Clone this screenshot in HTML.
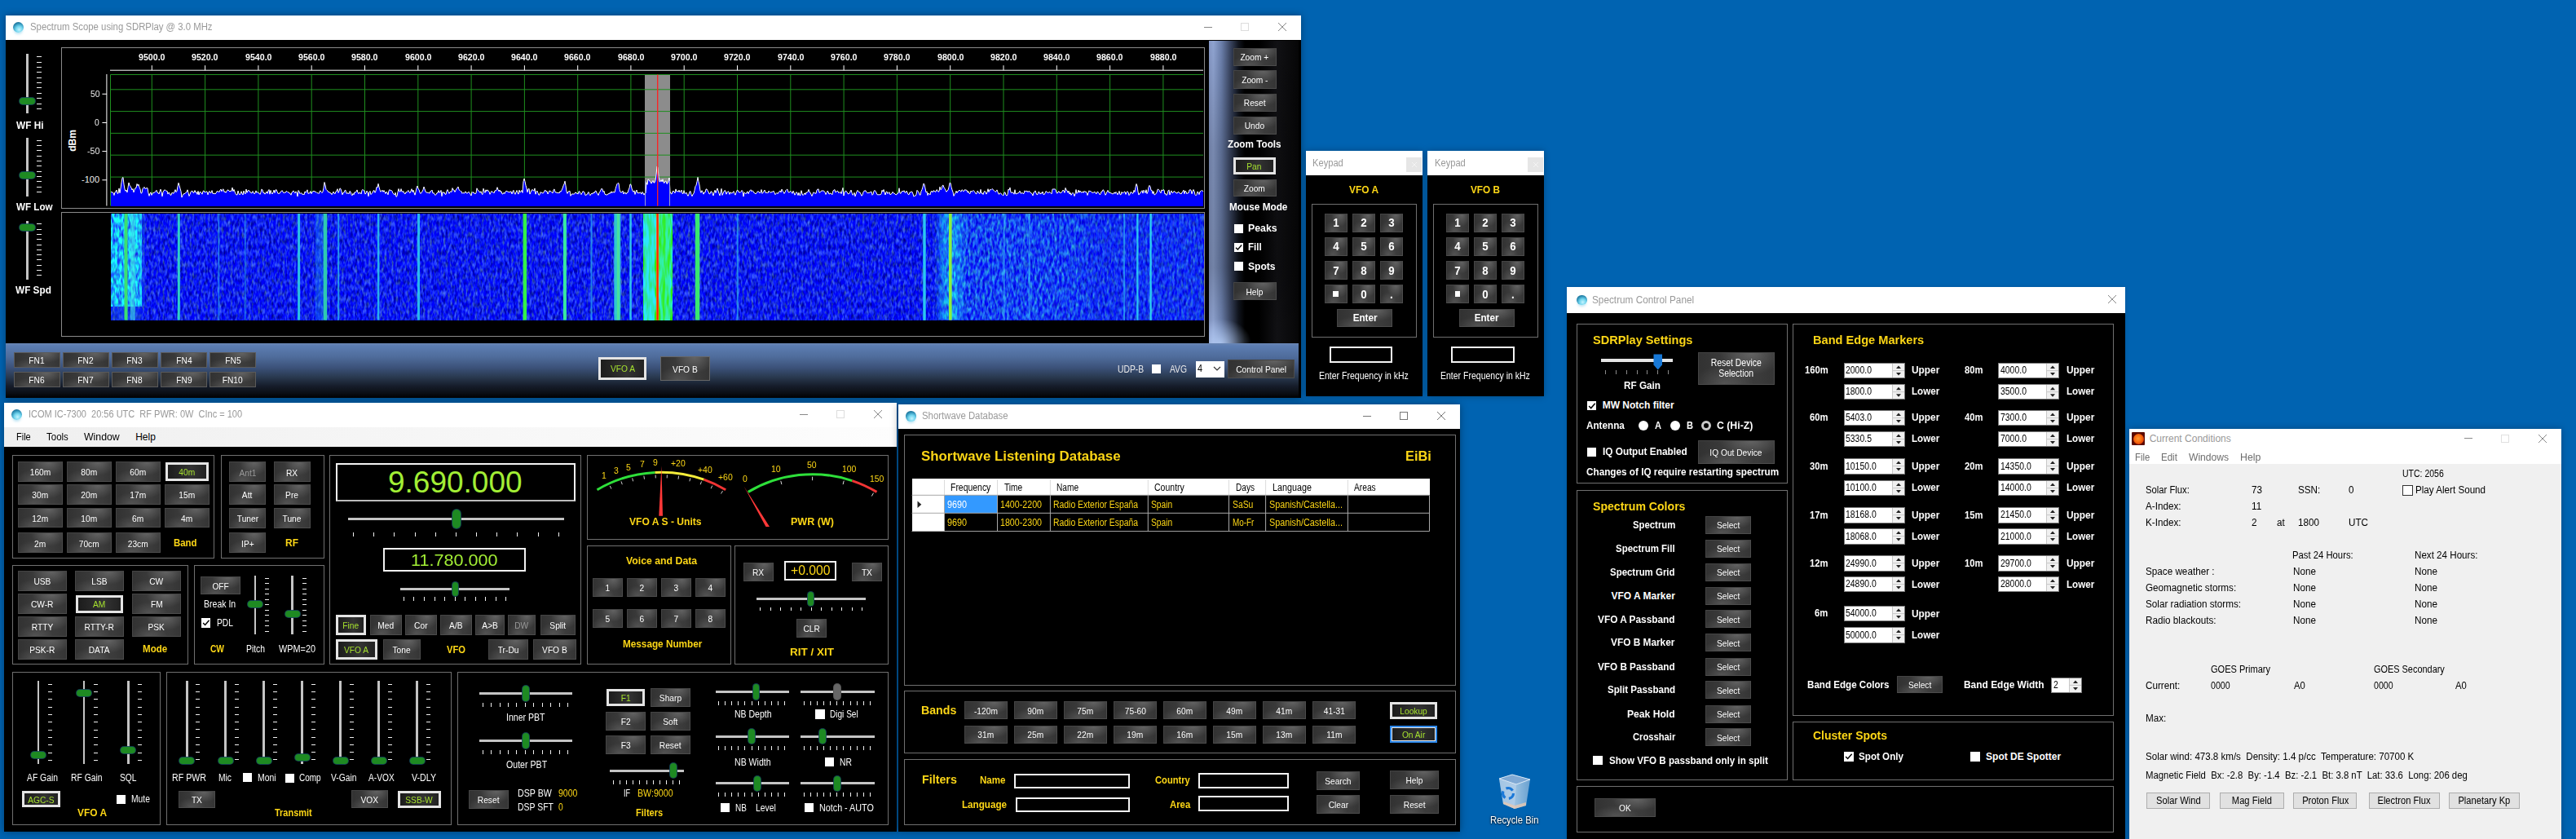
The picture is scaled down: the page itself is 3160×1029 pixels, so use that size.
<!DOCTYPE html><html><head><meta charset="utf-8"><title>desktop</title><style>
html,body{margin:0;padding:0}
body{width:3160px;height:1029px;overflow:hidden;position:relative;background:#0063b1;font-family:"Liberation Sans",sans-serif;font-size:12px}
div,span.t,svg.a{position:absolute;box-sizing:border-box}
.t{white-space:pre;transform-origin:0 50%;display:block}
.win{box-shadow:0 0 9px rgba(0,0,0,.36)}
.win.s2{box-shadow:0 0 8px rgba(0,0,0,.27)}
.win.s3{box-shadow:0 0 5px rgba(0,0,0,.13)}
.tb{background:#fff}
.ico{border-radius:50%;background:radial-gradient(circle at 58% 72%,#c4f4ff 0%,#6fd4ee 35%,#2484ac 68%,#0f4868 100%);box-shadow:0 3px 3px -1px rgba(120,200,230,.45)}
.g{border:1px solid #6f6f6f}
.b{background:radial-gradient(ellipse 42% 70% at 70% 0%,rgba(255,255,255,.2),rgba(255,255,255,0) 100%),radial-gradient(ellipse 40% 60% at 33% 100%,rgba(255,255,255,.13),rgba(255,255,255,0) 100%),linear-gradient(90deg,#323232 0%,#3e3e3e 50%,#3b3b3b 80%,#353535 100%);border:1px solid #4c4c4c;border-top-color:#444;border-left-color:#444;color:#fff;display:flex;align-items:center;justify-content:center;white-space:nowrap;overflow:hidden}
.b.sel{padding-top:0;border:3px solid #e4e4e4;color:#a6e22e;background:linear-gradient(90deg,#1c1c1c,#333 60%,#222)}
.b.dis{color:#999}
.trk{background:#c4c4c4}
.tk{background:#f0f0f0}
.th{background:#1e8a22;border-radius:5px;box-shadow:0 0 0 1px rgba(20,70,90,.9)}
.th.gy{background:#666;box-shadow:0 0 0 1px #555}
.ck{background:#fff}
.inp{border:2px solid #f4f4f4;background:#000}
.wb{background:#e1e1e1;border:1px solid #adadad;color:#000;display:flex;align-items:center;justify-content:center;white-space:nowrap}
</style></head><body><div style="left:0;top:0;width:3160px;height:1029px;overflow:hidden"><div class="win" style="left:7px;top:19px;width:1589px;height:469px;background:#000"></div>
<div class="tb" style="left:7.0px;top:19.0px;width:1589.0px;height:30.0px;"></div>
<div class="ico" style="left:16.0px;top:27.0px;width:13.0px;height:13.0px;"></div>
<span class="t" style="left:36.6px;top:26.3px;font-size:12px;line-height:14.4px;color:#999;transform:scaleX(0.946);">Spectrum Scope using SDRPlay @ 3.0 MHz</span>
<div class="" style="left:1477.0px;top:33.0px;width:10.0px;height:1.0px;position:absolute;background:#888"></div>
<div class="" style="left:1522.0px;top:28.0px;width:10.0px;height:10.0px;position:absolute;box-sizing:border-box;border:1px solid #ddd"></div>
<svg style="position:absolute;left:1567px;top:27px" width="12" height="12"><path d="M1 1L11 11M11 1L1 11" stroke="#888" stroke-width="1" fill="none"/></svg>
<div class="" style="left:1483.0px;top:50.0px;width:110.0px;height:371.0px;background:radial-gradient(ellipse 38px 30px at 14px 100%,rgba(190,215,255,.75),rgba(150,180,235,0) 100%),linear-gradient(180deg,rgba(0,0,0,0) 0%,rgba(0,0,0,.16) 35%,rgba(0,0,0,.2) 75%,rgba(0,0,0,0) 96%),linear-gradient(90deg,#8597c4 0%,#8fa3d0 5%,#6b7fab 14%,#39445f 24%,#10141d 33%,#000 40%,#000 56%,#111114 76%,#060607 100%)"></div>
<div class="" style="left:7.0px;top:421.0px;width:1586.0px;height:66.6px;background:linear-gradient(180deg,#6a86b4 0%,#5c7db2 5%,#4f6c9b 25%,#3b5179 45%,#29394f 62%,#161d2b 78%,#0a0d13 92%,#020203 100%)"></div>
<div class="" style="left:1483.0px;top:405.0px;width:113.0px;height:35.0px;background:linear-gradient(180deg,rgba(91,121,170,0) 0%,rgba(91,121,170,.0) 100%)"></div>
<div class="trk" style="left:32.2px;top:66.0px;width:2.6px;height:72.5px;"></div>
<div class="tk" style="left:45.0px;top:69.2px;width:5.5px;height:1.0px;"></div>
<div class="tk" style="left:45.0px;top:75.6px;width:5.5px;height:1.0px;"></div>
<div class="tk" style="left:45.0px;top:81.9px;width:5.5px;height:1.0px;"></div>
<div class="tk" style="left:45.0px;top:88.3px;width:5.5px;height:1.0px;"></div>
<div class="tk" style="left:45.0px;top:94.7px;width:5.5px;height:1.0px;"></div>
<div class="tk" style="left:45.0px;top:101.1px;width:5.5px;height:1.0px;"></div>
<div class="tk" style="left:45.0px;top:107.4px;width:5.5px;height:1.0px;"></div>
<div class="tk" style="left:45.0px;top:113.8px;width:5.5px;height:1.0px;"></div>
<div class="tk" style="left:45.0px;top:120.2px;width:5.5px;height:1.0px;"></div>
<div class="tk" style="left:45.0px;top:126.5px;width:5.5px;height:1.0px;"></div>
<div class="tk" style="left:45.0px;top:132.9px;width:5.5px;height:1.0px;"></div>
<div class="th" style="left:24.0px;top:120.3px;width:19.0px;height:8.0px;"></div>
<span class="t" style="left:19.7px;top:146.8px;font-size:12px;line-height:14.4px;color:#fff;font-weight:bold;transform:scaleX(0.986);">WF Hi</span>
<div class="trk" style="left:32.2px;top:168.5px;width:2.6px;height:72.0px;"></div>
<div class="tk" style="left:45.0px;top:171.7px;width:5.5px;height:1.0px;"></div>
<div class="tk" style="left:45.0px;top:178.0px;width:5.5px;height:1.0px;"></div>
<div class="tk" style="left:45.0px;top:184.3px;width:5.5px;height:1.0px;"></div>
<div class="tk" style="left:45.0px;top:190.7px;width:5.5px;height:1.0px;"></div>
<div class="tk" style="left:45.0px;top:197.0px;width:5.5px;height:1.0px;"></div>
<div class="tk" style="left:45.0px;top:203.3px;width:5.5px;height:1.0px;"></div>
<div class="tk" style="left:45.0px;top:209.6px;width:5.5px;height:1.0px;"></div>
<div class="tk" style="left:45.0px;top:215.9px;width:5.5px;height:1.0px;"></div>
<div class="tk" style="left:45.0px;top:222.3px;width:5.5px;height:1.0px;"></div>
<div class="tk" style="left:45.0px;top:228.6px;width:5.5px;height:1.0px;"></div>
<div class="tk" style="left:45.0px;top:234.9px;width:5.5px;height:1.0px;"></div>
<div class="th" style="left:24.0px;top:211.2px;width:19.0px;height:8.0px;"></div>
<span class="t" style="left:19.7px;top:246.6px;font-size:12px;line-height:14.4px;color:#fff;font-weight:bold;transform:scaleX(0.970);">WF Low</span>
<div class="trk" style="left:32.2px;top:271.0px;width:2.6px;height:72.0px;"></div>
<div class="tk" style="left:45.0px;top:274.2px;width:5.5px;height:1.0px;"></div>
<div class="tk" style="left:45.0px;top:280.5px;width:5.5px;height:1.0px;"></div>
<div class="tk" style="left:45.0px;top:286.8px;width:5.5px;height:1.0px;"></div>
<div class="tk" style="left:45.0px;top:293.2px;width:5.5px;height:1.0px;"></div>
<div class="tk" style="left:45.0px;top:299.5px;width:5.5px;height:1.0px;"></div>
<div class="tk" style="left:45.0px;top:305.8px;width:5.5px;height:1.0px;"></div>
<div class="tk" style="left:45.0px;top:312.1px;width:5.5px;height:1.0px;"></div>
<div class="tk" style="left:45.0px;top:318.4px;width:5.5px;height:1.0px;"></div>
<div class="tk" style="left:45.0px;top:324.8px;width:5.5px;height:1.0px;"></div>
<div class="tk" style="left:45.0px;top:331.1px;width:5.5px;height:1.0px;"></div>
<div class="tk" style="left:45.0px;top:337.4px;width:5.5px;height:1.0px;"></div>
<div class="th" style="left:24.0px;top:275.0px;width:19.0px;height:8.0px;"></div>
<span class="t" style="left:18.9px;top:349.3px;font-size:12px;line-height:14.4px;color:#fff;font-weight:bold;transform:scaleX(0.983);">WF Spd</span>
<div class="g" style="left:75.0px;top:58.0px;width:1403.0px;height:198.0px;border-color:#8a8a8a"></div>
<div class="g" style="left:75.0px;top:260.0px;width:1403.0px;height:152.5px;border-color:#8a8a8a"></div>
<svg class="a" style="left:75px;top:58px" width="1403" height="198" viewBox="75 58 1403 198"><rect x="791" y="91.4" width="31" height="161" fill="#8c8c8c"/><path d="M135.5 91.5V252.5M186.3 91.5V252.5M251.6 91.5V252.5M316.9 91.5V252.5M382.2 91.5V252.5M447.5 91.5V252.5M512.8 91.5V252.5M578.1 91.5V252.5M643.4 91.5V252.5M708.7 91.5V252.5M773.9 91.5V252.5M839.2 91.5V252.5M904.5 91.5V252.5M969.8 91.5V252.5M1035.1 91.5V252.5M1100.4 91.5V252.5M1165.7 91.5V252.5M1231.0 91.5V252.5M1296.3 91.5V252.5M1361.6 91.5V252.5M1426.9 91.5V252.5M135.5 91.5H1476M135.5 109.8H1476M135.5 136.6H1476M135.5 163.4H1476M135.5 190.2H1476M135.5 217.1H1476M135.5 243.9H1476" stroke="#1f8f1f" stroke-width="1" fill="none"/><polygon points="136,253 136,235.0 137,235.7 138,235.9 139,236.4 140,239.5 141,235.6 142,235.2 143,233.0 144,237.3 145,237.1 146,231.0 147,236.7 148,231.0 149,223.8 150,218.2 151,217.5 152,226.1 153,231.9 154,234.4 155,233.0 156,236.0 157,229.7 158,224.0 159,227.2 160,228.5 161,230.2 162,233.0 163,231.5 164,235.9 165,233.0 166,230.5 167,230.5 168,225.5 169,227.8 170,226.1 171,229.7 172,231.9 173,237.1 174,236.7 175,231.3 176,230.5 177,229.4 178,231.5 179,231.2 180,230.5 181,230.7 182,236.7 183,240.4 184,237.1 185,235.8 186,239.4 187,237.2 188,236.3 189,236.4 190,235.6 191,234.7 192,233.3 193,236.2 194,236.4 195,238.0 196,234.9 197,232.1 198,235.6 199,240.9 200,235.5 201,233.6 202,232.9 203,233.3 204,234.4 205,234.2 206,238.1 207,236.0 208,236.6 209,239.3 210,239.2 211,236.2 212,236.7 213,237.3 214,235.1 215,232.6 216,235.7 217,234.3 218,228.8 219,224.3 220,227.4 221,231.2 222,234.7 223,242.1 224,239.6 225,238.0 226,237.5 227,237.4 228,236.1 229,235.5 230,232.8 231,236.4 232,240.5 233,238.3 234,235.4 235,234.5 236,234.2 237,236.4 238,236.2 239,233.5 240,236.0 241,235.6 242,238.4 243,234.3 244,239.0 245,235.6 246,235.3 247,236.8 248,238.2 249,234.6 250,233.9 251,235.8 252,235.8 253,234.8 254,235.2 255,238.8 256,235.5 257,234.4 258,236.8 259,236.4 260,233.6 261,237.5 262,237.3 263,237.2 264,238.0 265,236.6 266,234.7 267,234.8 268,234.9 269,235.6 270,233.2 271,232.0 272,234.8 273,232.6 274,231.8 275,235.5 276,234.9 277,236.3 278,234.6 279,233.1 280,232.9 281,234.3 282,234.8 283,234.1 284,234.4 285,230.0 286,234.6 287,232.4 288,235.1 289,237.6 290,238.9 291,239.0 292,234.0 293,237.2 294,238.9 295,237.9 296,234.7 297,237.1 298,239.0 299,234.0 300,236.6 301,237.9 302,232.0 303,236.3 304,233.8 305,233.6 306,234.1 307,235.9 308,236.2 309,237.1 310,234.5 311,235.7 312,237.9 313,236.8 314,233.9 315,236.4 316,235.4 317,236.6 318,237.1 319,238.4 320,235.9 321,231.9 322,232.9 323,236.6 324,236.2 325,238.1 326,236.6 327,235.0 328,237.3 329,234.0 330,232.5 331,238.2 332,233.4 333,236.7 334,238.0 335,235.9 336,233.2 337,236.6 338,233.0 339,232.6 340,235.0 341,237.4 342,237.1 343,237.4 344,235.3 345,234.9 346,233.6 347,235.1 348,236.8 349,235.8 350,236.4 351,234.8 352,234.6 353,235.7 354,235.8 355,237.0 356,237.2 357,239.2 358,236.1 359,235.0 360,233.9 361,235.8 362,236.9 363,234.8 364,235.8 365,241.0 366,233.5 367,234.9 368,237.6 369,236.6 370,237.2 371,238.7 372,237.8 373,238.9 374,234.9 375,236.2 376,234.8 377,232.8 378,237.5 379,236.8 380,236.8 381,234.5 382,237.6 383,235.3 384,234.9 385,234.2 386,234.9 387,235.3 388,235.6 389,236.7 390,236.6 391,237.6 392,235.0 393,233.8 394,235.5 395,236.6 396,235.1 397,230.7 398,223.5 399,226.9 400,232.3 401,233.4 402,234.1 403,235.9 404,235.3 405,236.9 406,236.7 407,238.7 408,237.1 409,235.0 410,237.1 411,237.7 412,235.0 413,234.0 414,231.7 415,236.4 416,234.3 417,230.9 418,231.6 419,235.1 420,238.8 421,236.2 422,236.3 423,233.5 424,233.3 425,237.2 426,237.2 427,236.6 428,237.9 429,234.5 430,235.1 431,238.4 432,239.8 433,237.3 434,238.8 435,235.6 436,236.2 437,235.1 438,232.9 439,236.1 440,237.7 441,236.0 442,236.3 443,238.0 444,233.5 445,232.3 446,233.6 447,233.9 448,238.1 449,236.7 450,234.1 451,235.5 452,240.8 453,235.6 454,234.3 455,238.6 456,237.3 457,236.2 458,233.8 459,233.6 460,236.3 461,234.2 462,229.4 463,230.1 464,225.3 465,229.5 466,232.9 467,235.3 468,234.1 469,233.2 470,235.4 471,233.5 472,235.5 473,237.5 474,235.1 475,236.3 476,238.8 477,234.0 478,232.5 479,233.7 480,233.3 481,234.5 482,236.8 483,238.2 484,239.1 485,236.2 486,241.4 487,240.6 488,235.4 489,231.5 490,234.8 491,235.1 492,231.6 493,235.0 494,235.2 495,234.6 496,237.2 497,237.9 498,235.5 499,235.9 500,234.4 501,233.5 502,235.9 503,236.7 504,234.2 505,231.7 506,235.5 507,233.2 508,236.2 509,239.2 510,235.3 511,230.4 512,228.0 513,231.6 514,232.5 515,236.1 516,237.5 517,236.0 518,234.9 519,232.7 520,229.1 521,231.8 522,235.1 523,235.7 524,236.5 525,235.9 526,236.5 527,237.1 528,234.4 529,234.3 530,233.1 531,237.1 532,236.6 533,237.5 534,239.5 535,238.5 536,236.5 537,236.8 538,233.6 539,236.2 540,235.7 541,233.4 542,240.7 543,235.4 544,236.7 545,235.8 546,238.1 547,238.4 548,234.2 549,232.6 550,235.4 551,237.3 552,235.3 553,234.8 554,235.5 555,230.6 556,233.0 557,233.1 558,235.5 559,233.6 560,231.5 561,230.7 562,229.0 563,232.7 564,233.4 565,234.4 566,234.7 567,237.3 568,236.3 569,237.0 570,236.7 571,234.8 572,236.8 573,236.9 574,236.5 575,235.1 576,236.8 577,238.1 578,240.0 579,235.4 580,236.4 581,235.7 582,237.4 583,237.5 584,236.9 585,230.8 586,233.2 587,233.7 588,235.0 589,236.2 590,234.7 591,237.7 592,238.6 593,231.2 594,234.3 595,236.4 596,232.8 597,234.7 598,232.8 599,233.9 600,235.2 601,238.3 602,236.2 603,234.4 604,235.6 605,235.7 606,236.9 607,233.8 608,234.1 609,233.2 610,229.7 611,232.6 612,234.7 613,233.0 614,235.5 615,234.6 616,237.9 617,237.9 618,236.2 619,237.5 620,235.2 621,234.3 622,234.5 623,235.3 624,235.3 625,235.8 626,235.1 627,234.9 628,237.9 629,234.8 630,233.3 631,237.2 632,238.3 633,235.5 634,233.5 635,236.5 636,238.1 637,233.2 638,235.9 639,235.0 640,233.4 641,236.4 642,222.6 643,219.1 644,222.4 645,227.5 646,230.7 647,235.8 648,231.9 649,231.3 650,238.1 651,235.7 652,233.3 653,232.6 654,233.2 655,234.3 656,230.9 657,238.2 658,234.8 659,234.2 660,236.8 661,239.3 662,238.8 663,235.6 664,236.2 665,236.5 666,237.1 667,236.2 668,233.7 669,233.2 670,235.2 671,234.5 672,238.0 673,236.1 674,233.8 675,234.7 676,234.8 677,235.8 678,237.0 679,232.8 680,231.9 681,235.7 682,235.8 683,236.3 684,236.7 685,236.1 686,237.0 687,234.6 688,235.2 689,233.3 690,231.0 691,227.9 692,225.7 693,222.2 694,227.8 695,234.7 696,237.4 697,235.0 698,234.7 699,234.2 700,240.3 701,238.2 702,238.0 703,237.9 704,238.2 705,237.3 706,235.8 707,237.2 708,236.9 709,238.1 710,234.8 711,234.8 712,237.4 713,238.6 714,236.4 715,234.6 716,235.2 717,235.7 718,239.6 719,238.9 720,238.8 721,236.8 722,235.4 723,238.6 724,239.7 725,237.7 726,237.5 727,237.8 728,235.9 729,236.9 730,234.5 731,234.0 732,236.7 733,237.5 734,239.5 735,236.2 736,235.4 737,233.0 738,231.2 739,232.0 740,235.6 741,234.3 742,238.1 743,238.9 744,238.8 745,239.0 746,237.5 747,238.0 748,236.3 749,237.2 750,234.8 751,236.5 752,235.2 753,235.5 754,236.1 755,231.7 756,228.3 757,225.5 758,224.5 759,224.8 760,232.3 761,235.6 762,235.9 763,235.7 764,234.1 765,238.0 766,236.0 767,236.1 768,238.1 769,236.3 770,236.4 771,233.0 772,230.5 773,225.8 774,226.4 775,231.1 776,234.1 777,235.4 778,233.8 779,238.4 780,234.9 781,233.0 782,236.8 783,236.3 784,237.0 785,235.9 786,236.3 787,238.1 788,235.4 789,236.7 790,239.1 791,237.0 792,237.0 793,223.8 794,226.4 795,220.0 796,220.4 797,222.1 798,223.5 799,225.1 800,223.0 801,221.5 802,224.1 803,223.9 804,221.1 805,214.2 806,204.3 807,205.5 808,216.6 809,222.7 810,222.8 811,220.5 812,222.9 813,219.8 814,223.7 815,224.5 816,222.4 817,222.1 818,225.5 819,224.7 820,221.6 821,218.0 822,234.8 823,237.5 824,238.0 825,234.8 826,234.2 827,235.1 828,236.8 829,231.9 830,234.8 831,234.2 832,235.4 833,233.2 834,235.8 835,235.0 836,233.1 837,237.3 838,237.6 839,233.6 840,237.3 841,237.2 842,236.1 843,238.5 844,240.4 845,238.2 846,235.0 847,234.5 848,238.7 849,240.7 850,238.2 851,237.4 852,233.4 853,228.6 854,227.2 855,222.8 856,217.4 857,222.7 858,227.0 859,234.0 860,236.4 861,233.7 862,235.2 863,238.2 864,235.8 865,236.0 866,232.1 867,231.9 868,233.7 869,235.2 870,237.9 871,237.7 872,234.8 873,235.0 874,237.2 875,240.0 876,235.8 877,233.3 878,236.6 879,233.7 880,231.0 881,234.0 882,237.3 883,239.9 884,235.5 885,231.4 886,239.4 887,237.0 888,235.0 889,233.4 890,234.2 891,238.2 892,235.8 893,234.6 894,235.4 895,238.4 896,235.7 897,237.0 898,236.8 899,236.1 900,234.6 901,237.4 902,239.2 903,236.1 904,233.6 905,233.2 906,235.6 907,235.4 908,236.3 909,235.3 910,233.4 911,234.4 912,241.1 913,235.9 914,236.7 915,237.8 916,236.0 917,234.8 918,237.6 919,235.3 920,233.7 921,232.7 922,234.9 923,233.7 924,234.7 925,236.6 926,236.6 927,238.0 928,236.7 929,235.1 930,234.9 931,235.1 932,236.9 933,236.0 934,232.5 935,237.4 936,236.2 937,234.4 938,233.0 939,236.2 940,236.5 941,235.9 942,236.9 943,234.1 944,235.2 945,236.2 946,235.7 947,235.4 948,235.1 949,234.2 950,236.2 951,238.7 952,237.4 953,236.4 954,237.7 955,235.9 956,235.0 957,233.9 958,236.0 959,232.0 960,234.2 961,235.4 962,237.4 963,235.9 964,233.5 965,232.5 966,232.2 967,235.8 968,236.0 969,235.3 970,234.4 971,235.6 972,237.3 973,234.2 974,236.2 975,239.2 976,237.4 977,235.5 978,236.7 979,239.6 980,236.2 981,239.6 982,239.4 983,233.7 984,237.3 985,239.6 986,238.4 987,236.8 988,238.7 989,235.8 990,236.5 991,235.2 992,232.4 993,235.7 994,236.1 995,238.4 996,240.5 997,237.9 998,235.7 999,236.7 1000,236.9 1001,237.3 1002,233.1 1003,232.3 1004,231.8 1005,236.2 1006,235.9 1007,234.4 1008,234.0 1009,234.1 1010,233.8 1011,234.7 1012,235.4 1013,238.5 1014,236.7 1015,234.2 1016,235.0 1017,238.1 1018,237.4 1019,236.9 1020,238.0 1021,238.7 1022,233.9 1023,233.3 1024,232.5 1025,236.0 1026,235.1 1027,234.2 1028,234.5 1029,236.8 1030,235.7 1031,235.3 1032,237.6 1033,233.9 1034,230.3 1035,240.1 1036,236.0 1037,234.4 1038,234.2 1039,235.7 1040,237.6 1041,237.9 1042,237.1 1043,235.0 1044,233.1 1045,236.4 1046,239.3 1047,238.5 1048,236.3 1049,240.9 1050,237.9 1051,235.1 1052,233.4 1053,234.9 1054,236.0 1055,235.9 1056,238.0 1057,240.3 1058,239.0 1059,235.6 1060,234.1 1061,234.0 1062,233.8 1063,235.7 1064,236.8 1065,236.5 1066,236.4 1067,236.2 1068,235.4 1069,235.1 1070,239.3 1071,238.2 1072,234.2 1073,233.6 1074,234.4 1075,236.2 1076,238.7 1077,238.8 1078,238.8 1079,238.8 1080,238.7 1081,237.9 1082,233.3 1083,235.2 1084,232.5 1085,235.7 1086,239.0 1087,235.4 1088,234.9 1089,237.6 1090,236.3 1091,235.7 1092,238.9 1093,238.0 1094,237.4 1095,235.3 1096,236.8 1097,237.1 1098,238.0 1099,238.8 1100,238.6 1101,237.0 1102,236.8 1103,230.7 1104,236.9 1105,237.3 1106,235.1 1107,234.3 1108,235.0 1109,233.7 1110,236.2 1111,236.2 1112,234.2 1113,236.0 1114,238.4 1115,238.8 1116,235.9 1117,235.9 1118,235.0 1119,235.3 1120,237.8 1121,241.2 1122,240.2 1123,240.0 1124,238.4 1125,233.3 1126,234.7 1127,235.5 1128,238.8 1129,239.2 1130,234.5 1131,232.6 1132,229.3 1133,225.0 1134,226.3 1135,231.0 1136,235.9 1137,234.8 1138,239.6 1139,236.8 1140,238.0 1141,238.9 1142,234.9 1143,234.3 1144,235.9 1145,233.8 1146,234.0 1147,235.2 1148,235.2 1149,232.6 1150,233.5 1151,235.2 1152,234.7 1153,229.1 1154,232.8 1155,231.9 1156,227.6 1157,227.1 1158,230.1 1159,231.3 1160,233.3 1161,235.3 1162,233.9 1163,233.1 1164,229.4 1165,224.3 1166,224.5 1167,229.5 1168,232.9 1169,235.6 1170,240.4 1171,238.2 1172,236.5 1173,234.3 1174,236.6 1175,234.6 1176,234.2 1177,233.0 1178,234.4 1179,235.2 1180,232.7 1181,233.6 1182,234.9 1183,233.0 1184,232.7 1185,233.3 1186,233.2 1187,236.1 1188,234.6 1189,237.3 1190,237.5 1191,234.0 1192,235.3 1193,234.6 1194,233.4 1195,234.7 1196,235.6 1197,237.6 1198,237.7 1199,234.1 1200,234.9 1201,237.2 1202,237.3 1203,232.3 1204,237.3 1205,236.7 1206,238.5 1207,235.4 1208,234.2 1209,236.1 1210,238.1 1211,235.5 1212,231.7 1213,235.6 1214,232.7 1215,232.9 1216,232.6 1217,231.5 1218,232.4 1219,233.3 1220,234.3 1221,235.4 1222,234.6 1223,232.9 1224,235.4 1225,238.0 1226,238.1 1227,236.5 1228,237.5 1229,238.4 1230,239.5 1231,239.5 1232,235.9 1233,235.9 1234,239.2 1235,240.1 1236,238.5 1237,232.0 1238,233.2 1239,230.0 1240,236.0 1241,236.3 1242,236.0 1243,236.2 1244,238.2 1245,232.7 1246,238.0 1247,237.5 1248,237.0 1249,237.0 1250,235.9 1251,234.2 1252,237.1 1253,237.1 1254,236.2 1255,237.6 1256,237.4 1257,233.8 1258,234.9 1259,234.6 1260,234.1 1261,235.8 1262,234.3 1263,234.8 1264,236.3 1265,236.8 1266,237.6 1267,240.0 1268,236.0 1269,235.7 1270,233.9 1271,236.8 1272,238.8 1273,238.4 1274,235.1 1275,235.6 1276,238.1 1277,236.6 1278,237.3 1279,235.0 1280,238.5 1281,238.6 1282,236.9 1283,234.5 1284,235.3 1285,236.2 1286,236.4 1287,235.7 1288,235.5 1289,236.7 1290,237.8 1291,232.1 1292,231.9 1293,232.1 1294,231.8 1295,232.6 1296,236.3 1297,237.2 1298,235.2 1299,234.6 1300,236.4 1301,236.4 1302,236.3 1303,234.9 1304,233.0 1305,233.9 1306,236.4 1307,230.4 1308,233.0 1309,233.7 1310,236.3 1311,234.2 1312,238.1 1313,236.2 1314,239.3 1315,237.6 1316,236.3 1317,237.6 1318,240.6 1319,237.6 1320,232.5 1321,237.3 1322,236.2 1323,233.2 1324,236.2 1325,234.0 1326,235.8 1327,236.2 1328,235.0 1329,236.4 1330,234.3 1331,235.6 1332,234.9 1333,236.1 1334,239.5 1335,236.5 1336,233.8 1337,234.9 1338,234.4 1339,235.7 1340,236.3 1341,236.2 1342,235.9 1343,235.1 1344,237.0 1345,237.8 1346,235.1 1347,235.6 1348,236.5 1349,238.7 1350,238.2 1351,235.0 1352,235.1 1353,232.7 1354,233.5 1355,235.8 1356,239.3 1357,237.8 1358,235.2 1359,233.4 1360,236.0 1361,235.9 1362,236.7 1363,236.7 1364,237.6 1365,237.8 1366,237.6 1367,235.8 1368,237.4 1369,235.4 1370,236.6 1371,238.8 1372,236.9 1373,234.4 1374,238.6 1375,238.9 1376,235.4 1377,236.9 1378,236.5 1379,235.3 1380,235.1 1381,238.4 1382,235.6 1383,234.7 1384,235.6 1385,239.6 1386,238.2 1387,235.5 1388,235.9 1389,237.2 1390,237.1 1391,233.4 1392,235.5 1393,229.6 1394,225.5 1395,228.0 1396,235.1 1397,239.1 1398,237.1 1399,236.7 1400,234.8 1401,233.7 1402,237.1 1403,233.2 1404,234.6 1405,236.5 1406,232.7 1407,237.5 1408,235.5 1409,229.6 1410,227.4 1411,228.8 1412,233.4 1413,233.4 1414,237.5 1415,234.6 1416,238.8 1417,238.7 1418,237.2 1419,236.3 1420,232.3 1421,232.2 1422,233.3 1423,235.2 1424,236.8 1425,232.8 1426,234.0 1427,232.6 1428,233.0 1429,238.1 1430,237.3 1431,239.5 1432,238.4 1433,233.9 1434,232.9 1435,238.9 1436,235.5 1437,233.9 1438,236.8 1439,236.2 1440,234.5 1441,235.0 1442,236.1 1443,236.4 1444,237.2 1445,235.4 1446,235.4 1447,237.0 1448,237.2 1449,238.0 1450,235.8 1451,235.1 1452,233.1 1453,237.7 1454,234.0 1455,235.4 1456,237.8 1457,236.5 1458,236.8 1459,233.0 1460,232.8 1461,233.1 1462,237.7 1463,235.0 1464,232.5 1465,234.5 1466,238.7 1467,239.8 1468,238.6 1469,234.9 1470,236.0 1471,238.6 1472,235.0 1473,234.6 1474,233.5 1475,233.8 1476,235.0 1476,253" fill="#0000ff"/><polyline points="136,235.0 137,235.7 138,235.9 139,236.4 140,239.5 141,235.6 142,235.2 143,233.0 144,237.3 145,237.1 146,231.0 147,236.7 148,231.0 149,223.8 150,218.2 151,217.5 152,226.1 153,231.9 154,234.4 155,233.0 156,236.0 157,229.7 158,224.0 159,227.2 160,228.5 161,230.2 162,233.0 163,231.5 164,235.9 165,233.0 166,230.5 167,230.5 168,225.5 169,227.8 170,226.1 171,229.7 172,231.9 173,237.1 174,236.7 175,231.3 176,230.5 177,229.4 178,231.5 179,231.2 180,230.5 181,230.7 182,236.7 183,240.4 184,237.1 185,235.8 186,239.4 187,237.2 188,236.3 189,236.4 190,235.6 191,234.7 192,233.3 193,236.2 194,236.4 195,238.0 196,234.9 197,232.1 198,235.6 199,240.9 200,235.5 201,233.6 202,232.9 203,233.3 204,234.4 205,234.2 206,238.1 207,236.0 208,236.6 209,239.3 210,239.2 211,236.2 212,236.7 213,237.3 214,235.1 215,232.6 216,235.7 217,234.3 218,228.8 219,224.3 220,227.4 221,231.2 222,234.7 223,242.1 224,239.6 225,238.0 226,237.5 227,237.4 228,236.1 229,235.5 230,232.8 231,236.4 232,240.5 233,238.3 234,235.4 235,234.5 236,234.2 237,236.4 238,236.2 239,233.5 240,236.0 241,235.6 242,238.4 243,234.3 244,239.0 245,235.6 246,235.3 247,236.8 248,238.2 249,234.6 250,233.9 251,235.8 252,235.8 253,234.8 254,235.2 255,238.8 256,235.5 257,234.4 258,236.8 259,236.4 260,233.6 261,237.5 262,237.3 263,237.2 264,238.0 265,236.6 266,234.7 267,234.8 268,234.9 269,235.6 270,233.2 271,232.0 272,234.8 273,232.6 274,231.8 275,235.5 276,234.9 277,236.3 278,234.6 279,233.1 280,232.9 281,234.3 282,234.8 283,234.1 284,234.4 285,230.0 286,234.6 287,232.4 288,235.1 289,237.6 290,238.9 291,239.0 292,234.0 293,237.2 294,238.9 295,237.9 296,234.7 297,237.1 298,239.0 299,234.0 300,236.6 301,237.9 302,232.0 303,236.3 304,233.8 305,233.6 306,234.1 307,235.9 308,236.2 309,237.1 310,234.5 311,235.7 312,237.9 313,236.8 314,233.9 315,236.4 316,235.4 317,236.6 318,237.1 319,238.4 320,235.9 321,231.9 322,232.9 323,236.6 324,236.2 325,238.1 326,236.6 327,235.0 328,237.3 329,234.0 330,232.5 331,238.2 332,233.4 333,236.7 334,238.0 335,235.9 336,233.2 337,236.6 338,233.0 339,232.6 340,235.0 341,237.4 342,237.1 343,237.4 344,235.3 345,234.9 346,233.6 347,235.1 348,236.8 349,235.8 350,236.4 351,234.8 352,234.6 353,235.7 354,235.8 355,237.0 356,237.2 357,239.2 358,236.1 359,235.0 360,233.9 361,235.8 362,236.9 363,234.8 364,235.8 365,241.0 366,233.5 367,234.9 368,237.6 369,236.6 370,237.2 371,238.7 372,237.8 373,238.9 374,234.9 375,236.2 376,234.8 377,232.8 378,237.5 379,236.8 380,236.8 381,234.5 382,237.6 383,235.3 384,234.9 385,234.2 386,234.9 387,235.3 388,235.6 389,236.7 390,236.6 391,237.6 392,235.0 393,233.8 394,235.5 395,236.6 396,235.1 397,230.7 398,223.5 399,226.9 400,232.3 401,233.4 402,234.1 403,235.9 404,235.3 405,236.9 406,236.7 407,238.7 408,237.1 409,235.0 410,237.1 411,237.7 412,235.0 413,234.0 414,231.7 415,236.4 416,234.3 417,230.9 418,231.6 419,235.1 420,238.8 421,236.2 422,236.3 423,233.5 424,233.3 425,237.2 426,237.2 427,236.6 428,237.9 429,234.5 430,235.1 431,238.4 432,239.8 433,237.3 434,238.8 435,235.6 436,236.2 437,235.1 438,232.9 439,236.1 440,237.7 441,236.0 442,236.3 443,238.0 444,233.5 445,232.3 446,233.6 447,233.9 448,238.1 449,236.7 450,234.1 451,235.5 452,240.8 453,235.6 454,234.3 455,238.6 456,237.3 457,236.2 458,233.8 459,233.6 460,236.3 461,234.2 462,229.4 463,230.1 464,225.3 465,229.5 466,232.9 467,235.3 468,234.1 469,233.2 470,235.4 471,233.5 472,235.5 473,237.5 474,235.1 475,236.3 476,238.8 477,234.0 478,232.5 479,233.7 480,233.3 481,234.5 482,236.8 483,238.2 484,239.1 485,236.2 486,241.4 487,240.6 488,235.4 489,231.5 490,234.8 491,235.1 492,231.6 493,235.0 494,235.2 495,234.6 496,237.2 497,237.9 498,235.5 499,235.9 500,234.4 501,233.5 502,235.9 503,236.7 504,234.2 505,231.7 506,235.5 507,233.2 508,236.2 509,239.2 510,235.3 511,230.4 512,228.0 513,231.6 514,232.5 515,236.1 516,237.5 517,236.0 518,234.9 519,232.7 520,229.1 521,231.8 522,235.1 523,235.7 524,236.5 525,235.9 526,236.5 527,237.1 528,234.4 529,234.3 530,233.1 531,237.1 532,236.6 533,237.5 534,239.5 535,238.5 536,236.5 537,236.8 538,233.6 539,236.2 540,235.7 541,233.4 542,240.7 543,235.4 544,236.7 545,235.8 546,238.1 547,238.4 548,234.2 549,232.6 550,235.4 551,237.3 552,235.3 553,234.8 554,235.5 555,230.6 556,233.0 557,233.1 558,235.5 559,233.6 560,231.5 561,230.7 562,229.0 563,232.7 564,233.4 565,234.4 566,234.7 567,237.3 568,236.3 569,237.0 570,236.7 571,234.8 572,236.8 573,236.9 574,236.5 575,235.1 576,236.8 577,238.1 578,240.0 579,235.4 580,236.4 581,235.7 582,237.4 583,237.5 584,236.9 585,230.8 586,233.2 587,233.7 588,235.0 589,236.2 590,234.7 591,237.7 592,238.6 593,231.2 594,234.3 595,236.4 596,232.8 597,234.7 598,232.8 599,233.9 600,235.2 601,238.3 602,236.2 603,234.4 604,235.6 605,235.7 606,236.9 607,233.8 608,234.1 609,233.2 610,229.7 611,232.6 612,234.7 613,233.0 614,235.5 615,234.6 616,237.9 617,237.9 618,236.2 619,237.5 620,235.2 621,234.3 622,234.5 623,235.3 624,235.3 625,235.8 626,235.1 627,234.9 628,237.9 629,234.8 630,233.3 631,237.2 632,238.3 633,235.5 634,233.5 635,236.5 636,238.1 637,233.2 638,235.9 639,235.0 640,233.4 641,236.4 642,222.6 643,219.1 644,222.4 645,227.5 646,230.7 647,235.8 648,231.9 649,231.3 650,238.1 651,235.7 652,233.3 653,232.6 654,233.2 655,234.3 656,230.9 657,238.2 658,234.8 659,234.2 660,236.8 661,239.3 662,238.8 663,235.6 664,236.2 665,236.5 666,237.1 667,236.2 668,233.7 669,233.2 670,235.2 671,234.5 672,238.0 673,236.1 674,233.8 675,234.7 676,234.8 677,235.8 678,237.0 679,232.8 680,231.9 681,235.7 682,235.8 683,236.3 684,236.7 685,236.1 686,237.0 687,234.6 688,235.2 689,233.3 690,231.0 691,227.9 692,225.7 693,222.2 694,227.8 695,234.7 696,237.4 697,235.0 698,234.7 699,234.2 700,240.3 701,238.2 702,238.0 703,237.9 704,238.2 705,237.3 706,235.8 707,237.2 708,236.9 709,238.1 710,234.8 711,234.8 712,237.4 713,238.6 714,236.4 715,234.6 716,235.2 717,235.7 718,239.6 719,238.9 720,238.8 721,236.8 722,235.4 723,238.6 724,239.7 725,237.7 726,237.5 727,237.8 728,235.9 729,236.9 730,234.5 731,234.0 732,236.7 733,237.5 734,239.5 735,236.2 736,235.4 737,233.0 738,231.2 739,232.0 740,235.6 741,234.3 742,238.1 743,238.9 744,238.8 745,239.0 746,237.5 747,238.0 748,236.3 749,237.2 750,234.8 751,236.5 752,235.2 753,235.5 754,236.1 755,231.7 756,228.3 757,225.5 758,224.5 759,224.8 760,232.3 761,235.6 762,235.9 763,235.7 764,234.1 765,238.0 766,236.0 767,236.1 768,238.1 769,236.3 770,236.4 771,233.0 772,230.5 773,225.8 774,226.4 775,231.1 776,234.1 777,235.4 778,233.8 779,238.4 780,234.9 781,233.0 782,236.8 783,236.3 784,237.0 785,235.9 786,236.3 787,238.1 788,235.4 789,236.7 790,239.1 791,237.0 792,237.0 793,223.8 794,226.4 795,220.0 796,220.4 797,222.1 798,223.5 799,225.1 800,223.0 801,221.5 802,224.1 803,223.9 804,221.1 805,214.2 806,204.3 807,205.5 808,216.6 809,222.7 810,222.8 811,220.5 812,222.9 813,219.8 814,223.7 815,224.5 816,222.4 817,222.1 818,225.5 819,224.7 820,221.6 821,218.0 822,234.8 823,237.5 824,238.0 825,234.8 826,234.2 827,235.1 828,236.8 829,231.9 830,234.8 831,234.2 832,235.4 833,233.2 834,235.8 835,235.0 836,233.1 837,237.3 838,237.6 839,233.6 840,237.3 841,237.2 842,236.1 843,238.5 844,240.4 845,238.2 846,235.0 847,234.5 848,238.7 849,240.7 850,238.2 851,237.4 852,233.4 853,228.6 854,227.2 855,222.8 856,217.4 857,222.7 858,227.0 859,234.0 860,236.4 861,233.7 862,235.2 863,238.2 864,235.8 865,236.0 866,232.1 867,231.9 868,233.7 869,235.2 870,237.9 871,237.7 872,234.8 873,235.0 874,237.2 875,240.0 876,235.8 877,233.3 878,236.6 879,233.7 880,231.0 881,234.0 882,237.3 883,239.9 884,235.5 885,231.4 886,239.4 887,237.0 888,235.0 889,233.4 890,234.2 891,238.2 892,235.8 893,234.6 894,235.4 895,238.4 896,235.7 897,237.0 898,236.8 899,236.1 900,234.6 901,237.4 902,239.2 903,236.1 904,233.6 905,233.2 906,235.6 907,235.4 908,236.3 909,235.3 910,233.4 911,234.4 912,241.1 913,235.9 914,236.7 915,237.8 916,236.0 917,234.8 918,237.6 919,235.3 920,233.7 921,232.7 922,234.9 923,233.7 924,234.7 925,236.6 926,236.6 927,238.0 928,236.7 929,235.1 930,234.9 931,235.1 932,236.9 933,236.0 934,232.5 935,237.4 936,236.2 937,234.4 938,233.0 939,236.2 940,236.5 941,235.9 942,236.9 943,234.1 944,235.2 945,236.2 946,235.7 947,235.4 948,235.1 949,234.2 950,236.2 951,238.7 952,237.4 953,236.4 954,237.7 955,235.9 956,235.0 957,233.9 958,236.0 959,232.0 960,234.2 961,235.4 962,237.4 963,235.9 964,233.5 965,232.5 966,232.2 967,235.8 968,236.0 969,235.3 970,234.4 971,235.6 972,237.3 973,234.2 974,236.2 975,239.2 976,237.4 977,235.5 978,236.7 979,239.6 980,236.2 981,239.6 982,239.4 983,233.7 984,237.3 985,239.6 986,238.4 987,236.8 988,238.7 989,235.8 990,236.5 991,235.2 992,232.4 993,235.7 994,236.1 995,238.4 996,240.5 997,237.9 998,235.7 999,236.7 1000,236.9 1001,237.3 1002,233.1 1003,232.3 1004,231.8 1005,236.2 1006,235.9 1007,234.4 1008,234.0 1009,234.1 1010,233.8 1011,234.7 1012,235.4 1013,238.5 1014,236.7 1015,234.2 1016,235.0 1017,238.1 1018,237.4 1019,236.9 1020,238.0 1021,238.7 1022,233.9 1023,233.3 1024,232.5 1025,236.0 1026,235.1 1027,234.2 1028,234.5 1029,236.8 1030,235.7 1031,235.3 1032,237.6 1033,233.9 1034,230.3 1035,240.1 1036,236.0 1037,234.4 1038,234.2 1039,235.7 1040,237.6 1041,237.9 1042,237.1 1043,235.0 1044,233.1 1045,236.4 1046,239.3 1047,238.5 1048,236.3 1049,240.9 1050,237.9 1051,235.1 1052,233.4 1053,234.9 1054,236.0 1055,235.9 1056,238.0 1057,240.3 1058,239.0 1059,235.6 1060,234.1 1061,234.0 1062,233.8 1063,235.7 1064,236.8 1065,236.5 1066,236.4 1067,236.2 1068,235.4 1069,235.1 1070,239.3 1071,238.2 1072,234.2 1073,233.6 1074,234.4 1075,236.2 1076,238.7 1077,238.8 1078,238.8 1079,238.8 1080,238.7 1081,237.9 1082,233.3 1083,235.2 1084,232.5 1085,235.7 1086,239.0 1087,235.4 1088,234.9 1089,237.6 1090,236.3 1091,235.7 1092,238.9 1093,238.0 1094,237.4 1095,235.3 1096,236.8 1097,237.1 1098,238.0 1099,238.8 1100,238.6 1101,237.0 1102,236.8 1103,230.7 1104,236.9 1105,237.3 1106,235.1 1107,234.3 1108,235.0 1109,233.7 1110,236.2 1111,236.2 1112,234.2 1113,236.0 1114,238.4 1115,238.8 1116,235.9 1117,235.9 1118,235.0 1119,235.3 1120,237.8 1121,241.2 1122,240.2 1123,240.0 1124,238.4 1125,233.3 1126,234.7 1127,235.5 1128,238.8 1129,239.2 1130,234.5 1131,232.6 1132,229.3 1133,225.0 1134,226.3 1135,231.0 1136,235.9 1137,234.8 1138,239.6 1139,236.8 1140,238.0 1141,238.9 1142,234.9 1143,234.3 1144,235.9 1145,233.8 1146,234.0 1147,235.2 1148,235.2 1149,232.6 1150,233.5 1151,235.2 1152,234.7 1153,229.1 1154,232.8 1155,231.9 1156,227.6 1157,227.1 1158,230.1 1159,231.3 1160,233.3 1161,235.3 1162,233.9 1163,233.1 1164,229.4 1165,224.3 1166,224.5 1167,229.5 1168,232.9 1169,235.6 1170,240.4 1171,238.2 1172,236.5 1173,234.3 1174,236.6 1175,234.6 1176,234.2 1177,233.0 1178,234.4 1179,235.2 1180,232.7 1181,233.6 1182,234.9 1183,233.0 1184,232.7 1185,233.3 1186,233.2 1187,236.1 1188,234.6 1189,237.3 1190,237.5 1191,234.0 1192,235.3 1193,234.6 1194,233.4 1195,234.7 1196,235.6 1197,237.6 1198,237.7 1199,234.1 1200,234.9 1201,237.2 1202,237.3 1203,232.3 1204,237.3 1205,236.7 1206,238.5 1207,235.4 1208,234.2 1209,236.1 1210,238.1 1211,235.5 1212,231.7 1213,235.6 1214,232.7 1215,232.9 1216,232.6 1217,231.5 1218,232.4 1219,233.3 1220,234.3 1221,235.4 1222,234.6 1223,232.9 1224,235.4 1225,238.0 1226,238.1 1227,236.5 1228,237.5 1229,238.4 1230,239.5 1231,239.5 1232,235.9 1233,235.9 1234,239.2 1235,240.1 1236,238.5 1237,232.0 1238,233.2 1239,230.0 1240,236.0 1241,236.3 1242,236.0 1243,236.2 1244,238.2 1245,232.7 1246,238.0 1247,237.5 1248,237.0 1249,237.0 1250,235.9 1251,234.2 1252,237.1 1253,237.1 1254,236.2 1255,237.6 1256,237.4 1257,233.8 1258,234.9 1259,234.6 1260,234.1 1261,235.8 1262,234.3 1263,234.8 1264,236.3 1265,236.8 1266,237.6 1267,240.0 1268,236.0 1269,235.7 1270,233.9 1271,236.8 1272,238.8 1273,238.4 1274,235.1 1275,235.6 1276,238.1 1277,236.6 1278,237.3 1279,235.0 1280,238.5 1281,238.6 1282,236.9 1283,234.5 1284,235.3 1285,236.2 1286,236.4 1287,235.7 1288,235.5 1289,236.7 1290,237.8 1291,232.1 1292,231.9 1293,232.1 1294,231.8 1295,232.6 1296,236.3 1297,237.2 1298,235.2 1299,234.6 1300,236.4 1301,236.4 1302,236.3 1303,234.9 1304,233.0 1305,233.9 1306,236.4 1307,230.4 1308,233.0 1309,233.7 1310,236.3 1311,234.2 1312,238.1 1313,236.2 1314,239.3 1315,237.6 1316,236.3 1317,237.6 1318,240.6 1319,237.6 1320,232.5 1321,237.3 1322,236.2 1323,233.2 1324,236.2 1325,234.0 1326,235.8 1327,236.2 1328,235.0 1329,236.4 1330,234.3 1331,235.6 1332,234.9 1333,236.1 1334,239.5 1335,236.5 1336,233.8 1337,234.9 1338,234.4 1339,235.7 1340,236.3 1341,236.2 1342,235.9 1343,235.1 1344,237.0 1345,237.8 1346,235.1 1347,235.6 1348,236.5 1349,238.7 1350,238.2 1351,235.0 1352,235.1 1353,232.7 1354,233.5 1355,235.8 1356,239.3 1357,237.8 1358,235.2 1359,233.4 1360,236.0 1361,235.9 1362,236.7 1363,236.7 1364,237.6 1365,237.8 1366,237.6 1367,235.8 1368,237.4 1369,235.4 1370,236.6 1371,238.8 1372,236.9 1373,234.4 1374,238.6 1375,238.9 1376,235.4 1377,236.9 1378,236.5 1379,235.3 1380,235.1 1381,238.4 1382,235.6 1383,234.7 1384,235.6 1385,239.6 1386,238.2 1387,235.5 1388,235.9 1389,237.2 1390,237.1 1391,233.4 1392,235.5 1393,229.6 1394,225.5 1395,228.0 1396,235.1 1397,239.1 1398,237.1 1399,236.7 1400,234.8 1401,233.7 1402,237.1 1403,233.2 1404,234.6 1405,236.5 1406,232.7 1407,237.5 1408,235.5 1409,229.6 1410,227.4 1411,228.8 1412,233.4 1413,233.4 1414,237.5 1415,234.6 1416,238.8 1417,238.7 1418,237.2 1419,236.3 1420,232.3 1421,232.2 1422,233.3 1423,235.2 1424,236.8 1425,232.8 1426,234.0 1427,232.6 1428,233.0 1429,238.1 1430,237.3 1431,239.5 1432,238.4 1433,233.9 1434,232.9 1435,238.9 1436,235.5 1437,233.9 1438,236.8 1439,236.2 1440,234.5 1441,235.0 1442,236.1 1443,236.4 1444,237.2 1445,235.4 1446,235.4 1447,237.0 1448,237.2 1449,238.0 1450,235.8 1451,235.1 1452,233.1 1453,237.7 1454,234.0 1455,235.4 1456,237.8 1457,236.5 1458,236.8 1459,233.0 1460,232.8 1461,233.1 1462,237.7 1463,235.0 1464,232.5 1465,234.5 1466,238.7 1467,239.8 1468,238.6 1469,234.9 1470,236.0 1471,238.6 1472,235.0 1473,234.6 1474,233.5 1475,233.8 1476,235.0" fill="none" stroke="#fff" stroke-width="1"/><path d="M791.5 222V252.5M821.5 222V252.5" stroke="#9aa0d0" stroke-width="1"/><path d="M806.7 91.5V252.5" stroke="#ff2020" stroke-width="1.3"/><path d="M135 86.2H1476M186.3 80.2V86.2M251.6 80.2V86.2M316.9 80.2V86.2M382.2 80.2V86.2M447.5 80.2V86.2M512.8 80.2V86.2M578.1 80.2V86.2M643.4 80.2V86.2M708.7 80.2V86.2M773.9 80.2V86.2M839.2 80.2V86.2M904.5 80.2V86.2M969.8 80.2V86.2M1035.1 80.2V86.2M1100.4 80.2V86.2M1165.7 80.2V86.2M1231.0 80.2V86.2M1296.3 80.2V86.2M1361.6 80.2V86.2M1426.9 80.2V86.2M130.9 91V252.5M125.4 115.3H131M125.4 150.5H131M125.4 185.6H131M125.4 220.8H131" stroke="#fff" stroke-width="1" fill="none"/></svg>
<span class="t" style="left:170.1px;top:63.9px;font-size:11px;line-height:13.2px;color:#fff;font-weight:bold;transform:scaleX(0.966);">9500.0</span>
<span class="t" style="left:235.3px;top:63.9px;font-size:11px;line-height:13.2px;color:#fff;font-weight:bold;transform:scaleX(0.966);">9520.0</span>
<span class="t" style="left:300.6px;top:63.9px;font-size:11px;line-height:13.2px;color:#fff;font-weight:bold;transform:scaleX(0.966);">9540.0</span>
<span class="t" style="left:365.9px;top:63.9px;font-size:11px;line-height:13.2px;color:#fff;font-weight:bold;transform:scaleX(0.966);">9560.0</span>
<span class="t" style="left:431.2px;top:63.9px;font-size:11px;line-height:13.2px;color:#fff;font-weight:bold;transform:scaleX(0.966);">9580.0</span>
<span class="t" style="left:496.5px;top:63.9px;font-size:11px;line-height:13.2px;color:#fff;font-weight:bold;transform:scaleX(0.966);">9600.0</span>
<span class="t" style="left:561.8px;top:63.9px;font-size:11px;line-height:13.2px;color:#fff;font-weight:bold;transform:scaleX(0.966);">9620.0</span>
<span class="t" style="left:627.1px;top:63.9px;font-size:11px;line-height:13.2px;color:#fff;font-weight:bold;transform:scaleX(0.966);">9640.0</span>
<span class="t" style="left:692.4px;top:63.9px;font-size:11px;line-height:13.2px;color:#fff;font-weight:bold;transform:scaleX(0.966);">9660.0</span>
<span class="t" style="left:757.7px;top:63.9px;font-size:11px;line-height:13.2px;color:#fff;font-weight:bold;transform:scaleX(0.966);">9680.0</span>
<span class="t" style="left:823.0px;top:63.9px;font-size:11px;line-height:13.2px;color:#fff;font-weight:bold;transform:scaleX(0.966);">9700.0</span>
<span class="t" style="left:888.3px;top:63.9px;font-size:11px;line-height:13.2px;color:#fff;font-weight:bold;transform:scaleX(0.966);">9720.0</span>
<span class="t" style="left:953.6px;top:63.9px;font-size:11px;line-height:13.2px;color:#fff;font-weight:bold;transform:scaleX(0.966);">9740.0</span>
<span class="t" style="left:1018.9px;top:63.9px;font-size:11px;line-height:13.2px;color:#fff;font-weight:bold;transform:scaleX(0.966);">9760.0</span>
<span class="t" style="left:1084.2px;top:63.9px;font-size:11px;line-height:13.2px;color:#fff;font-weight:bold;transform:scaleX(0.966);">9780.0</span>
<span class="t" style="left:1149.5px;top:63.9px;font-size:11px;line-height:13.2px;color:#fff;font-weight:bold;transform:scaleX(0.966);">9800.0</span>
<span class="t" style="left:1214.8px;top:63.9px;font-size:11px;line-height:13.2px;color:#fff;font-weight:bold;transform:scaleX(0.966);">9820.0</span>
<span class="t" style="left:1280.0px;top:63.9px;font-size:11px;line-height:13.2px;color:#fff;font-weight:bold;transform:scaleX(0.966);">9840.0</span>
<span class="t" style="left:1345.3px;top:63.9px;font-size:11px;line-height:13.2px;color:#fff;font-weight:bold;transform:scaleX(0.966);">9860.0</span>
<span class="t" style="left:1410.6px;top:63.9px;font-size:11px;line-height:13.2px;color:#fff;font-weight:bold;transform:scaleX(0.966);">9880.0</span>
<span class="t" style="left:110.5px;top:108.7px;font-size:11px;line-height:13.2px;color:#ececec;transform:scaleX(0.940);">50</span>
<span class="t" style="left:116.3px;top:143.9px;font-size:11px;line-height:13.2px;color:#ececec;transform:scaleX(0.932);">0</span>
<span class="t" style="left:106.5px;top:179.0px;font-size:11px;line-height:13.2px;color:#ececec;transform:scaleX(0.975);">-50</span>
<span class="t" style="left:100.0px;top:214.2px;font-size:11px;line-height:13.2px;color:#ececec;">-100</span>
<span class="t" style="left:69px;top:165px;width:40px;text-align:center;font-size:12px;font-weight:bold;color:#fff;line-height:15px;transform:rotate(-90deg);transform-origin:50% 50%">dBm</span>
<svg class="a" style="left:136.2px;top:262.2px" width="1340.4" height="130.6" viewBox="136.2 262.2 1340.4 130.6"><defs><filter id="wfn" x="0" y="0" width="100%" height="100%" color-interpolation-filters="sRGB"><feTurbulence type="fractalNoise" baseFrequency="0.36 0.14" numOctaves="2" seed="4" result="n"/><feColorMatrix in="n" type="matrix" values="0.7 0 0 0 -0.3  0.95 0 0 0 -0.36  0 0 1.05 0 0.4  0 0 0 0 1"/></filter><filter id="bnd" x="0" y="0" width="100%" height="100%" color-interpolation-filters="sRGB"><feTurbulence type="fractalNoise" baseFrequency="0.3 0.045" numOctaves="2" seed="11"/><feColorMatrix type="matrix" values="0 0 0 0 0.16  0 0 0 0 0.93  3.2 0 0 0 -1.05  0 0 0 0 1"/></filter><filter id="cy" x="0" y="0" width="100%" height="100%" color-interpolation-filters="sRGB"><feTurbulence type="fractalNoise" baseFrequency="0.36 0.12" numOctaves="2" seed="23"/><feColorMatrix type="matrix" values="0 0 0 0 0.1  1.9 0 0 0 -0.25  0 0 0.4 0 0.78  0 0 0 0 1"/></filter><filter id="bl"><feGaussianBlur stdDeviation="0.6 0"/></filter><filter id="bl2"><feGaussianBlur stdDeviation="3 0"/></filter></defs><rect x="136.2" y="262.2" width="1340.4" height="130.6" fill="#0a1ee6"/><rect x="136.2" y="262.2" width="1340.4" height="130.6" filter="url(#wfn)" opacity="0.95"/><rect x="136.2" y="262.2" width="37" height="113.8" filter="url(#cy)"/><rect x="172.5" y="262.2" width="5.0" height="113.8" fill="#2080f0" opacity="0.5" filter="url(#bl2)"/><rect x="136.0" y="376.0" width="37.0" height="16.8" fill="#1a70e8" opacity="0.35" filter="url(#bl2)"/><rect x="152.7" y="262.2" width="4.0" height="130.6" fill="#3be070" opacity="1" filter="url(#bl)"/><rect x="160.0" y="262.2" width="6.0" height="130.6" fill="#40e0e8" opacity="0.6" filter="url(#bl)"/><rect x="218.0" y="262.2" width="3.0" height="130.6" fill="#2fd8c8" opacity="0.95" filter="url(#bl)"/><rect x="267.5" y="262.2" width="2.0" height="130.6" fill="#2aa8f0" opacity="0.6" filter="url(#bl)"/><rect x="300.0" y="262.2" width="2.0" height="130.6" fill="#2aa8f0" opacity="0.5" filter="url(#bl)"/><rect x="365.3" y="262.2" width="3.0" height="130.6" fill="#2cc8e8" opacity="0.95" filter="url(#bl)"/><rect x="396.9" y="262.2" width="4.5" height="130.6" fill="#36e090" opacity="1" filter="url(#bl)"/><rect x="387.0" y="262.2" width="14.0" height="130.6" fill="#20a0f0" opacity="0.35" filter="url(#bl)"/><rect x="414.4" y="262.2" width="2.0" height="130.6" fill="#2cb8f0" opacity="0.8" filter="url(#bl)"/><rect x="463.1" y="262.2" width="2.5" height="130.6" fill="#2cc0f0" opacity="0.9" filter="url(#bl)"/><rect x="512.2" y="262.2" width="3.0" height="130.6" fill="#2cc8f0" opacity="0.9" filter="url(#bl)"/><rect x="641.8" y="262.2" width="4.5" height="130.6" fill="#30f048" opacity="1" filter="url(#bl)"/><rect x="691.1" y="262.2" width="4.0" height="130.6" fill="#38e8a0" opacity="1" filter="url(#bl)"/><rect x="724.7" y="262.2" width="2.0" height="130.6" fill="#2ab0f0" opacity="0.7" filter="url(#bl)"/><rect x="753.5" y="262.2" width="8.0" height="130.6" fill="#30d8d0" opacity="0.9" filter="url(#bl)"/><rect x="757.0" y="262.2" width="3.0" height="130.6" fill="#50e890" opacity="0.8" filter="url(#bl)"/><rect x="772.5" y="262.2" width="2.5" height="130.6" fill="#30d0f0" opacity="0.9" filter="url(#bl)"/><rect x="853.0" y="262.2" width="5.5" height="130.6" fill="#38e870" opacity="1" filter="url(#bl)"/><rect x="904.0" y="262.2" width="2.0" height="130.6" fill="#2ab0f0" opacity="0.7" filter="url(#bl)"/><rect x="1132.7" y="262.2" width="3.0" height="130.6" fill="#2cc8f0" opacity="0.95" filter="url(#bl)"/><rect x="1231.0" y="262.2" width="2.0" height="130.6" fill="#2898f0" opacity="0.5" filter="url(#bl)"/><rect x="1261.9" y="262.2" width="2.0" height="130.6" fill="#2898f0" opacity="0.5" filter="url(#bl)"/><rect x="1378.5" y="262.2" width="1.6" height="130.6" fill="#28a8f0" opacity="0.55" filter="url(#bl)"/><rect x="1394.6" y="262.2" width="2.0" height="130.6" fill="#2cc0f0" opacity="0.85" filter="url(#bl)"/><rect x="1410.8" y="262.2" width="2.0" height="130.6" fill="#2cd0f0" opacity="0.9" filter="url(#bl)"/><rect x="789.5" y="262.2" width="35.5" height="130.6" filter="url(#bnd)"/><rect x="790.5" y="262.2" width="13.0" height="130.6" fill="#30e0f8" opacity="0.55" filter="url(#bl)"/><rect x="810.0" y="262.2" width="12.0" height="130.6" fill="#40f050" opacity="0.45" filter="url(#bl)"/><rect x="805.3" y="262.2" width="3.0" height="130.6" fill="#ff5a10" opacity="1" filter="url(#bl)"/><rect x="806.2" y="262.2" width="1.2" height="130.6" fill="#ff2000" opacity="1" filter="url(#bl)"/><defs><linearGradient id="mg" gradientUnits="userSpaceOnUse" x1="1130" y1="0" x2="1476.6" y2="0"><stop offset="0" stop-color="#000"/><stop offset="0.06" stop-color="#000"/><stop offset="0.11" stop-color="#a8a8a8"/><stop offset="0.55" stop-color="#909090"/><stop offset="0.62" stop-color="#565656"/><stop offset="1" stop-color="#565656"/></linearGradient><mask id="mk" maskUnits="userSpaceOnUse" x="1130" y="262.2" width="346.6" height="130.6"><rect x="1130" y="262.2" width="346.6" height="130.6" fill="url(#mg)"/></mask><filter id="wf2" x="0" y="0" width="100%" height="100%" color-interpolation-filters="sRGB"><feTurbulence type="fractalNoise" baseFrequency="0.34 0.13" numOctaves="2" seed="9"/><feColorMatrix type="matrix" values="0.5 0 0 0 -0.15  2.1 0 0 0 -0.7  0 0 0.5 0 0.72  0 0 0 0 1"/></filter><linearGradient id="mg2" gradientUnits="userSpaceOnUse" x1="1146" y1="0" x2="1186" y2="0"><stop offset="0" stop-color="#000"/><stop offset="0.35" stop-color="#aaa"/><stop offset="0.65" stop-color="#aaa"/><stop offset="1" stop-color="#000"/></linearGradient><mask id="mk2" maskUnits="userSpaceOnUse" x="1146" y="262.2" width="40" height="130.6"><rect x="1146" y="262.2" width="40" height="130.6" fill="url(#mg2)"/></mask></defs><rect x="1130" y="262.2" width="346.6" height="130.6" filter="url(#wf2)" mask="url(#mk)"/><g mask="url(#mk2)"><rect x="1146" y="262.2" width="40" height="130.6" filter="url(#cy)"/></g><rect x="1132.7" y="262.2" width="3.0" height="130.6" fill="#2cc8f0" opacity="0.95" filter="url(#bl)"/><rect x="1231.0" y="262.2" width="2.0" height="130.6" fill="#38a8f8" opacity="0.5" filter="url(#bl)"/><rect x="1261.9" y="262.2" width="2.0" height="130.6" fill="#38a8f8" opacity="0.5" filter="url(#bl)"/><rect x="1378.5" y="262.2" width="1.6" height="130.6" fill="#30b0f4" opacity="0.6" filter="url(#bl)"/><rect x="1394.6" y="262.2" width="2.0" height="130.6" fill="#2cc8f4" opacity="0.9" filter="url(#bl)"/><rect x="1410.8" y="262.2" width="2.0" height="130.6" fill="#2cd4f4" opacity="0.95" filter="url(#bl)"/><rect x="1164.2" y="262.2" width="3.6" height="130.6" fill="#8cf03c" opacity="1" filter="url(#bl)"/></svg>
<div class="b" style="left:1512.5px;top:58.5px;width:53.0px;height:22.5px;font-size:11.6px;"><span style="display:inline-block;transform:scaleX(0.88);white-space:nowrap">Zoom +</span></div>
<div class="b" style="left:1512.5px;top:86.0px;width:53.0px;height:22.5px;font-size:11.6px;"><span style="display:inline-block;transform:scaleX(0.88);white-space:nowrap">Zoom -</span></div>
<div class="b" style="left:1512.5px;top:114.5px;width:53.0px;height:22.5px;font-size:11.6px;"><span style="display:inline-block;transform:scaleX(0.88);white-space:nowrap">Reset</span></div>
<div class="b" style="left:1512.5px;top:142.5px;width:53.0px;height:22.5px;font-size:11.6px;"><span style="display:inline-block;transform:scaleX(0.88);white-space:nowrap">Undo</span></div>
<span class="t" style="left:1506.4px;top:169.8px;font-size:12px;line-height:14.4px;color:#fff;font-weight:bold;transform:scaleX(0.978);">Zoom Tools</span>
<div class="b sel" style="left:1512.5px;top:192.5px;width:52.5px;height:21.0px;font-size:11.6px;"><span style="display:inline-block;transform:scaleX(0.88);white-space:nowrap">Pan</span></div>
<div class="b" style="left:1512.5px;top:219.5px;width:53.0px;height:21.5px;font-size:11.6px;"><span style="display:inline-block;transform:scaleX(0.88);white-space:nowrap">Zoom</span></div>
<span class="t" style="left:1507.6px;top:246.8px;font-size:12px;line-height:14.4px;color:#fff;font-weight:bold;transform:scaleX(0.983);">Mouse Mode</span>
<div class="ck" style="left:1513.6px;top:274.7px;width:11.0px;height:11.0px;"></div>
<span class="t" style="left:1531.4px;top:273.0px;font-size:12px;line-height:14.4px;color:#fff;font-weight:bold;transform:scaleX(1.026);">Peaks</span>
<div class="ck" style="left:1513.6px;top:297.9px;width:11.0px;height:11.0px;"><svg viewBox="0 0 12 12" width="100%" height="100%"><path d="M2.2 6.2 L4.8 8.8 L10 2.8" fill="none" stroke="#000" stroke-width="1.5"/></svg></div>
<span class="t" style="left:1531.4px;top:296.2px;font-size:12px;line-height:14.4px;color:#fff;font-weight:bold;transform:scaleX(0.958);">Fill</span>
<div class="ck" style="left:1513.6px;top:321.2px;width:11.0px;height:11.0px;"></div>
<span class="t" style="left:1531.4px;top:319.5px;font-size:12px;line-height:14.4px;color:#fff;font-weight:bold;transform:scaleX(1.008);">Spots</span>
<div class="b" style="left:1512.5px;top:346.3px;width:53.0px;height:21.7px;font-size:11.6px;"><span style="display:inline-block;transform:scaleX(0.88);white-space:nowrap">Help</span></div>
<div class="b" style="left:17.0px;top:432.0px;width:56.5px;height:19.3px;font-size:11.6px;border-color:#5a5a5a"><span style="display:inline-block;transform:scaleX(0.88);white-space:nowrap">FN1</span></div>
<div class="b" style="left:77.1px;top:432.0px;width:56.5px;height:19.3px;font-size:11.6px;border-color:#5a5a5a"><span style="display:inline-block;transform:scaleX(0.88);white-space:nowrap">FN2</span></div>
<div class="b" style="left:137.2px;top:432.0px;width:56.5px;height:19.3px;font-size:11.6px;border-color:#5a5a5a"><span style="display:inline-block;transform:scaleX(0.88);white-space:nowrap">FN3</span></div>
<div class="b" style="left:197.3px;top:432.0px;width:56.5px;height:19.3px;font-size:11.6px;border-color:#5a5a5a"><span style="display:inline-block;transform:scaleX(0.88);white-space:nowrap">FN4</span></div>
<div class="b" style="left:257.4px;top:432.0px;width:56.5px;height:19.3px;font-size:11.6px;border-color:#5a5a5a"><span style="display:inline-block;transform:scaleX(0.88);white-space:nowrap">FN5</span></div>
<div class="b" style="left:17.0px;top:456.0px;width:56.5px;height:19.3px;font-size:11.6px;border-color:#5a5a5a"><span style="display:inline-block;transform:scaleX(0.88);white-space:nowrap">FN6</span></div>
<div class="b" style="left:77.1px;top:456.0px;width:56.5px;height:19.3px;font-size:11.6px;border-color:#5a5a5a"><span style="display:inline-block;transform:scaleX(0.88);white-space:nowrap">FN7</span></div>
<div class="b" style="left:137.2px;top:456.0px;width:56.5px;height:19.3px;font-size:11.6px;border-color:#5a5a5a"><span style="display:inline-block;transform:scaleX(0.88);white-space:nowrap">FN8</span></div>
<div class="b" style="left:197.3px;top:456.0px;width:56.5px;height:19.3px;font-size:11.6px;border-color:#5a5a5a"><span style="display:inline-block;transform:scaleX(0.88);white-space:nowrap">FN9</span></div>
<div class="b" style="left:257.4px;top:456.0px;width:56.5px;height:19.3px;font-size:11.6px;border-color:#5a5a5a"><span style="display:inline-block;transform:scaleX(0.88);white-space:nowrap">FN10</span></div>
<div class="b sel" style="left:734.2px;top:438.1px;width:58.8px;height:27.5px;font-size:11.6px;"><span style="display:inline-block;transform:scaleX(0.88);white-space:nowrap">VFO A</span></div>
<div class="b" style="left:810.3px;top:437.0px;width:60.5px;height:29.8px;font-size:11.6px;padding-top:1px;border-color:#666"><span style="display:inline-block;transform:scaleX(0.88);white-space:nowrap">VFO B</span></div>
<span class="t" style="left:1371.3px;top:445.6px;font-size:12px;line-height:14.4px;color:#e8e8e8;transform:scaleX(0.860);">UDP-B</span>
<div class="ck" style="left:1413.0px;top:447.0px;width:11.0px;height:11.0px;"></div>
<span class="t" style="left:1435.0px;top:445.6px;font-size:12px;line-height:14.4px;color:#e8e8e8;transform:scaleX(0.859);">AVG</span>
<div class="" style="left:1466.5px;top:443.0px;width:35.5px;height:19.5px;background:#fff"></div>
<span class="t" style="left:1469.0px;top:444.8px;font-size:12px;line-height:14.4px;color:#000;transform:scaleX(0.900);">4</span>
<svg class="a" style="left:1488px;top:449px" width="10" height="7"><path d="M1 1L5 5L9 1" fill="none" stroke="#333" stroke-width="1.2"/></svg>
<div class="b" style="left:1506.2px;top:441.0px;width:82.2px;height:22.6px;font-size:11.6px;"><span style="display:inline-block;transform:scaleX(0.88);white-space:nowrap">Control Panel</span></div>
<div class="win s2" style="left:1602px;top:185px;width:143px;height:301px;background:#000"></div>
<div class="tb" style="left:1602.0px;top:185.0px;width:143.0px;height:30.0px;"></div>
<span class="t" style="left:1610.4px;top:192.9px;font-size:12px;line-height:14.4px;color:#999;transform:scaleX(0.929);">Keypad</span>
<div class="" style="left:1725.0px;top:192.5px;width:19.0px;height:18.1px;background:#e6e6e6"></div>
<svg class="a" style="left:1731px;top:198px" width="8" height="8"><path d="M1 1L7 7M7 1L1 7" stroke="#f4f4f4" stroke-width="1"/></svg>
<span class="t" style="left:1654.5px;top:226.3px;font-size:12px;line-height:14.4px;color:#fcd616;font-weight:bold;transform:scaleX(0.994);">VFO A</span>
<div class="g" style="left:1609.0px;top:250.3px;width:129.0px;height:163.4px;"></div>
<div class="b" style="left:1624.9px;top:262.1px;width:28.0px;height:22.7px;font-size:14px;font-weight:bold;"><span style="display:inline-block;transform:scaleX(0.95);white-space:nowrap">1</span></div>
<div class="b" style="left:1659.0px;top:262.1px;width:28.0px;height:22.7px;font-size:14px;font-weight:bold;"><span style="display:inline-block;transform:scaleX(0.95);white-space:nowrap">2</span></div>
<div class="b" style="left:1693.0px;top:262.1px;width:28.0px;height:22.7px;font-size:14px;font-weight:bold;"><span style="display:inline-block;transform:scaleX(0.95);white-space:nowrap">3</span></div>
<div class="b" style="left:1624.9px;top:291.1px;width:28.0px;height:22.7px;font-size:14px;font-weight:bold;"><span style="display:inline-block;transform:scaleX(0.95);white-space:nowrap">4</span></div>
<div class="b" style="left:1659.0px;top:291.1px;width:28.0px;height:22.7px;font-size:14px;font-weight:bold;"><span style="display:inline-block;transform:scaleX(0.95);white-space:nowrap">5</span></div>
<div class="b" style="left:1693.0px;top:291.1px;width:28.0px;height:22.7px;font-size:14px;font-weight:bold;"><span style="display:inline-block;transform:scaleX(0.95);white-space:nowrap">6</span></div>
<div class="b" style="left:1624.9px;top:320.2px;width:28.0px;height:22.7px;font-size:14px;font-weight:bold;"><span style="display:inline-block;transform:scaleX(0.95);white-space:nowrap">7</span></div>
<div class="b" style="left:1659.0px;top:320.2px;width:28.0px;height:22.7px;font-size:14px;font-weight:bold;"><span style="display:inline-block;transform:scaleX(0.95);white-space:nowrap">8</span></div>
<div class="b" style="left:1693.0px;top:320.2px;width:28.0px;height:22.7px;font-size:14px;font-weight:bold;"><span style="display:inline-block;transform:scaleX(0.95);white-space:nowrap">9</span></div>
<div class="b" style="left:1624.9px;top:349.4px;width:28.0px;height:22.7px;font-size:11.6px;"><span style="display:inline-block;transform:scaleX(0.88);white-space:nowrap"></span></div>
<div class="" style="left:1635.4px;top:356.9px;width:6.5px;height:7.0px;background:#fff"></div>
<div class="b" style="left:1659.0px;top:349.4px;width:28.0px;height:22.7px;font-size:14px;font-weight:bold;"><span style="display:inline-block;transform:scaleX(0.95);white-space:nowrap">0</span></div>
<div class="b" style="left:1693.0px;top:349.4px;width:28.0px;height:22.7px;font-size:14px;font-weight:bold;"><span style="display:inline-block;transform:scaleX(0.95);white-space:nowrap">.</span></div>
<div class="b" style="left:1640.4px;top:378.6px;width:68.1px;height:22.5px;font-size:13px;font-weight:bold;"><span style="display:inline-block;transform:scaleX(0.9);white-space:nowrap">Enter</span></div>
<div class="inp" style="left:1630.9px;top:425.3px;width:77.6px;height:19.7px;"></div>
<span class="t" style="left:1617.5px;top:453.6px;font-size:12px;line-height:14.4px;color:#fff;transform:scaleX(0.876);">Enter Frequency in kHz</span>
<div class="win s2" style="left:1751.3px;top:185px;width:143.0px;height:301px;background:#000"></div>
<div class="tb" style="left:1751.3px;top:185.0px;width:143.0px;height:30.0px;"></div>
<span class="t" style="left:1759.7px;top:192.9px;font-size:12px;line-height:14.4px;color:#999;transform:scaleX(0.929);">Keypad</span>
<div class="" style="left:1874.3px;top:192.5px;width:19.0px;height:18.1px;background:#e6e6e6"></div>
<svg class="a" style="left:1880.3px;top:198px" width="8" height="8"><path d="M1 1L7 7M7 1L1 7" stroke="#f4f4f4" stroke-width="1"/></svg>
<span class="t" style="left:1803.8px;top:226.3px;font-size:12px;line-height:14.4px;color:#fcd616;font-weight:bold;transform:scaleX(0.982);">VFO B</span>
<div class="g" style="left:1758.3px;top:250.3px;width:129.0px;height:163.4px;"></div>
<div class="b" style="left:1774.2px;top:262.1px;width:28.0px;height:22.7px;font-size:14px;font-weight:bold;"><span style="display:inline-block;transform:scaleX(0.95);white-space:nowrap">1</span></div>
<div class="b" style="left:1808.2px;top:262.1px;width:28.0px;height:22.7px;font-size:14px;font-weight:bold;"><span style="display:inline-block;transform:scaleX(0.95);white-space:nowrap">2</span></div>
<div class="b" style="left:1842.3px;top:262.1px;width:28.0px;height:22.7px;font-size:14px;font-weight:bold;"><span style="display:inline-block;transform:scaleX(0.95);white-space:nowrap">3</span></div>
<div class="b" style="left:1774.2px;top:291.1px;width:28.0px;height:22.7px;font-size:14px;font-weight:bold;"><span style="display:inline-block;transform:scaleX(0.95);white-space:nowrap">4</span></div>
<div class="b" style="left:1808.2px;top:291.1px;width:28.0px;height:22.7px;font-size:14px;font-weight:bold;"><span style="display:inline-block;transform:scaleX(0.95);white-space:nowrap">5</span></div>
<div class="b" style="left:1842.3px;top:291.1px;width:28.0px;height:22.7px;font-size:14px;font-weight:bold;"><span style="display:inline-block;transform:scaleX(0.95);white-space:nowrap">6</span></div>
<div class="b" style="left:1774.2px;top:320.2px;width:28.0px;height:22.7px;font-size:14px;font-weight:bold;"><span style="display:inline-block;transform:scaleX(0.95);white-space:nowrap">7</span></div>
<div class="b" style="left:1808.2px;top:320.2px;width:28.0px;height:22.7px;font-size:14px;font-weight:bold;"><span style="display:inline-block;transform:scaleX(0.95);white-space:nowrap">8</span></div>
<div class="b" style="left:1842.3px;top:320.2px;width:28.0px;height:22.7px;font-size:14px;font-weight:bold;"><span style="display:inline-block;transform:scaleX(0.95);white-space:nowrap">9</span></div>
<div class="b" style="left:1774.2px;top:349.4px;width:28.0px;height:22.7px;font-size:11.6px;"><span style="display:inline-block;transform:scaleX(0.88);white-space:nowrap"></span></div>
<div class="" style="left:1784.7px;top:356.9px;width:6.5px;height:7.0px;background:#fff"></div>
<div class="b" style="left:1808.2px;top:349.4px;width:28.0px;height:22.7px;font-size:14px;font-weight:bold;"><span style="display:inline-block;transform:scaleX(0.95);white-space:nowrap">0</span></div>
<div class="b" style="left:1842.3px;top:349.4px;width:28.0px;height:22.7px;font-size:14px;font-weight:bold;"><span style="display:inline-block;transform:scaleX(0.95);white-space:nowrap">.</span></div>
<div class="b" style="left:1789.7px;top:378.6px;width:68.1px;height:22.5px;font-size:13px;font-weight:bold;"><span style="display:inline-block;transform:scaleX(0.9);white-space:nowrap">Enter</span></div>
<div class="inp" style="left:1780.2px;top:425.3px;width:77.6px;height:19.7px;"></div>
<span class="t" style="left:1766.8px;top:453.6px;font-size:12px;line-height:14.4px;color:#fff;transform:scaleX(0.876);">Enter Frequency in kHz</span>
<div class="win" style="left:5px;top:494px;width:1095px;height:526px;background:#000"></div>
<div class="tb" style="left:5.0px;top:494.0px;width:1095.0px;height:30.0px;"></div>
<div class="ico" style="left:14.0px;top:501.8px;width:13.0px;height:13.0px;"></div>
<span class="t" style="left:34.6px;top:501.1px;font-size:12px;line-height:14.4px;color:#999;transform:scaleX(0.917);">ICOM IC-7300  20:56 UTC  RF PWR: 0W  CInc = 100</span>
<div class="" style="left:981.0px;top:508.0px;width:10.0px;height:1.0px;position:absolute;background:#888"></div>
<div class="" style="left:1026.0px;top:503.0px;width:10.0px;height:10.0px;position:absolute;box-sizing:border-box;border:1px solid #ddd"></div>
<svg style="position:absolute;left:1071px;top:502px" width="12" height="12"><path d="M1 1L11 11M11 1L1 11" stroke="#888" stroke-width="1" fill="none"/></svg>
<div class="" style="left:5.0px;top:524.0px;width:1095.0px;height:24.0px;background:linear-gradient(90deg,#efefef 0%,#f5f5f5 40%,#fdfdfd 100%)"></div>
<span class="t" style="left:20.3px;top:528.6px;font-size:12px;line-height:14.4px;color:#000;transform:scaleX(0.915);">File</span>
<span class="t" style="left:57.2px;top:528.6px;font-size:12px;line-height:14.4px;color:#000;transform:scaleX(0.957);">Tools</span>
<span class="t" style="left:103.3px;top:528.6px;font-size:12px;line-height:14.4px;color:#000;transform:scaleX(1.024);">Window</span>
<span class="t" style="left:166.2px;top:528.6px;font-size:12px;line-height:14.4px;color:#000;">Help</span>
<div class="g" style="left:15.2px;top:558.3px;width:248.3px;height:126.9px;"></div>
<div class="b" style="left:21.9px;top:566.3px;width:55.0px;height:24.4px;font-size:11.6px;padding-top:1px;"><span style="display:inline-block;transform:scaleX(0.88);white-space:nowrap">160m</span></div>
<div class="b" style="left:81.9px;top:566.3px;width:55.0px;height:24.4px;font-size:11.6px;padding-top:1px;"><span style="display:inline-block;transform:scaleX(0.88);white-space:nowrap">80m</span></div>
<div class="b" style="left:142.0px;top:566.3px;width:55.0px;height:24.4px;font-size:11.6px;padding-top:1px;"><span style="display:inline-block;transform:scaleX(0.88);white-space:nowrap">60m</span></div>
<div class="b sel" style="left:203.0px;top:567.0px;width:53.0px;height:23.0px;font-size:11.6px;"><span style="display:inline-block;transform:scaleX(0.88);white-space:nowrap">40m</span></div>
<div class="b" style="left:21.9px;top:594.2px;width:55.0px;height:24.4px;font-size:11.6px;padding-top:1px;"><span style="display:inline-block;transform:scaleX(0.88);white-space:nowrap">30m</span></div>
<div class="b" style="left:81.9px;top:594.2px;width:55.0px;height:24.4px;font-size:11.6px;padding-top:1px;"><span style="display:inline-block;transform:scaleX(0.88);white-space:nowrap">20m</span></div>
<div class="b" style="left:142.0px;top:594.2px;width:55.0px;height:24.4px;font-size:11.6px;padding-top:1px;"><span style="display:inline-block;transform:scaleX(0.88);white-space:nowrap">17m</span></div>
<div class="b" style="left:202.0px;top:594.2px;width:55.0px;height:24.4px;font-size:11.6px;padding-top:1px;"><span style="display:inline-block;transform:scaleX(0.88);white-space:nowrap">15m</span></div>
<div class="b" style="left:21.9px;top:623.1px;width:55.0px;height:24.4px;font-size:11.6px;padding-top:1px;"><span style="display:inline-block;transform:scaleX(0.88);white-space:nowrap">12m</span></div>
<div class="b" style="left:81.9px;top:623.1px;width:55.0px;height:24.4px;font-size:11.6px;padding-top:1px;"><span style="display:inline-block;transform:scaleX(0.88);white-space:nowrap">10m</span></div>
<div class="b" style="left:142.0px;top:623.1px;width:55.0px;height:24.4px;font-size:11.6px;padding-top:1px;"><span style="display:inline-block;transform:scaleX(0.88);white-space:nowrap">6m</span></div>
<div class="b" style="left:202.0px;top:623.1px;width:55.0px;height:24.4px;font-size:11.6px;padding-top:1px;"><span style="display:inline-block;transform:scaleX(0.88);white-space:nowrap">4m</span></div>
<div class="b" style="left:21.9px;top:653.4px;width:55.0px;height:24.4px;font-size:11.6px;padding-top:1px;"><span style="display:inline-block;transform:scaleX(0.88);white-space:nowrap">2m</span></div>
<div class="b" style="left:81.9px;top:653.4px;width:55.0px;height:24.4px;font-size:11.6px;padding-top:1px;"><span style="display:inline-block;transform:scaleX(0.88);white-space:nowrap">70cm</span></div>
<div class="b" style="left:142.0px;top:653.4px;width:55.0px;height:24.4px;font-size:11.6px;padding-top:1px;"><span style="display:inline-block;transform:scaleX(0.88);white-space:nowrap">23cm</span></div>
<span class="t" style="left:213.4px;top:658.0px;font-size:13px;line-height:15.6px;color:#fcd616;font-weight:bold;transform:scaleX(0.880);">Band</span>
<div class="g" style="left:270.7px;top:558.3px;width:127.3px;height:126.9px;"></div>
<div class="b dis" style="left:281.1px;top:566.3px;width:44.9px;height:24.5px;font-size:11.6px;padding-top:1px;"><span style="display:inline-block;transform:scaleX(0.88);white-space:nowrap">Ant1</span></div>
<div class="b" style="left:335.7px;top:566.3px;width:45.3px;height:24.5px;font-size:11.6px;padding-top:1px;"><span style="display:inline-block;transform:scaleX(0.88);white-space:nowrap">RX</span></div>
<div class="b" style="left:281.1px;top:594.2px;width:44.9px;height:24.5px;font-size:11.6px;padding-top:1px;"><span style="display:inline-block;transform:scaleX(0.88);white-space:nowrap">Att</span></div>
<div class="b" style="left:335.7px;top:594.2px;width:45.3px;height:24.5px;font-size:11.6px;padding-top:1px;"><span style="display:inline-block;transform:scaleX(0.88);white-space:nowrap">Pre</span></div>
<div class="b" style="left:281.1px;top:623.1px;width:44.9px;height:24.5px;font-size:11.6px;padding-top:1px;"><span style="display:inline-block;transform:scaleX(0.88);white-space:nowrap">Tuner</span></div>
<div class="b" style="left:335.7px;top:623.1px;width:45.3px;height:24.5px;font-size:11.6px;padding-top:1px;"><span style="display:inline-block;transform:scaleX(0.88);white-space:nowrap">Tune</span></div>
<div class="b" style="left:281.1px;top:653.4px;width:44.9px;height:24.5px;font-size:11.6px;padding-top:1px;"><span style="display:inline-block;transform:scaleX(0.88);white-space:nowrap">IP+</span></div>
<span class="t" style="left:350.2px;top:657.7px;font-size:13px;line-height:15.6px;color:#fcd616;font-weight:bold;transform:scaleX(0.923);">RF</span>
<div class="g" style="left:404.0px;top:558.3px;width:308.7px;height:256.9px;"></div>
<div class="" style="left:411.7px;top:567.7px;width:293.9px;height:47.7px;border:2px solid #f2f2f2;border-bottom-color:#bbb"></div>
<span class="t" style="left:476.0px;top:570.3px;font-size:37px;line-height:44.4px;color:#a2ee35;">9.690.000</span>
<div class="trk" style="left:426.7px;top:634.9px;width:265.6px;height:3.0px;"></div>
<div class="tk" style="left:432.9px;top:653.4px;width:1.0px;height:5.0px;"></div>
<div class="tk" style="left:458.1px;top:653.4px;width:1.0px;height:5.0px;"></div>
<div class="tk" style="left:483.3px;top:653.4px;width:1.0px;height:5.0px;"></div>
<div class="tk" style="left:508.5px;top:653.4px;width:1.0px;height:5.0px;"></div>
<div class="tk" style="left:533.7px;top:653.4px;width:1.0px;height:5.0px;"></div>
<div class="tk" style="left:558.9px;top:653.4px;width:1.0px;height:5.0px;"></div>
<div class="tk" style="left:584.0px;top:653.4px;width:1.0px;height:5.0px;"></div>
<div class="tk" style="left:609.2px;top:653.4px;width:1.0px;height:5.0px;"></div>
<div class="tk" style="left:634.4px;top:653.4px;width:1.0px;height:5.0px;"></div>
<div class="tk" style="left:659.6px;top:653.4px;width:1.0px;height:5.0px;"></div>
<div class="tk" style="left:684.8px;top:653.4px;width:1.0px;height:5.0px;"></div>
<div class="th" style="left:554.6px;top:624.9px;width:10.0px;height:23.0px;"></div>
<div class="" style="left:470.4px;top:672.1px;width:174.2px;height:29.1px;border:2px solid #f2f2f2"></div>
<span class="t" style="left:504.4px;top:674.4px;font-size:21px;line-height:25.2px;color:#a2ee35;transform:scaleX(1.029);">11.780.000</span>
<div class="trk" style="left:490.8px;top:720.7px;width:134.4px;height:3.0px;"></div>
<div class="tk" style="left:494.9px;top:731.9px;width:1.0px;height:5.0px;"></div>
<div class="tk" style="left:507.4px;top:731.9px;width:1.0px;height:5.0px;"></div>
<div class="tk" style="left:519.9px;top:731.9px;width:1.0px;height:5.0px;"></div>
<div class="tk" style="left:532.5px;top:731.9px;width:1.0px;height:5.0px;"></div>
<div class="tk" style="left:545.0px;top:731.9px;width:1.0px;height:5.0px;"></div>
<div class="tk" style="left:557.5px;top:731.9px;width:1.0px;height:5.0px;"></div>
<div class="tk" style="left:570.0px;top:731.9px;width:1.0px;height:5.0px;"></div>
<div class="tk" style="left:582.5px;top:731.9px;width:1.0px;height:5.0px;"></div>
<div class="tk" style="left:595.1px;top:731.9px;width:1.0px;height:5.0px;"></div>
<div class="tk" style="left:607.6px;top:731.9px;width:1.0px;height:5.0px;"></div>
<div class="tk" style="left:620.1px;top:731.9px;width:1.0px;height:5.0px;"></div>
<div class="th" style="left:554.5px;top:713.7px;width:7.0px;height:17.0px;"></div>
<div class="b sel" style="left:412.0px;top:754.2px;width:37.4px;height:24.4px;font-size:11.6px;"><span style="display:inline-block;transform:scaleX(0.88);white-space:nowrap">Fine</span></div>
<div class="b" style="left:454.0px;top:754.2px;width:38.8px;height:24.4px;font-size:11.6px;padding-top:1px;"><span style="display:inline-block;transform:scaleX(0.88);white-space:nowrap">Med</span></div>
<div class="b" style="left:497.1px;top:754.2px;width:38.7px;height:24.4px;font-size:11.6px;padding-top:1px;"><span style="display:inline-block;transform:scaleX(0.88);white-space:nowrap">Cor</span></div>
<div class="b" style="left:540.1px;top:754.2px;width:38.8px;height:24.4px;font-size:11.6px;padding-top:1px;"><span style="display:inline-block;transform:scaleX(0.88);white-space:nowrap">A/B</span></div>
<div class="b" style="left:582.9px;top:754.2px;width:36.0px;height:24.4px;font-size:11.6px;padding-top:1px;"><span style="display:inline-block;transform:scaleX(0.88);white-space:nowrap">A&gt;B</span></div>
<div class="b dis" style="left:622.9px;top:754.2px;width:34.0px;height:24.4px;font-size:11.6px;padding-top:1px;"><span style="display:inline-block;transform:scaleX(0.88);white-space:nowrap">DW</span></div>
<div class="b" style="left:662.9px;top:754.2px;width:43.1px;height:24.4px;font-size:11.6px;padding-top:1px;"><span style="display:inline-block;transform:scaleX(0.88);white-space:nowrap">Split</span></div>
<div class="b sel" style="left:412.0px;top:784.2px;width:50.7px;height:24.4px;font-size:11.6px;"><span style="display:inline-block;transform:scaleX(0.88);white-space:nowrap">VFO A</span></div>
<div class="b" style="left:470.1px;top:784.2px;width:45.7px;height:24.4px;font-size:11.6px;padding-top:1px;"><span style="display:inline-block;transform:scaleX(0.88);white-space:nowrap">Tone</span></div>
<div class="b" style="left:598.9px;top:784.2px;width:48.7px;height:24.4px;font-size:11.6px;padding-top:1px;"><span style="display:inline-block;transform:scaleX(0.88);white-space:nowrap">Tr-Du</span></div>
<div class="b" style="left:654.3px;top:784.2px;width:52.7px;height:24.4px;font-size:11.6px;padding-top:1px;"><span style="display:inline-block;transform:scaleX(0.88);white-space:nowrap">VFO B</span></div>
<span class="t" style="left:547.7px;top:789.1px;font-size:13px;line-height:15.6px;color:#fcd616;font-weight:bold;transform:scaleX(0.861);">VFO</span>
<div class="g" style="left:15.0px;top:692.5px;width:216.3px;height:122.7px;"></div>
<div class="b" style="left:22.3px;top:700.1px;width:59.6px;height:24.6px;font-size:11.6px;padding-top:1px;"><span style="display:inline-block;transform:scaleX(0.88);white-space:nowrap">USB</span></div>
<div class="b" style="left:92.0px;top:700.1px;width:59.6px;height:24.6px;font-size:11.6px;padding-top:1px;"><span style="display:inline-block;transform:scaleX(0.88);white-space:nowrap">LSB</span></div>
<div class="b" style="left:162.2px;top:700.1px;width:59.6px;height:24.6px;font-size:11.6px;padding-top:1px;"><span style="display:inline-block;transform:scaleX(0.88);white-space:nowrap">CW</span></div>
<div class="b" style="left:22.3px;top:728.0px;width:59.6px;height:24.6px;font-size:11.6px;padding-top:1px;"><span style="display:inline-block;transform:scaleX(0.88);white-space:nowrap">CW-R</span></div>
<div class="b sel" style="left:93.2px;top:729.5px;width:57.8px;height:22.2px;font-size:11.6px;"><span style="display:inline-block;transform:scaleX(0.88);white-space:nowrap">AM</span></div>
<div class="b" style="left:162.2px;top:728.0px;width:59.6px;height:24.6px;font-size:11.6px;padding-top:1px;"><span style="display:inline-block;transform:scaleX(0.88);white-space:nowrap">FM</span></div>
<div class="b" style="left:22.3px;top:756.2px;width:59.6px;height:24.6px;font-size:11.6px;padding-top:1px;"><span style="display:inline-block;transform:scaleX(0.88);white-space:nowrap">RTTY</span></div>
<div class="b" style="left:92.0px;top:756.2px;width:59.6px;height:24.6px;font-size:11.6px;padding-top:1px;"><span style="display:inline-block;transform:scaleX(0.88);white-space:nowrap">RTTY-R</span></div>
<div class="b" style="left:162.2px;top:756.2px;width:59.6px;height:24.6px;font-size:11.6px;padding-top:1px;"><span style="display:inline-block;transform:scaleX(0.88);white-space:nowrap">PSK</span></div>
<div class="b" style="left:22.3px;top:784.0px;width:59.6px;height:24.6px;font-size:11.6px;padding-top:1px;"><span style="display:inline-block;transform:scaleX(0.88);white-space:nowrap">PSK-R</span></div>
<div class="b" style="left:92.0px;top:784.0px;width:59.6px;height:24.6px;font-size:11.6px;padding-top:1px;"><span style="display:inline-block;transform:scaleX(0.88);white-space:nowrap">DATA</span></div>
<span class="t" style="left:174.6px;top:788.0px;font-size:13px;line-height:15.6px;color:#fcd616;font-weight:bold;transform:scaleX(0.890);">Mode</span>
<div class="g" style="left:238.4px;top:692.5px;width:159.6px;height:122.7px;"></div>
<div class="b" style="left:245.5px;top:707.0px;width:49.5px;height:22.3px;font-size:11.6px;"><span style="display:inline-block;transform:scaleX(0.88);white-space:nowrap">OFF</span></div>
<span class="t" style="left:250.0px;top:734.0px;font-size:12px;line-height:14.4px;color:#fff;transform:scaleX(0.877);">Break In</span>
<div class="ck" style="left:246.7px;top:758.2px;width:11.5px;height:11.5px;"><svg viewBox="0 0 12 12" width="100%" height="100%"><path d="M2.2 6.2 L4.8 8.8 L10 2.8" fill="none" stroke="#000" stroke-width="1.5"/></svg></div>
<span class="t" style="left:265.6px;top:756.8px;font-size:12px;line-height:14.4px;color:#fff;transform:scaleX(0.857);">PDL</span>
<span class="t" style="left:257.8px;top:788.0px;font-size:13px;line-height:15.6px;color:#fcd616;font-weight:bold;transform:scaleX(0.785);">CW</span>
<div class="trk" style="left:311.9px;top:705.9px;width:2.6px;height:72.6px;"></div>
<div class="tk" style="left:325.2px;top:708.9px;width:5.0px;height:1.0px;"></div>
<div class="tk" style="left:325.2px;top:715.4px;width:5.0px;height:1.0px;"></div>
<div class="tk" style="left:325.2px;top:721.8px;width:5.0px;height:1.0px;"></div>
<div class="tk" style="left:325.2px;top:728.3px;width:5.0px;height:1.0px;"></div>
<div class="tk" style="left:325.2px;top:734.7px;width:5.0px;height:1.0px;"></div>
<div class="tk" style="left:325.2px;top:741.2px;width:5.0px;height:1.0px;"></div>
<div class="tk" style="left:325.2px;top:747.7px;width:5.0px;height:1.0px;"></div>
<div class="tk" style="left:325.2px;top:754.1px;width:5.0px;height:1.0px;"></div>
<div class="tk" style="left:325.2px;top:760.6px;width:5.0px;height:1.0px;"></div>
<div class="tk" style="left:325.2px;top:767.0px;width:5.0px;height:1.0px;"></div>
<div class="tk" style="left:325.2px;top:773.5px;width:5.0px;height:1.0px;"></div>
<div class="th" style="left:304.2px;top:736.8px;width:18.0px;height:8.0px;"></div>
<div class="trk" style="left:357.2px;top:705.9px;width:2.6px;height:72.6px;"></div>
<div class="tk" style="left:370.5px;top:708.9px;width:5.0px;height:1.0px;"></div>
<div class="tk" style="left:370.5px;top:715.4px;width:5.0px;height:1.0px;"></div>
<div class="tk" style="left:370.5px;top:721.8px;width:5.0px;height:1.0px;"></div>
<div class="tk" style="left:370.5px;top:728.3px;width:5.0px;height:1.0px;"></div>
<div class="tk" style="left:370.5px;top:734.7px;width:5.0px;height:1.0px;"></div>
<div class="tk" style="left:370.5px;top:741.2px;width:5.0px;height:1.0px;"></div>
<div class="tk" style="left:370.5px;top:747.7px;width:5.0px;height:1.0px;"></div>
<div class="tk" style="left:370.5px;top:754.1px;width:5.0px;height:1.0px;"></div>
<div class="tk" style="left:370.5px;top:760.6px;width:5.0px;height:1.0px;"></div>
<div class="tk" style="left:370.5px;top:767.0px;width:5.0px;height:1.0px;"></div>
<div class="tk" style="left:370.5px;top:773.5px;width:5.0px;height:1.0px;"></div>
<div class="th" style="left:349.5px;top:748.9px;width:18.0px;height:8.0px;"></div>
<span class="t" style="left:301.7px;top:788.6px;font-size:12px;line-height:14.4px;color:#fff;transform:scaleX(0.862);">Pitch</span>
<span class="t" style="left:342.2px;top:788.6px;font-size:12px;line-height:14.4px;color:#fff;transform:scaleX(0.906);">WPM=20</span>
<div class="g" style="left:720.3px;top:558.3px;width:369.7px;height:103.9px;"></div>
<svg class="a" style="left:720px;top:558px" width="370" height="104" viewBox="720 558 370 104"><path d="M732.5 600.7A155.3 155.3 0 0 1 803.5 579.4" stroke="#2ee03a" stroke-width="3" fill="none"/><path d="M803.5 579.4A155.3 155.3 0 0 1 863.5 588.2" stroke="#f4ec3a" stroke-width="3" fill="none"/><path d="M863.5 588.2A155.3 155.3 0 0 1 890.2 600.7" stroke="#f03434" stroke-width="3" fill="none"/><path d="M748.2 595.9L749.9 599.5M762.0 590.4L763.3 594.2M775.7 586.4L776.6 590.3M789.9 583.7L790.5 587.7M804.1 582.4L804.3 586.4M818.4 582.4L818.2 586.4M832.6 583.7L832.0 587.7M846.8 586.4L845.9 590.3M860.5 590.4L859.2 594.2M873.8 595.6L872.1 599.2M886.5 602.1L884.5 605.5" stroke="#ccc" stroke-width="1"/><polygon points="811.4,570.9 808.3,632.8 813,632.8" fill="#ff3838"/><path d="M917.8 603.4A154 154 0 0 1 1045.4 589.6" stroke="#2ee03a" stroke-width="3" fill="none"/><path d="M1045.4 589.6A154 154 0 0 1 1075.5 603.4" stroke="#f03434" stroke-width="3" fill="none"/><path d="M957.8 589.8L958.9 594.1M996.6 584.7L996.6 589.2M1035.2 589.7L1034.1 594.1M1071.5 604.6L1069.3 608.5" stroke="#ddd" stroke-width="1"/><polygon points="912.6,596.5 939.5,646 944,646" fill="#ff3838"/></svg>
<span class="t" style="left:738.0px;top:576.8px;font-size:11px;line-height:13.2px;color:#fcd616;transform:scaleX(0.950);">1</span>
<span class="t" style="left:753.3px;top:570.9px;font-size:11px;line-height:13.2px;color:#fcd616;transform:scaleX(0.950);">3</span>
<span class="t" style="left:768.3px;top:566.8px;font-size:11px;line-height:13.2px;color:#fcd616;transform:scaleX(0.950);">5</span>
<span class="t" style="left:785.0px;top:563.1px;font-size:11px;line-height:13.2px;color:#fcd616;transform:scaleX(0.950);">7</span>
<span class="t" style="left:801.4px;top:560.9px;font-size:11px;line-height:13.2px;color:#fcd616;transform:scaleX(0.950);">9</span>
<span class="t" style="left:823.4px;top:562.1px;font-size:11px;line-height:13.2px;color:#fcd616;transform:scaleX(0.950);">+20</span>
<span class="t" style="left:856.3px;top:570.1px;font-size:11px;line-height:13.2px;color:#fcd616;transform:scaleX(0.950);">+40</span>
<span class="t" style="left:881.3px;top:579.3px;font-size:11px;line-height:13.2px;color:#fcd616;transform:scaleX(0.950);">+60</span>
<span class="t" style="left:911.0px;top:580.9px;font-size:11px;line-height:13.2px;color:#fcd616;transform:scaleX(0.950);">0</span>
<span class="t" style="left:945.7px;top:569.3px;font-size:11px;line-height:13.2px;color:#fcd616;transform:scaleX(0.950);">10</span>
<span class="t" style="left:990.4px;top:564.3px;font-size:11px;line-height:13.2px;color:#fcd616;transform:scaleX(0.950);">50</span>
<span class="t" style="left:1032.5px;top:569.3px;font-size:11px;line-height:13.2px;color:#fcd616;transform:scaleX(0.950);">100</span>
<span class="t" style="left:1066.8px;top:580.9px;font-size:11px;line-height:13.2px;color:#fcd616;transform:scaleX(0.950);">150</span>
<span class="t" style="left:771.7px;top:632.3px;font-size:13px;line-height:15.6px;color:#fcd616;font-weight:bold;transform:scaleX(0.931);">VFO A S - Units</span>
<span class="t" style="left:969.5px;top:632.3px;font-size:13px;line-height:15.6px;color:#fcd616;font-weight:bold;transform:scaleX(0.964);">PWR (W)</span>
<div class="g" style="left:720.1px;top:669.2px;width:177.4px;height:145.4px;"></div>
<span class="t" style="left:767.7px;top:680.0px;font-size:13px;line-height:15.6px;color:#fcd616;font-weight:bold;transform:scaleX(0.945);">Voice and Data</span>
<div class="b" style="left:727.2px;top:709.0px;width:36.8px;height:22.6px;font-size:11.6px;"><span style="display:inline-block;transform:scaleX(0.88);white-space:nowrap">1</span></div>
<div class="b" style="left:769.2px;top:709.0px;width:36.8px;height:22.6px;font-size:11.6px;"><span style="display:inline-block;transform:scaleX(0.88);white-space:nowrap">2</span></div>
<div class="b" style="left:811.1px;top:709.0px;width:36.8px;height:22.6px;font-size:11.6px;"><span style="display:inline-block;transform:scaleX(0.88);white-space:nowrap">3</span></div>
<div class="b" style="left:853.1px;top:709.0px;width:36.8px;height:22.6px;font-size:11.6px;"><span style="display:inline-block;transform:scaleX(0.88);white-space:nowrap">4</span></div>
<div class="b" style="left:727.2px;top:747.1px;width:36.8px;height:22.6px;font-size:11.6px;"><span style="display:inline-block;transform:scaleX(0.88);white-space:nowrap">5</span></div>
<div class="b" style="left:769.2px;top:747.1px;width:36.8px;height:22.6px;font-size:11.6px;"><span style="display:inline-block;transform:scaleX(0.88);white-space:nowrap">6</span></div>
<div class="b" style="left:811.1px;top:747.1px;width:36.8px;height:22.6px;font-size:11.6px;"><span style="display:inline-block;transform:scaleX(0.88);white-space:nowrap">7</span></div>
<div class="b" style="left:853.1px;top:747.1px;width:36.8px;height:22.6px;font-size:11.6px;"><span style="display:inline-block;transform:scaleX(0.88);white-space:nowrap">8</span></div>
<span class="t" style="left:763.7px;top:782.3px;font-size:13px;line-height:15.6px;color:#fcd616;font-weight:bold;transform:scaleX(0.904);">Message Number</span>
<div class="g" style="left:901.1px;top:669.2px;width:188.6px;height:145.4px;"></div>
<div class="b" style="left:912.0px;top:690.2px;width:36.9px;height:22.5px;font-size:11.6px;"><span style="display:inline-block;transform:scaleX(0.88);white-space:nowrap">RX</span></div>
<div class="" style="left:962.3px;top:687.8px;width:64.2px;height:24.5px;border:2px solid #f2f2f2"></div>
<span class="t" style="left:970.4px;top:690.4px;font-size:16px;line-height:19.2px;color:#fcd616;transform:scaleX(0.984);">+0.000</span>
<div class="b" style="left:1045.0px;top:690.2px;width:37.0px;height:22.5px;font-size:11.6px;"><span style="display:inline-block;transform:scaleX(0.88);white-space:nowrap">TX</span></div>
<div class="trk" style="left:927.8px;top:732.9px;width:134.2px;height:3.0px;"></div>
<div class="tk" style="left:932.0px;top:744.5px;width:1.0px;height:4.3px;"></div>
<div class="tk" style="left:944.5px;top:744.5px;width:1.0px;height:4.3px;"></div>
<div class="tk" style="left:957.0px;top:744.5px;width:1.0px;height:4.3px;"></div>
<div class="tk" style="left:969.5px;top:744.5px;width:1.0px;height:4.3px;"></div>
<div class="tk" style="left:982.0px;top:744.5px;width:1.0px;height:4.3px;"></div>
<div class="tk" style="left:994.5px;top:744.5px;width:1.0px;height:4.3px;"></div>
<div class="tk" style="left:1007.0px;top:744.5px;width:1.0px;height:4.3px;"></div>
<div class="tk" style="left:1019.5px;top:744.5px;width:1.0px;height:4.3px;"></div>
<div class="tk" style="left:1032.0px;top:744.5px;width:1.0px;height:4.3px;"></div>
<div class="tk" style="left:1044.5px;top:744.5px;width:1.0px;height:4.3px;"></div>
<div class="tk" style="left:1057.0px;top:744.5px;width:1.0px;height:4.3px;"></div>
<div class="th" style="left:991.2px;top:725.6px;width:6.6px;height:17.5px;"></div>
<div class="b" style="left:977.1px;top:759.3px;width:36.9px;height:22.5px;font-size:11.6px;"><span style="display:inline-block;transform:scaleX(0.88);white-space:nowrap">CLR</span></div>
<span class="t" style="left:968.8px;top:792.0px;font-size:13px;line-height:15.6px;color:#fcd616;font-weight:bold;transform:scaleX(1.037);">RIT / XIT</span>
<div class="g" style="left:15.0px;top:824.0px;width:181.8px;height:188.0px;"></div>
<div class="trk" style="left:45.7px;top:835.2px;width:2.6px;height:102.1px;"></div>
<div class="tk" style="left:59.0px;top:838.6px;width:5.0px;height:1.0px;"></div>
<div class="tk" style="left:59.0px;top:847.9px;width:5.0px;height:1.0px;"></div>
<div class="tk" style="left:59.0px;top:857.2px;width:5.0px;height:1.0px;"></div>
<div class="tk" style="left:59.0px;top:866.6px;width:5.0px;height:1.0px;"></div>
<div class="tk" style="left:59.0px;top:875.9px;width:5.0px;height:1.0px;"></div>
<div class="tk" style="left:59.0px;top:885.2px;width:5.0px;height:1.0px;"></div>
<div class="tk" style="left:59.0px;top:894.5px;width:5.0px;height:1.0px;"></div>
<div class="tk" style="left:59.0px;top:903.8px;width:5.0px;height:1.0px;"></div>
<div class="tk" style="left:59.0px;top:913.2px;width:5.0px;height:1.0px;"></div>
<div class="tk" style="left:59.0px;top:922.5px;width:5.0px;height:1.0px;"></div>
<div class="tk" style="left:59.0px;top:931.8px;width:5.0px;height:1.0px;"></div>
<div class="th" style="left:38.0px;top:921.5px;width:18.0px;height:8.0px;"></div>
<div class="trk" style="left:101.9px;top:835.2px;width:2.6px;height:102.1px;"></div>
<div class="tk" style="left:115.2px;top:838.6px;width:5.0px;height:1.0px;"></div>
<div class="tk" style="left:115.2px;top:847.9px;width:5.0px;height:1.0px;"></div>
<div class="tk" style="left:115.2px;top:857.2px;width:5.0px;height:1.0px;"></div>
<div class="tk" style="left:115.2px;top:866.6px;width:5.0px;height:1.0px;"></div>
<div class="tk" style="left:115.2px;top:875.9px;width:5.0px;height:1.0px;"></div>
<div class="tk" style="left:115.2px;top:885.2px;width:5.0px;height:1.0px;"></div>
<div class="tk" style="left:115.2px;top:894.5px;width:5.0px;height:1.0px;"></div>
<div class="tk" style="left:115.2px;top:903.8px;width:5.0px;height:1.0px;"></div>
<div class="tk" style="left:115.2px;top:913.2px;width:5.0px;height:1.0px;"></div>
<div class="tk" style="left:115.2px;top:922.5px;width:5.0px;height:1.0px;"></div>
<div class="tk" style="left:115.2px;top:931.8px;width:5.0px;height:1.0px;"></div>
<div class="th" style="left:94.2px;top:845.8px;width:18.0px;height:8.0px;"></div>
<div class="trk" style="left:156.0px;top:835.2px;width:2.6px;height:102.1px;"></div>
<div class="tk" style="left:169.3px;top:838.6px;width:5.0px;height:1.0px;"></div>
<div class="tk" style="left:169.3px;top:847.9px;width:5.0px;height:1.0px;"></div>
<div class="tk" style="left:169.3px;top:857.2px;width:5.0px;height:1.0px;"></div>
<div class="tk" style="left:169.3px;top:866.6px;width:5.0px;height:1.0px;"></div>
<div class="tk" style="left:169.3px;top:875.9px;width:5.0px;height:1.0px;"></div>
<div class="tk" style="left:169.3px;top:885.2px;width:5.0px;height:1.0px;"></div>
<div class="tk" style="left:169.3px;top:894.5px;width:5.0px;height:1.0px;"></div>
<div class="tk" style="left:169.3px;top:903.8px;width:5.0px;height:1.0px;"></div>
<div class="tk" style="left:169.3px;top:913.2px;width:5.0px;height:1.0px;"></div>
<div class="tk" style="left:169.3px;top:922.5px;width:5.0px;height:1.0px;"></div>
<div class="tk" style="left:169.3px;top:931.8px;width:5.0px;height:1.0px;"></div>
<div class="th" style="left:148.3px;top:916.0px;width:18.0px;height:8.0px;"></div>
<span class="t" style="left:32.6px;top:946.6px;font-size:12px;line-height:14.4px;color:#fff;transform:scaleX(0.863);">AF Gain</span>
<span class="t" style="left:86.8px;top:946.6px;font-size:12px;line-height:14.4px;color:#fff;transform:scaleX(0.862);">RF Gain</span>
<span class="t" style="left:147.1px;top:946.6px;font-size:12px;line-height:14.4px;color:#fff;transform:scaleX(0.854);">SQL</span>
<div class="b sel" style="left:27.0px;top:970.0px;width:47.0px;height:20.4px;font-size:11.6px;"><span style="display:inline-block;transform:scaleX(0.88);white-space:nowrap">AGC-S</span></div>
<div class="ck" style="left:142.7px;top:974.6px;width:11.5px;height:11.5px;"></div>
<span class="t" style="left:161.4px;top:973.2px;font-size:12px;line-height:14.4px;color:#fff;transform:scaleX(0.862);">Mute</span>
<span class="t" style="left:95.2px;top:989.2px;font-size:13px;line-height:15.6px;color:#fcd616;font-weight:bold;transform:scaleX(0.917);">VFO A</span>
<div class="g" style="left:203.5px;top:823.6px;width:350.0px;height:188.4px;"></div>
<div class="trk" style="left:228.0px;top:835.3px;width:2.6px;height:102.1px;"></div>
<div class="tk" style="left:240.3px;top:838.7px;width:5.2px;height:1.0px;"></div>
<div class="tk" style="left:240.3px;top:848.0px;width:5.2px;height:1.0px;"></div>
<div class="tk" style="left:240.3px;top:857.2px;width:5.2px;height:1.0px;"></div>
<div class="tk" style="left:240.3px;top:866.5px;width:5.2px;height:1.0px;"></div>
<div class="tk" style="left:240.3px;top:875.8px;width:5.2px;height:1.0px;"></div>
<div class="tk" style="left:240.3px;top:885.0px;width:5.2px;height:1.0px;"></div>
<div class="tk" style="left:240.3px;top:894.3px;width:5.2px;height:1.0px;"></div>
<div class="tk" style="left:240.3px;top:903.6px;width:5.2px;height:1.0px;"></div>
<div class="tk" style="left:240.3px;top:912.9px;width:5.2px;height:1.0px;"></div>
<div class="tk" style="left:240.3px;top:922.1px;width:5.2px;height:1.0px;"></div>
<div class="tk" style="left:240.3px;top:931.4px;width:5.2px;height:1.0px;"></div>
<div class="th" style="left:220.3px;top:929.3px;width:18.0px;height:8.0px;"></div>
<div class="trk" style="left:275.3px;top:835.3px;width:2.6px;height:102.1px;"></div>
<div class="tk" style="left:287.6px;top:838.7px;width:5.2px;height:1.0px;"></div>
<div class="tk" style="left:287.6px;top:848.0px;width:5.2px;height:1.0px;"></div>
<div class="tk" style="left:287.6px;top:857.2px;width:5.2px;height:1.0px;"></div>
<div class="tk" style="left:287.6px;top:866.5px;width:5.2px;height:1.0px;"></div>
<div class="tk" style="left:287.6px;top:875.8px;width:5.2px;height:1.0px;"></div>
<div class="tk" style="left:287.6px;top:885.0px;width:5.2px;height:1.0px;"></div>
<div class="tk" style="left:287.6px;top:894.3px;width:5.2px;height:1.0px;"></div>
<div class="tk" style="left:287.6px;top:903.6px;width:5.2px;height:1.0px;"></div>
<div class="tk" style="left:287.6px;top:912.9px;width:5.2px;height:1.0px;"></div>
<div class="tk" style="left:287.6px;top:922.1px;width:5.2px;height:1.0px;"></div>
<div class="tk" style="left:287.6px;top:931.4px;width:5.2px;height:1.0px;"></div>
<div class="th" style="left:267.6px;top:929.3px;width:18.0px;height:8.0px;"></div>
<div class="trk" style="left:322.3px;top:835.3px;width:2.6px;height:102.1px;"></div>
<div class="tk" style="left:334.6px;top:838.7px;width:5.2px;height:1.0px;"></div>
<div class="tk" style="left:334.6px;top:848.0px;width:5.2px;height:1.0px;"></div>
<div class="tk" style="left:334.6px;top:857.2px;width:5.2px;height:1.0px;"></div>
<div class="tk" style="left:334.6px;top:866.5px;width:5.2px;height:1.0px;"></div>
<div class="tk" style="left:334.6px;top:875.8px;width:5.2px;height:1.0px;"></div>
<div class="tk" style="left:334.6px;top:885.0px;width:5.2px;height:1.0px;"></div>
<div class="tk" style="left:334.6px;top:894.3px;width:5.2px;height:1.0px;"></div>
<div class="tk" style="left:334.6px;top:903.6px;width:5.2px;height:1.0px;"></div>
<div class="tk" style="left:334.6px;top:912.9px;width:5.2px;height:1.0px;"></div>
<div class="tk" style="left:334.6px;top:922.1px;width:5.2px;height:1.0px;"></div>
<div class="tk" style="left:334.6px;top:931.4px;width:5.2px;height:1.0px;"></div>
<div class="th" style="left:314.6px;top:929.3px;width:18.0px;height:8.0px;"></div>
<div class="trk" style="left:369.3px;top:835.3px;width:2.6px;height:102.1px;"></div>
<div class="tk" style="left:381.6px;top:838.7px;width:5.2px;height:1.0px;"></div>
<div class="tk" style="left:381.6px;top:848.0px;width:5.2px;height:1.0px;"></div>
<div class="tk" style="left:381.6px;top:857.2px;width:5.2px;height:1.0px;"></div>
<div class="tk" style="left:381.6px;top:866.5px;width:5.2px;height:1.0px;"></div>
<div class="tk" style="left:381.6px;top:875.8px;width:5.2px;height:1.0px;"></div>
<div class="tk" style="left:381.6px;top:885.0px;width:5.2px;height:1.0px;"></div>
<div class="tk" style="left:381.6px;top:894.3px;width:5.2px;height:1.0px;"></div>
<div class="tk" style="left:381.6px;top:903.6px;width:5.2px;height:1.0px;"></div>
<div class="tk" style="left:381.6px;top:912.9px;width:5.2px;height:1.0px;"></div>
<div class="tk" style="left:381.6px;top:922.1px;width:5.2px;height:1.0px;"></div>
<div class="tk" style="left:381.6px;top:931.4px;width:5.2px;height:1.0px;"></div>
<div class="th" style="left:361.6px;top:924.6px;width:18.0px;height:8.0px;"></div>
<div class="trk" style="left:416.3px;top:835.3px;width:2.6px;height:102.1px;"></div>
<div class="tk" style="left:428.6px;top:838.7px;width:5.2px;height:1.0px;"></div>
<div class="tk" style="left:428.6px;top:848.0px;width:5.2px;height:1.0px;"></div>
<div class="tk" style="left:428.6px;top:857.2px;width:5.2px;height:1.0px;"></div>
<div class="tk" style="left:428.6px;top:866.5px;width:5.2px;height:1.0px;"></div>
<div class="tk" style="left:428.6px;top:875.8px;width:5.2px;height:1.0px;"></div>
<div class="tk" style="left:428.6px;top:885.0px;width:5.2px;height:1.0px;"></div>
<div class="tk" style="left:428.6px;top:894.3px;width:5.2px;height:1.0px;"></div>
<div class="tk" style="left:428.6px;top:903.6px;width:5.2px;height:1.0px;"></div>
<div class="tk" style="left:428.6px;top:912.9px;width:5.2px;height:1.0px;"></div>
<div class="tk" style="left:428.6px;top:922.1px;width:5.2px;height:1.0px;"></div>
<div class="tk" style="left:428.6px;top:931.4px;width:5.2px;height:1.0px;"></div>
<div class="th" style="left:408.6px;top:929.3px;width:18.0px;height:8.0px;"></div>
<div class="trk" style="left:463.2px;top:835.3px;width:2.6px;height:102.1px;"></div>
<div class="tk" style="left:475.5px;top:838.7px;width:5.2px;height:1.0px;"></div>
<div class="tk" style="left:475.5px;top:848.0px;width:5.2px;height:1.0px;"></div>
<div class="tk" style="left:475.5px;top:857.2px;width:5.2px;height:1.0px;"></div>
<div class="tk" style="left:475.5px;top:866.5px;width:5.2px;height:1.0px;"></div>
<div class="tk" style="left:475.5px;top:875.8px;width:5.2px;height:1.0px;"></div>
<div class="tk" style="left:475.5px;top:885.0px;width:5.2px;height:1.0px;"></div>
<div class="tk" style="left:475.5px;top:894.3px;width:5.2px;height:1.0px;"></div>
<div class="tk" style="left:475.5px;top:903.6px;width:5.2px;height:1.0px;"></div>
<div class="tk" style="left:475.5px;top:912.9px;width:5.2px;height:1.0px;"></div>
<div class="tk" style="left:475.5px;top:922.1px;width:5.2px;height:1.0px;"></div>
<div class="tk" style="left:475.5px;top:931.4px;width:5.2px;height:1.0px;"></div>
<div class="th" style="left:455.5px;top:929.3px;width:18.0px;height:8.0px;"></div>
<div class="trk" style="left:510.2px;top:835.3px;width:2.6px;height:102.1px;"></div>
<div class="tk" style="left:522.5px;top:838.7px;width:5.2px;height:1.0px;"></div>
<div class="tk" style="left:522.5px;top:848.0px;width:5.2px;height:1.0px;"></div>
<div class="tk" style="left:522.5px;top:857.2px;width:5.2px;height:1.0px;"></div>
<div class="tk" style="left:522.5px;top:866.5px;width:5.2px;height:1.0px;"></div>
<div class="tk" style="left:522.5px;top:875.8px;width:5.2px;height:1.0px;"></div>
<div class="tk" style="left:522.5px;top:885.0px;width:5.2px;height:1.0px;"></div>
<div class="tk" style="left:522.5px;top:894.3px;width:5.2px;height:1.0px;"></div>
<div class="tk" style="left:522.5px;top:903.6px;width:5.2px;height:1.0px;"></div>
<div class="tk" style="left:522.5px;top:912.9px;width:5.2px;height:1.0px;"></div>
<div class="tk" style="left:522.5px;top:922.1px;width:5.2px;height:1.0px;"></div>
<div class="tk" style="left:522.5px;top:931.4px;width:5.2px;height:1.0px;"></div>
<div class="th" style="left:502.5px;top:929.3px;width:18.0px;height:8.0px;"></div>
<span class="t" style="left:211.2px;top:947.1px;font-size:12px;line-height:14.4px;color:#fff;transform:scaleX(0.887);">RF PWR</span>
<span class="t" style="left:268.0px;top:947.1px;font-size:12px;line-height:14.4px;color:#fff;transform:scaleX(0.857);">Mic</span>
<div class="ck" style="left:297.7px;top:947.8px;width:11.5px;height:11.5px;"></div>
<span class="t" style="left:316.0px;top:946.5px;font-size:12px;line-height:14.4px;color:#fff;transform:scaleX(0.865);">Moni</span>
<div class="ck" style="left:349.7px;top:948.8px;width:11.5px;height:11.5px;"></div>
<span class="t" style="left:367.4px;top:947.4px;font-size:12px;line-height:14.4px;color:#fff;transform:scaleX(0.831);">Comp</span>
<span class="t" style="left:406.0px;top:947.1px;font-size:12px;line-height:14.4px;color:#fff;transform:scaleX(0.856);">V-Gain</span>
<span class="t" style="left:452.3px;top:947.1px;font-size:12px;line-height:14.4px;color:#fff;transform:scaleX(0.849);">A-VOX</span>
<span class="t" style="left:504.5px;top:947.1px;font-size:12px;line-height:14.4px;color:#fff;transform:scaleX(0.888);">V-DLY</span>
<div class="b" style="left:219.3px;top:970.0px;width:44.5px;height:21.2px;font-size:11.6px;"><span style="display:inline-block;transform:scaleX(0.88);white-space:nowrap">TX</span></div>
<div class="b" style="left:431.4px;top:969.2px;width:44.4px;height:22.2px;font-size:11.6px;"><span style="display:inline-block;transform:scaleX(0.88);white-space:nowrap">VOX</span></div>
<div class="b sel" style="left:488.0px;top:970.0px;width:53.0px;height:20.6px;font-size:11.6px;"><span style="display:inline-block;transform:scaleX(0.88);white-space:nowrap">SSB-W</span></div>
<span class="t" style="left:337.4px;top:988.8px;font-size:13px;line-height:15.6px;color:#fcd616;font-weight:bold;transform:scaleX(0.843);">Transmit</span>
<div class="g" style="left:560.5px;top:823.6px;width:529.1px;height:188.2px;"></div>
<div class="trk" style="left:587.8px;top:848.9px;width:114.1px;height:3.0px;"></div>
<div class="tk" style="left:591.8px;top:862.2px;width:1.0px;height:4.7px;"></div>
<div class="tk" style="left:602.2px;top:862.2px;width:1.0px;height:4.7px;"></div>
<div class="tk" style="left:612.6px;top:862.2px;width:1.0px;height:4.7px;"></div>
<div class="tk" style="left:623.0px;top:862.2px;width:1.0px;height:4.7px;"></div>
<div class="tk" style="left:633.4px;top:862.2px;width:1.0px;height:4.7px;"></div>
<div class="tk" style="left:643.8px;top:862.2px;width:1.0px;height:4.7px;"></div>
<div class="tk" style="left:654.3px;top:862.2px;width:1.0px;height:4.7px;"></div>
<div class="tk" style="left:664.7px;top:862.2px;width:1.0px;height:4.7px;"></div>
<div class="tk" style="left:675.1px;top:862.2px;width:1.0px;height:4.7px;"></div>
<div class="tk" style="left:685.5px;top:862.2px;width:1.0px;height:4.7px;"></div>
<div class="tk" style="left:695.9px;top:862.2px;width:1.0px;height:4.7px;"></div>
<div class="th" style="left:641.0px;top:840.9px;width:8.0px;height:19.0px;"></div>
<span class="t" style="left:621.2px;top:872.7px;font-size:12px;line-height:14.4px;color:#fff;transform:scaleX(0.879);">Inner PBT</span>
<div class="trk" style="left:587.8px;top:906.9px;width:114.1px;height:3.0px;"></div>
<div class="tk" style="left:591.8px;top:920.4px;width:1.0px;height:4.4px;"></div>
<div class="tk" style="left:602.2px;top:920.4px;width:1.0px;height:4.4px;"></div>
<div class="tk" style="left:612.6px;top:920.4px;width:1.0px;height:4.4px;"></div>
<div class="tk" style="left:623.0px;top:920.4px;width:1.0px;height:4.4px;"></div>
<div class="tk" style="left:633.4px;top:920.4px;width:1.0px;height:4.4px;"></div>
<div class="tk" style="left:643.8px;top:920.4px;width:1.0px;height:4.4px;"></div>
<div class="tk" style="left:654.3px;top:920.4px;width:1.0px;height:4.4px;"></div>
<div class="tk" style="left:664.7px;top:920.4px;width:1.0px;height:4.4px;"></div>
<div class="tk" style="left:675.1px;top:920.4px;width:1.0px;height:4.4px;"></div>
<div class="tk" style="left:685.5px;top:920.4px;width:1.0px;height:4.4px;"></div>
<div class="tk" style="left:695.9px;top:920.4px;width:1.0px;height:4.4px;"></div>
<div class="th" style="left:641.0px;top:898.9px;width:8.0px;height:19.0px;"></div>
<span class="t" style="left:620.5px;top:930.7px;font-size:12px;line-height:14.4px;color:#fff;transform:scaleX(0.884);">Outer PBT</span>
<div class="b" style="left:575.0px;top:969.2px;width:48.9px;height:22.4px;font-size:11.6px;"><span style="display:inline-block;transform:scaleX(0.88);white-space:nowrap">Reset</span></div>
<span class="t" style="left:635.3px;top:966.4px;font-size:12px;line-height:14.4px;color:#fff;transform:scaleX(0.887);">DSP BW</span>
<span class="t" style="left:685.2px;top:966.4px;font-size:12px;line-height:14.4px;color:#fcd616;transform:scaleX(0.880);">9000</span>
<span class="t" style="left:635.3px;top:983.4px;font-size:12px;line-height:14.4px;color:#fff;transform:scaleX(0.870);">DSP SFT</span>
<span class="t" style="left:685.2px;top:983.4px;font-size:12px;line-height:14.4px;color:#fcd616;transform:scaleX(0.854);">0</span>
<div class="b sel" style="left:743.9px;top:845.2px;width:47.0px;height:20.4px;font-size:11.6px;"><span style="display:inline-block;transform:scaleX(0.88);white-space:nowrap">F1</span></div>
<div class="b" style="left:743.1px;top:873.4px;width:48.8px;height:22.2px;font-size:11.6px;"><span style="display:inline-block;transform:scaleX(0.88);white-space:nowrap">F2</span></div>
<div class="b" style="left:743.1px;top:902.1px;width:48.8px;height:22.7px;font-size:11.6px;"><span style="display:inline-block;transform:scaleX(0.88);white-space:nowrap">F3</span></div>
<div class="b" style="left:797.9px;top:843.9px;width:49.1px;height:22.7px;font-size:11.6px;"><span style="display:inline-block;transform:scaleX(0.88);white-space:nowrap">Sharp</span></div>
<div class="b" style="left:797.9px;top:873.1px;width:49.1px;height:22.5px;font-size:11.6px;"><span style="display:inline-block;transform:scaleX(0.88);white-space:nowrap">Soft</span></div>
<div class="b" style="left:797.9px;top:901.9px;width:49.1px;height:22.9px;font-size:11.6px;"><span style="display:inline-block;transform:scaleX(0.88);white-space:nowrap">Reset</span></div>
<div class="trk" style="left:748.3px;top:943.7px;width:90.8px;height:3.0px;"></div>
<div class="tk" style="left:752.0px;top:957.4px;width:1.0px;height:4.5px;"></div>
<div class="tk" style="left:760.1px;top:957.4px;width:1.0px;height:4.5px;"></div>
<div class="tk" style="left:768.2px;top:957.4px;width:1.0px;height:4.5px;"></div>
<div class="tk" style="left:776.3px;top:957.4px;width:1.0px;height:4.5px;"></div>
<div class="tk" style="left:784.4px;top:957.4px;width:1.0px;height:4.5px;"></div>
<div class="tk" style="left:792.5px;top:957.4px;width:1.0px;height:4.5px;"></div>
<div class="tk" style="left:800.5px;top:957.4px;width:1.0px;height:4.5px;"></div>
<div class="tk" style="left:808.6px;top:957.4px;width:1.0px;height:4.5px;"></div>
<div class="tk" style="left:816.7px;top:957.4px;width:1.0px;height:4.5px;"></div>
<div class="tk" style="left:824.8px;top:957.4px;width:1.0px;height:4.5px;"></div>
<div class="tk" style="left:832.9px;top:957.4px;width:1.0px;height:4.5px;"></div>
<div class="th" style="left:822.4px;top:936.2px;width:7.5px;height:18.0px;"></div>
<span class="t" style="left:765.3px;top:966.4px;font-size:12px;line-height:14.4px;color:#fff;transform:scaleX(0.760);">IF</span>
<span class="t" style="left:781.7px;top:966.4px;font-size:12px;line-height:14.4px;color:#fcd616;transform:scaleX(0.887);">BW:9000</span>
<span class="t" style="left:779.6px;top:989.0px;font-size:13px;line-height:15.6px;color:#fcd616;font-weight:bold;transform:scaleX(0.851);">Filters</span>
<div class="trk" style="left:877.5px;top:846.9px;width:90.0px;height:3.0px;"></div>
<div class="tk" style="left:880.9px;top:860.4px;width:1.0px;height:4.4px;"></div>
<div class="tk" style="left:889.0px;top:860.4px;width:1.0px;height:4.4px;"></div>
<div class="tk" style="left:897.1px;top:860.4px;width:1.0px;height:4.4px;"></div>
<div class="tk" style="left:905.3px;top:860.4px;width:1.0px;height:4.4px;"></div>
<div class="tk" style="left:913.4px;top:860.4px;width:1.0px;height:4.4px;"></div>
<div class="tk" style="left:921.5px;top:860.4px;width:1.0px;height:4.4px;"></div>
<div class="tk" style="left:929.6px;top:860.4px;width:1.0px;height:4.4px;"></div>
<div class="tk" style="left:937.7px;top:860.4px;width:1.0px;height:4.4px;"></div>
<div class="tk" style="left:945.9px;top:860.4px;width:1.0px;height:4.4px;"></div>
<div class="tk" style="left:954.0px;top:860.4px;width:1.0px;height:4.4px;"></div>
<div class="tk" style="left:962.1px;top:860.4px;width:1.0px;height:4.4px;"></div>
<div class="th" style="left:923.5px;top:839.1px;width:7.5px;height:18.5px;"></div>
<span class="t" style="left:900.5px;top:868.6px;font-size:12px;line-height:14.4px;color:#fff;transform:scaleX(0.876);">NB Depth</span>
<div class="trk" style="left:877.5px;top:901.7px;width:90.0px;height:3.0px;"></div>
<div class="tk" style="left:880.9px;top:915.2px;width:1.0px;height:4.4px;"></div>
<div class="tk" style="left:889.0px;top:915.2px;width:1.0px;height:4.4px;"></div>
<div class="tk" style="left:897.1px;top:915.2px;width:1.0px;height:4.4px;"></div>
<div class="tk" style="left:905.3px;top:915.2px;width:1.0px;height:4.4px;"></div>
<div class="tk" style="left:913.4px;top:915.2px;width:1.0px;height:4.4px;"></div>
<div class="tk" style="left:921.5px;top:915.2px;width:1.0px;height:4.4px;"></div>
<div class="tk" style="left:929.6px;top:915.2px;width:1.0px;height:4.4px;"></div>
<div class="tk" style="left:937.7px;top:915.2px;width:1.0px;height:4.4px;"></div>
<div class="tk" style="left:945.9px;top:915.2px;width:1.0px;height:4.4px;"></div>
<div class="tk" style="left:954.0px;top:915.2px;width:1.0px;height:4.4px;"></div>
<div class="tk" style="left:962.1px;top:915.2px;width:1.0px;height:4.4px;"></div>
<div class="th" style="left:918.4px;top:894.2px;width:7.5px;height:18.0px;"></div>
<span class="t" style="left:900.5px;top:927.5px;font-size:12px;line-height:14.4px;color:#fff;transform:scaleX(0.880);">NB Width</span>
<div class="trk" style="left:877.5px;top:959.1px;width:90.0px;height:3.0px;"></div>
<div class="tk" style="left:880.9px;top:972.3px;width:1.0px;height:4.7px;"></div>
<div class="tk" style="left:889.0px;top:972.3px;width:1.0px;height:4.7px;"></div>
<div class="tk" style="left:897.1px;top:972.3px;width:1.0px;height:4.7px;"></div>
<div class="tk" style="left:905.3px;top:972.3px;width:1.0px;height:4.7px;"></div>
<div class="tk" style="left:913.4px;top:972.3px;width:1.0px;height:4.7px;"></div>
<div class="tk" style="left:921.5px;top:972.3px;width:1.0px;height:4.7px;"></div>
<div class="tk" style="left:929.6px;top:972.3px;width:1.0px;height:4.7px;"></div>
<div class="tk" style="left:937.7px;top:972.3px;width:1.0px;height:4.7px;"></div>
<div class="tk" style="left:945.9px;top:972.3px;width:1.0px;height:4.7px;"></div>
<div class="tk" style="left:954.0px;top:972.3px;width:1.0px;height:4.7px;"></div>
<div class="tk" style="left:962.1px;top:972.3px;width:1.0px;height:4.7px;"></div>
<div class="th" style="left:925.1px;top:951.6px;width:7.5px;height:18.0px;"></div>
<div class="ck" style="left:883.5px;top:984.6px;width:11.8px;height:11.8px;"></div>
<span class="t" style="left:902.3px;top:983.6px;font-size:12px;line-height:14.4px;color:#fff;transform:scaleX(0.828);">NB</span>
<span class="t" style="left:927.3px;top:983.6px;font-size:12px;line-height:14.4px;color:#fff;transform:scaleX(0.864);">Level</span>
<div class="trk" style="left:982.1px;top:846.9px;width:90.6px;height:3.0px;"></div>
<div class="tk" style="left:985.5px;top:860.4px;width:1.0px;height:4.4px;"></div>
<div class="tk" style="left:993.6px;top:860.4px;width:1.0px;height:4.4px;"></div>
<div class="tk" style="left:1001.8px;top:860.4px;width:1.0px;height:4.4px;"></div>
<div class="tk" style="left:1010.0px;top:860.4px;width:1.0px;height:4.4px;"></div>
<div class="tk" style="left:1018.1px;top:860.4px;width:1.0px;height:4.4px;"></div>
<div class="tk" style="left:1026.2px;top:860.4px;width:1.0px;height:4.4px;"></div>
<div class="tk" style="left:1034.4px;top:860.4px;width:1.0px;height:4.4px;"></div>
<div class="tk" style="left:1042.5px;top:860.4px;width:1.0px;height:4.4px;"></div>
<div class="tk" style="left:1050.7px;top:860.4px;width:1.0px;height:4.4px;"></div>
<div class="tk" style="left:1058.8px;top:860.4px;width:1.0px;height:4.4px;"></div>
<div class="tk" style="left:1067.0px;top:860.4px;width:1.0px;height:4.4px;"></div>
<div class="th gy" style="left:1023.2px;top:839.1px;width:7.5px;height:18.5px;"></div>
<div class="ck" style="left:1000.1px;top:869.5px;width:12.2px;height:12.2px;"></div>
<span class="t" style="left:1018.4px;top:868.6px;font-size:12px;line-height:14.4px;color:#fff;transform:scaleX(0.839);">Digi Sel</span>
<div class="trk" style="left:982.1px;top:901.7px;width:90.6px;height:3.0px;"></div>
<div class="tk" style="left:985.5px;top:915.2px;width:1.0px;height:4.4px;"></div>
<div class="tk" style="left:993.6px;top:915.2px;width:1.0px;height:4.4px;"></div>
<div class="tk" style="left:1001.8px;top:915.2px;width:1.0px;height:4.4px;"></div>
<div class="tk" style="left:1010.0px;top:915.2px;width:1.0px;height:4.4px;"></div>
<div class="tk" style="left:1018.1px;top:915.2px;width:1.0px;height:4.4px;"></div>
<div class="tk" style="left:1026.2px;top:915.2px;width:1.0px;height:4.4px;"></div>
<div class="tk" style="left:1034.4px;top:915.2px;width:1.0px;height:4.4px;"></div>
<div class="tk" style="left:1042.5px;top:915.2px;width:1.0px;height:4.4px;"></div>
<div class="tk" style="left:1050.7px;top:915.2px;width:1.0px;height:4.4px;"></div>
<div class="tk" style="left:1058.8px;top:915.2px;width:1.0px;height:4.4px;"></div>
<div class="tk" style="left:1067.0px;top:915.2px;width:1.0px;height:4.4px;"></div>
<div class="th" style="left:1005.0px;top:894.2px;width:7.5px;height:18.0px;"></div>
<div class="ck" style="left:1011.9px;top:928.5px;width:11.5px;height:11.5px;"></div>
<span class="t" style="left:1030.4px;top:927.5px;font-size:12px;line-height:14.4px;color:#fff;transform:scaleX(0.860);">NR</span>
<div class="trk" style="left:982.1px;top:959.1px;width:90.6px;height:3.0px;"></div>
<div class="tk" style="left:985.5px;top:972.3px;width:1.0px;height:4.7px;"></div>
<div class="tk" style="left:993.6px;top:972.3px;width:1.0px;height:4.7px;"></div>
<div class="tk" style="left:1001.8px;top:972.3px;width:1.0px;height:4.7px;"></div>
<div class="tk" style="left:1010.0px;top:972.3px;width:1.0px;height:4.7px;"></div>
<div class="tk" style="left:1018.1px;top:972.3px;width:1.0px;height:4.7px;"></div>
<div class="tk" style="left:1026.2px;top:972.3px;width:1.0px;height:4.7px;"></div>
<div class="tk" style="left:1034.4px;top:972.3px;width:1.0px;height:4.7px;"></div>
<div class="tk" style="left:1042.5px;top:972.3px;width:1.0px;height:4.7px;"></div>
<div class="tk" style="left:1050.7px;top:972.3px;width:1.0px;height:4.7px;"></div>
<div class="tk" style="left:1058.8px;top:972.3px;width:1.0px;height:4.7px;"></div>
<div class="tk" style="left:1067.0px;top:972.3px;width:1.0px;height:4.7px;"></div>
<div class="th" style="left:1023.2px;top:951.6px;width:7.5px;height:18.0px;"></div>
<div class="ck" style="left:986.6px;top:984.6px;width:11.8px;height:11.8px;"></div>
<span class="t" style="left:1005.4px;top:983.6px;font-size:12px;line-height:14.4px;color:#fff;transform:scaleX(0.897);">Notch - AUTO</span>
<div class="win" style="left:1102px;top:496px;width:689.3px;height:524px;background:#000"></div>
<div class="tb" style="left:1102.0px;top:496.0px;width:689.3px;height:30.0px;"></div>
<div class="ico" style="left:1111.4px;top:504.3px;width:12.6px;height:12.7px;"></div>
<span class="t" style="left:1131.3px;top:503.4px;font-size:12px;line-height:14.4px;color:#999;transform:scaleX(0.948);">Shortwave Database</span>
<div class="" style="left:1672.0px;top:510.0px;width:10.0px;height:1.0px;background:#777"></div>
<div class="" style="left:1717.0px;top:505.0px;width:10.0px;height:10.0px;border:1px solid #777"></div>
<svg class="a" style="left:1762px;top:504px" width="12" height="12"><path d="M1 1L11 11M11 1L1 11" stroke="#777" stroke-width="1" fill="none"/></svg>
<div class="g" style="left:1108.5px;top:533.3px;width:677.3px;height:307.4px;"></div>
<span class="t" style="left:1129.6px;top:550.4px;font-size:16px;line-height:19.2px;color:#fcd616;font-weight:bold;transform:scaleX(1.054);">Shortwave Listening Database</span>
<span class="t" style="left:1723.7px;top:550.4px;font-size:16px;line-height:19.2px;color:#fcd616;font-weight:bold;transform:scaleX(1.022);">EiBi</span>
<div class="" style="left:1118.5px;top:587.1px;width:635.0px;height:20.2px;background:#fff"></div>
<div class="" style="left:1118.5px;top:607.3px;width:40.0px;height:44.3px;background:#fff"></div>
<div class="" style="left:1158.5px;top:607.3px;width:65.0px;height:22.0px;background:#3399ff"></div>
<svg class="a" style="left:1118px;top:587px" width="636" height="66" viewBox="1118 587 636 66"><path d="M1158.5 588.1V607.3M1223.5 588.1V607.3M1288.4 588.1V607.3M1408.3 588.1V607.3M1507.5 588.1V607.3M1552.6 588.1V607.3M1653.4 588.1V607.3" stroke="#dcdcdc" stroke-width="1"/><path d="M1158.5 607.3V651.6M1223.5 607.3V651.6M1288.4 607.3V651.6M1408.3 607.3V651.6M1507.5 607.3V651.6M1552.6 607.3V651.6M1653.4 607.3V651.6M1753.5 607.3V651.6M1118.5 607.3H1753.5M1118.5 629.3H1753.5M1118.5 651.6H1753.5" stroke="#a8a8a8" stroke-width="1" fill="none"/><polygon points="1125.5,614.5 1125.5,623 1130.3,618.8" fill="#222"/></svg>
<span class="t" style="left:1166.2px;top:590.6px;font-size:12px;line-height:14.4px;color:#000;transform:scaleX(0.870);">Frequency</span>
<span class="t" style="left:1231.6px;top:590.6px;font-size:12px;line-height:14.4px;color:#000;transform:scaleX(0.847);">Time</span>
<span class="t" style="left:1296.4px;top:590.6px;font-size:12px;line-height:14.4px;color:#000;transform:scaleX(0.847);">Name</span>
<span class="t" style="left:1415.5px;top:590.6px;font-size:12px;line-height:14.4px;color:#000;transform:scaleX(0.876);">Country</span>
<span class="t" style="left:1516.0px;top:590.6px;font-size:12px;line-height:14.4px;color:#000;transform:scaleX(0.841);">Days</span>
<span class="t" style="left:1561.1px;top:590.6px;font-size:12px;line-height:14.4px;color:#000;transform:scaleX(0.897);">Language</span>
<span class="t" style="left:1661.3px;top:590.6px;font-size:12px;line-height:14.4px;color:#000;transform:scaleX(0.852);">Areas</span>
<span class="t" style="left:1162.3px;top:611.6px;font-size:12px;line-height:14.4px;color:#fff;transform:scaleX(0.899);">9690</span>
<span class="t" style="left:1227.3px;top:611.6px;font-size:12px;line-height:14.4px;color:#fcd616;transform:scaleX(0.889);">1400-2200</span>
<span class="t" style="left:1292.2px;top:611.6px;font-size:12px;line-height:14.4px;color:#fcd616;transform:scaleX(0.867);">Radio Exterior España</span>
<span class="t" style="left:1412.3px;top:611.6px;font-size:12px;line-height:14.4px;color:#fcd616;transform:scaleX(0.854);">Spain</span>
<span class="t" style="left:1512.1px;top:611.6px;font-size:12px;line-height:14.4px;color:#fcd616;transform:scaleX(0.865);">SaSu</span>
<span class="t" style="left:1556.6px;top:611.6px;font-size:12px;line-height:14.4px;color:#fcd616;transform:scaleX(0.899);">Spanish/Castella...</span>
<span class="t" style="left:1162.3px;top:633.5px;font-size:12px;line-height:14.4px;color:#fcd616;transform:scaleX(0.899);">9690</span>
<span class="t" style="left:1227.3px;top:633.5px;font-size:12px;line-height:14.4px;color:#fcd616;transform:scaleX(0.889);">1800-2300</span>
<span class="t" style="left:1292.2px;top:633.5px;font-size:12px;line-height:14.4px;color:#fcd616;transform:scaleX(0.867);">Radio Exterior España</span>
<span class="t" style="left:1412.3px;top:633.5px;font-size:12px;line-height:14.4px;color:#fcd616;transform:scaleX(0.854);">Spain</span>
<span class="t" style="left:1512.1px;top:633.5px;font-size:12px;line-height:14.4px;color:#fcd616;transform:scaleX(0.825);">Mo-Fr</span>
<span class="t" style="left:1556.6px;top:633.5px;font-size:12px;line-height:14.4px;color:#fcd616;transform:scaleX(0.899);">Spanish/Castella...</span>
<div class="g" style="left:1108.5px;top:847.4px;width:677.3px;height:76.8px;"></div>
<span class="t" style="left:1129.5px;top:862.1px;font-size:15px;line-height:18.0px;color:#fcd616;font-weight:bold;transform:scaleX(0.945);">Bands</span>
<div class="b" style="left:1183.1px;top:860.3px;width:53.0px;height:22.0px;font-size:11.6px;"><span style="display:inline-block;transform:scaleX(0.88);white-space:nowrap">-120m</span></div>
<div class="b" style="left:1244.1px;top:860.3px;width:53.0px;height:22.0px;font-size:11.6px;"><span style="display:inline-block;transform:scaleX(0.88);white-space:nowrap">90m</span></div>
<div class="b" style="left:1305.1px;top:860.3px;width:53.0px;height:22.0px;font-size:11.6px;"><span style="display:inline-block;transform:scaleX(0.88);white-space:nowrap">75m</span></div>
<div class="b" style="left:1366.0px;top:860.3px;width:53.0px;height:22.0px;font-size:11.6px;"><span style="display:inline-block;transform:scaleX(0.88);white-space:nowrap">75-60</span></div>
<div class="b" style="left:1427.0px;top:860.3px;width:53.0px;height:22.0px;font-size:11.6px;"><span style="display:inline-block;transform:scaleX(0.88);white-space:nowrap">60m</span></div>
<div class="b" style="left:1488.0px;top:860.3px;width:53.0px;height:22.0px;font-size:11.6px;"><span style="display:inline-block;transform:scaleX(0.88);white-space:nowrap">49m</span></div>
<div class="b" style="left:1549.0px;top:860.3px;width:53.0px;height:22.0px;font-size:11.6px;"><span style="display:inline-block;transform:scaleX(0.88);white-space:nowrap">41m</span></div>
<div class="b" style="left:1610.0px;top:860.3px;width:53.0px;height:22.0px;font-size:11.6px;"><span style="display:inline-block;transform:scaleX(0.88);white-space:nowrap">41-31</span></div>
<div class="b" style="left:1183.1px;top:889.5px;width:53.0px;height:22.0px;font-size:11.6px;"><span style="display:inline-block;transform:scaleX(0.88);white-space:nowrap">31m</span></div>
<div class="b" style="left:1244.1px;top:889.5px;width:53.0px;height:22.0px;font-size:11.6px;"><span style="display:inline-block;transform:scaleX(0.88);white-space:nowrap">25m</span></div>
<div class="b" style="left:1305.1px;top:889.5px;width:53.0px;height:22.0px;font-size:11.6px;"><span style="display:inline-block;transform:scaleX(0.88);white-space:nowrap">22m</span></div>
<div class="b" style="left:1366.0px;top:889.5px;width:53.0px;height:22.0px;font-size:11.6px;"><span style="display:inline-block;transform:scaleX(0.88);white-space:nowrap">19m</span></div>
<div class="b" style="left:1427.0px;top:889.5px;width:53.0px;height:22.0px;font-size:11.6px;"><span style="display:inline-block;transform:scaleX(0.88);white-space:nowrap">16m</span></div>
<div class="b" style="left:1488.0px;top:889.5px;width:53.0px;height:22.0px;font-size:11.6px;"><span style="display:inline-block;transform:scaleX(0.88);white-space:nowrap">15m</span></div>
<div class="b" style="left:1549.0px;top:889.5px;width:53.0px;height:22.0px;font-size:11.6px;"><span style="display:inline-block;transform:scaleX(0.88);white-space:nowrap">13m</span></div>
<div class="b" style="left:1610.0px;top:889.5px;width:53.0px;height:22.0px;font-size:11.6px;"><span style="display:inline-block;transform:scaleX(0.88);white-space:nowrap">11m</span></div>
<div class="b sel" style="left:1705.2px;top:861.4px;width:57.9px;height:20.3px;font-size:11.6px;"><span style="display:inline-block;transform:scaleX(0.88);white-space:nowrap">Lookup</span></div>
<div class="b sel" style="left:1705.2px;top:890.2px;width:57.9px;height:20.7px;font-size:11.6px;border:2px solid #2b86e8;box-shadow:inset 0 0 0 1px #e8e8e8"><span style="display:inline-block;transform:scaleX(0.88);white-space:nowrap">On Air</span></div>
<div class="g" style="left:1108.5px;top:931.3px;width:677.3px;height:80.3px;"></div>
<span class="t" style="left:1131.3px;top:947.4px;font-size:15px;line-height:18.0px;color:#fcd616;font-weight:bold;transform:scaleX(0.951);">Filters</span>
<span class="t" style="left:1201.6px;top:949.3px;font-size:13px;line-height:15.6px;color:#fcd616;font-weight:bold;transform:scaleX(0.890);">Name</span>
<div class="inp" style="left:1243.7px;top:948.8px;width:141.9px;height:18.4px;"></div>
<span class="t" style="left:1179.8px;top:978.6px;font-size:13px;line-height:15.6px;color:#fcd616;font-weight:bold;transform:scaleX(0.897);">Language</span>
<div class="inp" style="left:1245.5px;top:977.8px;width:140.1px;height:18.3px;"></div>
<span class="t" style="left:1416.9px;top:949.3px;font-size:13px;line-height:15.6px;color:#fcd616;font-weight:bold;transform:scaleX(0.859);">Country</span>
<div class="inp" style="left:1470.3px;top:947.7px;width:111.2px;height:18.9px;"></div>
<span class="t" style="left:1434.5px;top:978.6px;font-size:13px;line-height:15.6px;color:#fcd616;font-weight:bold;transform:scaleX(0.872);">Area</span>
<div class="inp" style="left:1470.3px;top:976.3px;width:111.2px;height:19.1px;"></div>
<div class="b" style="left:1615.1px;top:946.3px;width:52.9px;height:22.5px;font-size:11.6px;"><span style="display:inline-block;transform:scaleX(0.88);white-space:nowrap">Search</span></div>
<div class="b" style="left:1615.1px;top:975.1px;width:52.9px;height:22.6px;font-size:11.6px;"><span style="display:inline-block;transform:scaleX(0.88);white-space:nowrap">Clear</span></div>
<div class="b" style="left:1705.2px;top:945.2px;width:59.7px;height:22.7px;font-size:11.6px;"><span style="display:inline-block;transform:scaleX(0.88);white-space:nowrap">Help</span></div>
<div class="b" style="left:1705.2px;top:975.1px;width:59.7px;height:22.6px;font-size:11.6px;"><span style="display:inline-block;transform:scaleX(0.88);white-space:nowrap">Reset</span></div>
<div class="win s3" style="left:1922px;top:352.3px;width:685px;height:687.7px;background:#000"></div>
<div class="tb" style="left:1922.0px;top:352.3px;width:685.0px;height:31.3px;"></div>
<div class="ico" style="left:1934.0px;top:361.5px;width:12.5px;height:12.5px;"></div>
<span class="t" style="left:1953.4px;top:360.5px;font-size:12px;line-height:14.4px;color:#999;transform:scaleX(0.982);">Spectrum Control Panel</span>
<svg class="a" style="left:2585px;top:361px" width="12" height="12"><path d="M1 1L11 11M11 1L1 11" stroke="#888" stroke-width="1" fill="none"/></svg>
<div class="g" style="left:1934.4px;top:396.6px;width:258.6px;height:196.4px;"></div>
<span class="t" style="left:1954.4px;top:408.7px;font-size:14.5px;line-height:17.4px;color:#fcd616;font-weight:bold;transform:scaleX(1.006);">SDRPlay Settings</span>
<div class="" style="left:1964.1px;top:439.8px;width:87.7px;height:4.0px;background:#e4e4e4"></div>
<div class="" style="left:1968.9px;top:453.5px;width:1.0px;height:5.0px;background:#8a8a8a"></div>
<div class="" style="left:1981.8px;top:453.5px;width:1.0px;height:5.0px;background:#8a8a8a"></div>
<div class="" style="left:1994.6px;top:453.5px;width:1.0px;height:5.0px;background:#8a8a8a"></div>
<div class="" style="left:2007.5px;top:453.5px;width:1.0px;height:5.0px;background:#8a8a8a"></div>
<div class="" style="left:2020.3px;top:453.5px;width:1.0px;height:5.0px;background:#8a8a8a"></div>
<div class="" style="left:2033.2px;top:453.5px;width:1.0px;height:5.0px;background:#8a8a8a"></div>
<div class="" style="left:2046.0px;top:453.5px;width:1.0px;height:5.0px;background:#8a8a8a"></div>
<svg class="a" style="left:2028px;top:434px" width="12" height="20"><path d="M0.5 0.5H11V13.5L5.75 19.5L0.5 13.5Z" fill="#1778d6"/></svg>
<span class="t" style="left:1991.8px;top:465.6px;font-size:12px;line-height:14.4px;color:#fff;font-weight:bold;transform:scaleX(0.978);">RF Gain</span>
<div class="b" style="left:2082.8px;top:432.4px;width:94.2px;height:40.1px;flex-direction:column;line-height:13.5px"><span style="transform:scaleX(.87)">Reset Device</span><span style="transform:scaleX(.87)">Selection</span></div>
<div class="ck" style="left:1946.7px;top:491.6px;width:11.7px;height:11.7px;"><svg viewBox="0 0 12 12" width="100%" height="100%"><path d="M2.2 6.2 L4.8 8.8 L10 2.8" fill="none" stroke="#000" stroke-width="1.5"/></svg></div>
<span class="t" style="left:1965.7px;top:490.3px;font-size:12px;line-height:14.4px;color:#fff;font-weight:bold;">MW Notch filter</span>
<span class="t" style="left:1946.0px;top:514.7px;font-size:12px;line-height:14.4px;color:#fff;font-weight:bold;transform:scaleX(0.975);">Antenna</span>
<div class="" style="left:2010.4px;top:515.9px;width:12.0px;height:12.0px;border-radius:50%;background:#fff"></div>
<span class="t" style="left:2029.5px;top:514.7px;font-size:12px;line-height:14.4px;color:#fff;font-weight:bold;transform:scaleX(0.923);">A</span>
<div class="" style="left:2049.2px;top:515.9px;width:12.0px;height:12.0px;border-radius:50%;background:#fff"></div>
<span class="t" style="left:2068.5px;top:514.7px;font-size:12px;line-height:14.4px;color:#fff;font-weight:bold;transform:scaleX(0.923);">B</span>
<div class="" style="left:2087.2px;top:515.9px;width:12.0px;height:12.0px;border-radius:50%;background:#000;border:3.3px solid #c9c9c9"></div>
<span class="t" style="left:2105.9px;top:514.7px;font-size:12px;line-height:14.4px;color:#fff;font-weight:bold;transform:scaleX(1.023);">C (Hi-Z)</span>
<div class="ck" style="left:1946.7px;top:548.8px;width:11.7px;height:11.7px;"></div>
<span class="t" style="left:1965.7px;top:547.4px;font-size:12px;line-height:14.4px;color:#fff;font-weight:bold;transform:scaleX(0.985);">IQ Output Enabled</span>
<div class="b" style="left:2082.8px;top:540.2px;width:94.2px;height:28.4px;font-size:11.6px;padding-top:1px;"><span style="display:inline-block;transform:scaleX(0.88);white-space:nowrap">IQ Out Device</span></div>
<span class="t" style="left:1946.0px;top:571.7px;font-size:12px;line-height:14.4px;color:#fff;font-weight:bold;transform:scaleX(0.978);">Changes of IQ require restarting spectrum</span>
<div class="g" style="left:1934.4px;top:600.6px;width:258.2px;height:356.6px;"></div>
<span class="t" style="left:1954.4px;top:612.7px;font-size:14.5px;line-height:17.4px;color:#fcd616;font-weight:bold;transform:scaleX(0.971);">Spectrum Colors</span>
<div class="b" style="left:2092.0px;top:632.9px;width:56.0px;height:22.0px;font-size:11.6px;"><span style="display:inline-block;transform:scaleX(0.88);white-space:nowrap">Select</span></div>
<span class="t" style="left:2002.5px;top:637.0px;font-size:12px;line-height:14.4px;color:#fff;font-weight:bold;transform:scaleX(0.945);">Spectrum</span>
<div class="b" style="left:2092.0px;top:661.6px;width:56.0px;height:22.0px;font-size:11.6px;"><span style="display:inline-block;transform:scaleX(0.88);white-space:nowrap">Select</span></div>
<span class="t" style="left:1982.1px;top:665.7px;font-size:12px;line-height:14.4px;color:#fff;font-weight:bold;transform:scaleX(0.956);">Spectrum Fill</span>
<div class="b" style="left:2092.0px;top:690.9px;width:56.0px;height:22.0px;font-size:11.6px;"><span style="display:inline-block;transform:scaleX(0.88);white-space:nowrap">Select</span></div>
<span class="t" style="left:1975.3px;top:695.0px;font-size:12px;line-height:14.4px;color:#fff;font-weight:bold;transform:scaleX(0.954);">Spectrum Grid</span>
<div class="b" style="left:2092.0px;top:719.7px;width:56.0px;height:22.0px;font-size:11.6px;"><span style="display:inline-block;transform:scaleX(0.88);white-space:nowrap">Select</span></div>
<span class="t" style="left:1976.4px;top:723.8px;font-size:12px;line-height:14.4px;color:#fff;font-weight:bold;">VFO A Marker</span>
<div class="b" style="left:2092.0px;top:748.4px;width:56.0px;height:22.0px;font-size:11.6px;"><span style="display:inline-block;transform:scaleX(0.88);white-space:nowrap">Select</span></div>
<span class="t" style="left:1960.2px;top:752.5px;font-size:12px;line-height:14.4px;color:#fff;font-weight:bold;transform:scaleX(0.987);">VFO A Passband</span>
<div class="b" style="left:2092.0px;top:777.2px;width:56.0px;height:22.0px;font-size:11.6px;"><span style="display:inline-block;transform:scaleX(0.88);white-space:nowrap">Select</span></div>
<span class="t" style="left:1976.4px;top:781.3px;font-size:12px;line-height:14.4px;color:#fff;font-weight:bold;transform:scaleX(0.988);">VFO B Marker</span>
<div class="b" style="left:2092.0px;top:806.5px;width:56.0px;height:22.0px;font-size:11.6px;"><span style="display:inline-block;transform:scaleX(0.88);white-space:nowrap">Select</span></div>
<span class="t" style="left:1960.2px;top:810.6px;font-size:12px;line-height:14.4px;color:#fff;font-weight:bold;transform:scaleX(0.978);">VFO B Passband</span>
<div class="b" style="left:2092.0px;top:835.2px;width:56.0px;height:22.0px;font-size:11.6px;"><span style="display:inline-block;transform:scaleX(0.88);white-space:nowrap">Select</span></div>
<span class="t" style="left:1971.7px;top:839.3px;font-size:12px;line-height:14.4px;color:#fff;font-weight:bold;transform:scaleX(0.966);">Split Passband</span>
<div class="b" style="left:2092.0px;top:864.5px;width:56.0px;height:22.0px;font-size:11.6px;"><span style="display:inline-block;transform:scaleX(0.88);white-space:nowrap">Select</span></div>
<span class="t" style="left:1996.2px;top:868.6px;font-size:12px;line-height:14.4px;color:#fff;font-weight:bold;transform:scaleX(1.010);">Peak Hold</span>
<div class="b" style="left:2092.0px;top:893.3px;width:56.0px;height:22.0px;font-size:11.6px;"><span style="display:inline-block;transform:scaleX(0.88);white-space:nowrap">Select</span></div>
<span class="t" style="left:2002.5px;top:897.4px;font-size:12px;line-height:14.4px;color:#fff;font-weight:bold;transform:scaleX(0.934);">Crosshair</span>
<div class="ck" style="left:1954.4px;top:926.7px;width:11.6px;height:11.6px;"></div>
<span class="t" style="left:1973.8px;top:926.1px;font-size:12px;line-height:14.4px;color:#fff;font-weight:bold;transform:scaleX(0.968);">Show VFO B passband only in split</span>
<div class="g" style="left:2199.4px;top:396.5px;width:393.6px;height:481.7px;"></div>
<span class="t" style="left:2223.6px;top:408.7px;font-size:14.5px;line-height:17.4px;color:#fcd616;font-weight:bold;transform:scaleX(1.006);">Band Edge Markers</span>
<div class="" style="left:2261.7px;top:444.5px;width:75.3px;height:19.3px;background:#fff;border:1px solid #7a7a7a"></div>
<span class="t" style="left:2264.4px;top:446.6px;font-size:12px;line-height:14.4px;color:#000;transform:scaleX(0.870);">2000.0</span>
<div class="" style="left:2321.0px;top:445.5px;width:15.0px;height:17.3px;background:#f0f0f0;border-left:1px solid #c8c8c8"></div>
<svg class="a" style="left:2321.0px;top:444.5px" width="16" height="19.3"><path d="M5 7.1h6l-3-3.5zM5 12.1h6l-3 3.5z" fill="#222"/><path d="M1 9.6H15" stroke="#c8c8c8"/></svg>
<div class="" style="left:2261.7px;top:470.8px;width:75.3px;height:19.3px;background:#fff;border:1px solid #7a7a7a"></div>
<span class="t" style="left:2264.4px;top:473.0px;font-size:12px;line-height:14.4px;color:#000;transform:scaleX(0.870);">1800.0</span>
<div class="" style="left:2321.0px;top:471.8px;width:15.0px;height:17.3px;background:#f0f0f0;border-left:1px solid #c8c8c8"></div>
<svg class="a" style="left:2321.0px;top:470.8px" width="16" height="19.3"><path d="M5 7.2h6l-3-3.5zM5 12.2h6l-3 3.5z" fill="#222"/><path d="M1 9.7H15" stroke="#c8c8c8"/></svg>
<span class="t" style="left:2213.6px;top:446.8px;font-size:12px;line-height:14.4px;color:#fff;font-weight:bold;transform:scaleX(0.940);">160m</span>
<span class="t" style="left:2345.3px;top:447.1px;font-size:12px;line-height:14.4px;color:#fff;font-weight:bold;transform:scaleX(0.989);">Upper</span>
<span class="t" style="left:2345.3px;top:473.4px;font-size:12px;line-height:14.4px;color:#fff;font-weight:bold;transform:scaleX(0.971);">Lower</span>
<div class="" style="left:2261.7px;top:502.6px;width:75.3px;height:19.3px;background:#fff;border:1px solid #7a7a7a"></div>
<span class="t" style="left:2264.4px;top:504.8px;font-size:12px;line-height:14.4px;color:#000;transform:scaleX(0.870);">5403.0</span>
<div class="" style="left:2321.0px;top:503.6px;width:15.0px;height:17.3px;background:#f0f0f0;border-left:1px solid #c8c8c8"></div>
<svg class="a" style="left:2321.0px;top:502.6px" width="16" height="19.3"><path d="M5 7.1h6l-3-3.5zM5 12.1h6l-3 3.5z" fill="#222"/><path d="M1 9.6H15" stroke="#c8c8c8"/></svg>
<div class="" style="left:2261.7px;top:528.6px;width:75.3px;height:19.3px;background:#fff;border:1px solid #7a7a7a"></div>
<span class="t" style="left:2264.4px;top:530.8px;font-size:12px;line-height:14.4px;color:#000;transform:scaleX(0.870);">5330.5</span>
<div class="" style="left:2321.0px;top:529.6px;width:15.0px;height:17.3px;background:#f0f0f0;border-left:1px solid #c8c8c8"></div>
<svg class="a" style="left:2321.0px;top:528.6px" width="16" height="19.3"><path d="M5 7.1h6l-3-3.5zM5 12.1h6l-3 3.5z" fill="#222"/><path d="M1 9.6H15" stroke="#c8c8c8"/></svg>
<span class="t" style="left:2219.8px;top:504.9px;font-size:12px;line-height:14.4px;color:#fff;font-weight:bold;transform:scaleX(0.940);">60m</span>
<span class="t" style="left:2345.3px;top:505.2px;font-size:12px;line-height:14.4px;color:#fff;font-weight:bold;transform:scaleX(0.989);">Upper</span>
<span class="t" style="left:2345.3px;top:531.2px;font-size:12px;line-height:14.4px;color:#fff;font-weight:bold;transform:scaleX(0.971);">Lower</span>
<div class="" style="left:2261.7px;top:562.4px;width:75.3px;height:19.3px;background:#fff;border:1px solid #7a7a7a"></div>
<span class="t" style="left:2264.4px;top:564.5px;font-size:12px;line-height:14.4px;color:#000;transform:scaleX(0.870);">10150.0</span>
<div class="" style="left:2321.0px;top:563.4px;width:15.0px;height:17.3px;background:#f0f0f0;border-left:1px solid #c8c8c8"></div>
<svg class="a" style="left:2321.0px;top:562.4px" width="16" height="19.3"><path d="M5 7.1h6l-3-3.5zM5 12.1h6l-3 3.5z" fill="#222"/><path d="M1 9.6H15" stroke="#c8c8c8"/></svg>
<div class="" style="left:2261.7px;top:588.5px;width:75.3px;height:19.3px;background:#fff;border:1px solid #7a7a7a"></div>
<span class="t" style="left:2264.4px;top:590.6px;font-size:12px;line-height:14.4px;color:#000;transform:scaleX(0.870);">10100.0</span>
<div class="" style="left:2321.0px;top:589.5px;width:15.0px;height:17.3px;background:#f0f0f0;border-left:1px solid #c8c8c8"></div>
<svg class="a" style="left:2321.0px;top:588.5px" width="16" height="19.3"><path d="M5 7.1h6l-3-3.5zM5 12.1h6l-3 3.5z" fill="#222"/><path d="M1 9.6H15" stroke="#c8c8c8"/></svg>
<span class="t" style="left:2219.8px;top:564.7px;font-size:12px;line-height:14.4px;color:#fff;font-weight:bold;transform:scaleX(0.940);">30m</span>
<span class="t" style="left:2345.3px;top:565.0px;font-size:12px;line-height:14.4px;color:#fff;font-weight:bold;transform:scaleX(0.989);">Upper</span>
<span class="t" style="left:2345.3px;top:591.1px;font-size:12px;line-height:14.4px;color:#fff;font-weight:bold;transform:scaleX(0.971);">Lower</span>
<div class="" style="left:2261.7px;top:622.3px;width:75.3px;height:19.3px;background:#fff;border:1px solid #7a7a7a"></div>
<span class="t" style="left:2264.4px;top:624.4px;font-size:12px;line-height:14.4px;color:#000;transform:scaleX(0.870);">18168.0</span>
<div class="" style="left:2321.0px;top:623.3px;width:15.0px;height:17.3px;background:#f0f0f0;border-left:1px solid #c8c8c8"></div>
<svg class="a" style="left:2321.0px;top:622.3px" width="16" height="19.3"><path d="M5 7.1h6l-3-3.5zM5 12.1h6l-3 3.5z" fill="#222"/><path d="M1 9.6H15" stroke="#c8c8c8"/></svg>
<div class="" style="left:2261.7px;top:648.4px;width:75.3px;height:19.3px;background:#fff;border:1px solid #7a7a7a"></div>
<span class="t" style="left:2264.4px;top:650.5px;font-size:12px;line-height:14.4px;color:#000;transform:scaleX(0.870);">18068.0</span>
<div class="" style="left:2321.0px;top:649.4px;width:15.0px;height:17.3px;background:#f0f0f0;border-left:1px solid #c8c8c8"></div>
<svg class="a" style="left:2321.0px;top:648.4px" width="16" height="19.3"><path d="M5 7.1h6l-3-3.5zM5 12.1h6l-3 3.5z" fill="#222"/><path d="M1 9.6H15" stroke="#c8c8c8"/></svg>
<span class="t" style="left:2219.8px;top:624.6px;font-size:12px;line-height:14.4px;color:#fff;font-weight:bold;transform:scaleX(0.940);">17m</span>
<span class="t" style="left:2345.3px;top:624.9px;font-size:12px;line-height:14.4px;color:#fff;font-weight:bold;transform:scaleX(0.989);">Upper</span>
<span class="t" style="left:2345.3px;top:651.0px;font-size:12px;line-height:14.4px;color:#fff;font-weight:bold;transform:scaleX(0.971);">Lower</span>
<div class="" style="left:2261.7px;top:681.4px;width:75.3px;height:19.3px;background:#fff;border:1px solid #7a7a7a"></div>
<span class="t" style="left:2264.4px;top:683.5px;font-size:12px;line-height:14.4px;color:#000;transform:scaleX(0.870);">24990.0</span>
<div class="" style="left:2321.0px;top:682.4px;width:15.0px;height:17.3px;background:#f0f0f0;border-left:1px solid #c8c8c8"></div>
<svg class="a" style="left:2321.0px;top:681.4px" width="16" height="19.3"><path d="M5 7.1h6l-3-3.5zM5 12.1h6l-3 3.5z" fill="#222"/><path d="M1 9.6H15" stroke="#c8c8c8"/></svg>
<div class="" style="left:2261.7px;top:707.0px;width:75.3px;height:19.3px;background:#fff;border:1px solid #7a7a7a"></div>
<span class="t" style="left:2264.4px;top:709.1px;font-size:12px;line-height:14.4px;color:#000;transform:scaleX(0.870);">24890.0</span>
<div class="" style="left:2321.0px;top:708.0px;width:15.0px;height:17.3px;background:#f0f0f0;border-left:1px solid #c8c8c8"></div>
<svg class="a" style="left:2321.0px;top:707.0px" width="16" height="19.3"><path d="M5 7.1h6l-3-3.5zM5 12.1h6l-3 3.5z" fill="#222"/><path d="M1 9.6H15" stroke="#c8c8c8"/></svg>
<span class="t" style="left:2219.8px;top:683.7px;font-size:12px;line-height:14.4px;color:#fff;font-weight:bold;transform:scaleX(0.940);">12m</span>
<span class="t" style="left:2345.3px;top:684.0px;font-size:12px;line-height:14.4px;color:#fff;font-weight:bold;transform:scaleX(0.989);">Upper</span>
<span class="t" style="left:2345.3px;top:709.6px;font-size:12px;line-height:14.4px;color:#fff;font-weight:bold;transform:scaleX(0.971);">Lower</span>
<div class="" style="left:2261.7px;top:743.0px;width:75.3px;height:19.3px;background:#fff;border:1px solid #7a7a7a"></div>
<span class="t" style="left:2264.4px;top:745.1px;font-size:12px;line-height:14.4px;color:#000;transform:scaleX(0.870);">54000.0</span>
<div class="" style="left:2321.0px;top:744.0px;width:15.0px;height:17.3px;background:#f0f0f0;border-left:1px solid #c8c8c8"></div>
<svg class="a" style="left:2321.0px;top:743.0px" width="16" height="19.3"><path d="M5 7.1h6l-3-3.5zM5 12.1h6l-3 3.5z" fill="#222"/><path d="M1 9.6H15" stroke="#c8c8c8"/></svg>
<div class="" style="left:2261.7px;top:769.4px;width:75.3px;height:19.3px;background:#fff;border:1px solid #7a7a7a"></div>
<span class="t" style="left:2264.4px;top:771.5px;font-size:12px;line-height:14.4px;color:#000;transform:scaleX(0.870);">50000.0</span>
<div class="" style="left:2321.0px;top:770.4px;width:15.0px;height:17.3px;background:#f0f0f0;border-left:1px solid #c8c8c8"></div>
<svg class="a" style="left:2321.0px;top:769.4px" width="16" height="19.3"><path d="M5 7.1h6l-3-3.5zM5 12.1h6l-3 3.5z" fill="#222"/><path d="M1 9.6H15" stroke="#c8c8c8"/></svg>
<span class="t" style="left:2226.1px;top:745.3px;font-size:12px;line-height:14.4px;color:#fff;font-weight:bold;transform:scaleX(0.940);">6m</span>
<span class="t" style="left:2345.3px;top:745.6px;font-size:12px;line-height:14.4px;color:#fff;font-weight:bold;transform:scaleX(0.989);">Upper</span>
<span class="t" style="left:2345.3px;top:772.0px;font-size:12px;line-height:14.4px;color:#fff;font-weight:bold;transform:scaleX(0.971);">Lower</span>
<div class="" style="left:2451.4px;top:444.5px;width:74.6px;height:19.3px;background:#fff;border:1px solid #7a7a7a"></div>
<span class="t" style="left:2454.1px;top:446.6px;font-size:12px;line-height:14.4px;color:#000;transform:scaleX(0.870);">4000.0</span>
<div class="" style="left:2510.0px;top:445.5px;width:15.0px;height:17.3px;background:#f0f0f0;border-left:1px solid #c8c8c8"></div>
<svg class="a" style="left:2510.0px;top:444.5px" width="16" height="19.3"><path d="M5 7.1h6l-3-3.5zM5 12.1h6l-3 3.5z" fill="#222"/><path d="M1 9.6H15" stroke="#c8c8c8"/></svg>
<div class="" style="left:2451.4px;top:470.8px;width:74.6px;height:19.3px;background:#fff;border:1px solid #7a7a7a"></div>
<span class="t" style="left:2454.1px;top:473.0px;font-size:12px;line-height:14.4px;color:#000;transform:scaleX(0.870);">3500.0</span>
<div class="" style="left:2510.0px;top:471.8px;width:15.0px;height:17.3px;background:#f0f0f0;border-left:1px solid #c8c8c8"></div>
<svg class="a" style="left:2510.0px;top:470.8px" width="16" height="19.3"><path d="M5 7.2h6l-3-3.5zM5 12.2h6l-3 3.5z" fill="#222"/><path d="M1 9.7H15" stroke="#c8c8c8"/></svg>
<span class="t" style="left:2410.4px;top:446.8px;font-size:12px;line-height:14.4px;color:#fff;font-weight:bold;transform:scaleX(0.940);">80m</span>
<span class="t" style="left:2534.5px;top:447.1px;font-size:12px;line-height:14.4px;color:#fff;font-weight:bold;transform:scaleX(0.989);">Upper</span>
<span class="t" style="left:2534.5px;top:473.4px;font-size:12px;line-height:14.4px;color:#fff;font-weight:bold;transform:scaleX(0.971);">Lower</span>
<div class="" style="left:2451.4px;top:502.6px;width:74.6px;height:19.3px;background:#fff;border:1px solid #7a7a7a"></div>
<span class="t" style="left:2454.1px;top:504.8px;font-size:12px;line-height:14.4px;color:#000;transform:scaleX(0.870);">7300.0</span>
<div class="" style="left:2510.0px;top:503.6px;width:15.0px;height:17.3px;background:#f0f0f0;border-left:1px solid #c8c8c8"></div>
<svg class="a" style="left:2510.0px;top:502.6px" width="16" height="19.3"><path d="M5 7.1h6l-3-3.5zM5 12.1h6l-3 3.5z" fill="#222"/><path d="M1 9.6H15" stroke="#c8c8c8"/></svg>
<div class="" style="left:2451.4px;top:528.6px;width:74.6px;height:19.3px;background:#fff;border:1px solid #7a7a7a"></div>
<span class="t" style="left:2454.1px;top:530.8px;font-size:12px;line-height:14.4px;color:#000;transform:scaleX(0.870);">7000.0</span>
<div class="" style="left:2510.0px;top:529.6px;width:15.0px;height:17.3px;background:#f0f0f0;border-left:1px solid #c8c8c8"></div>
<svg class="a" style="left:2510.0px;top:528.6px" width="16" height="19.3"><path d="M5 7.1h6l-3-3.5zM5 12.1h6l-3 3.5z" fill="#222"/><path d="M1 9.6H15" stroke="#c8c8c8"/></svg>
<span class="t" style="left:2410.4px;top:504.9px;font-size:12px;line-height:14.4px;color:#fff;font-weight:bold;transform:scaleX(0.940);">40m</span>
<span class="t" style="left:2534.5px;top:505.2px;font-size:12px;line-height:14.4px;color:#fff;font-weight:bold;transform:scaleX(0.989);">Upper</span>
<span class="t" style="left:2534.5px;top:531.2px;font-size:12px;line-height:14.4px;color:#fff;font-weight:bold;transform:scaleX(0.971);">Lower</span>
<div class="" style="left:2451.4px;top:562.4px;width:74.6px;height:19.3px;background:#fff;border:1px solid #7a7a7a"></div>
<span class="t" style="left:2454.1px;top:564.5px;font-size:12px;line-height:14.4px;color:#000;transform:scaleX(0.870);">14350.0</span>
<div class="" style="left:2510.0px;top:563.4px;width:15.0px;height:17.3px;background:#f0f0f0;border-left:1px solid #c8c8c8"></div>
<svg class="a" style="left:2510.0px;top:562.4px" width="16" height="19.3"><path d="M5 7.1h6l-3-3.5zM5 12.1h6l-3 3.5z" fill="#222"/><path d="M1 9.6H15" stroke="#c8c8c8"/></svg>
<div class="" style="left:2451.4px;top:588.5px;width:74.6px;height:19.3px;background:#fff;border:1px solid #7a7a7a"></div>
<span class="t" style="left:2454.1px;top:590.6px;font-size:12px;line-height:14.4px;color:#000;transform:scaleX(0.870);">14000.0</span>
<div class="" style="left:2510.0px;top:589.5px;width:15.0px;height:17.3px;background:#f0f0f0;border-left:1px solid #c8c8c8"></div>
<svg class="a" style="left:2510.0px;top:588.5px" width="16" height="19.3"><path d="M5 7.1h6l-3-3.5zM5 12.1h6l-3 3.5z" fill="#222"/><path d="M1 9.6H15" stroke="#c8c8c8"/></svg>
<span class="t" style="left:2410.4px;top:564.7px;font-size:12px;line-height:14.4px;color:#fff;font-weight:bold;transform:scaleX(0.940);">20m</span>
<span class="t" style="left:2534.5px;top:565.0px;font-size:12px;line-height:14.4px;color:#fff;font-weight:bold;transform:scaleX(0.989);">Upper</span>
<span class="t" style="left:2534.5px;top:591.1px;font-size:12px;line-height:14.4px;color:#fff;font-weight:bold;transform:scaleX(0.971);">Lower</span>
<div class="" style="left:2451.4px;top:622.3px;width:74.6px;height:19.3px;background:#fff;border:1px solid #7a7a7a"></div>
<span class="t" style="left:2454.1px;top:624.4px;font-size:12px;line-height:14.4px;color:#000;transform:scaleX(0.870);">21450.0</span>
<div class="" style="left:2510.0px;top:623.3px;width:15.0px;height:17.3px;background:#f0f0f0;border-left:1px solid #c8c8c8"></div>
<svg class="a" style="left:2510.0px;top:622.3px" width="16" height="19.3"><path d="M5 7.1h6l-3-3.5zM5 12.1h6l-3 3.5z" fill="#222"/><path d="M1 9.6H15" stroke="#c8c8c8"/></svg>
<div class="" style="left:2451.4px;top:648.4px;width:74.6px;height:19.3px;background:#fff;border:1px solid #7a7a7a"></div>
<span class="t" style="left:2454.1px;top:650.5px;font-size:12px;line-height:14.4px;color:#000;transform:scaleX(0.870);">21000.0</span>
<div class="" style="left:2510.0px;top:649.4px;width:15.0px;height:17.3px;background:#f0f0f0;border-left:1px solid #c8c8c8"></div>
<svg class="a" style="left:2510.0px;top:648.4px" width="16" height="19.3"><path d="M5 7.1h6l-3-3.5zM5 12.1h6l-3 3.5z" fill="#222"/><path d="M1 9.6H15" stroke="#c8c8c8"/></svg>
<span class="t" style="left:2410.4px;top:624.6px;font-size:12px;line-height:14.4px;color:#fff;font-weight:bold;transform:scaleX(0.940);">15m</span>
<span class="t" style="left:2534.5px;top:624.9px;font-size:12px;line-height:14.4px;color:#fff;font-weight:bold;transform:scaleX(0.989);">Upper</span>
<span class="t" style="left:2534.5px;top:651.0px;font-size:12px;line-height:14.4px;color:#fff;font-weight:bold;transform:scaleX(0.971);">Lower</span>
<div class="" style="left:2451.4px;top:681.4px;width:74.6px;height:19.3px;background:#fff;border:1px solid #7a7a7a"></div>
<span class="t" style="left:2454.1px;top:683.5px;font-size:12px;line-height:14.4px;color:#000;transform:scaleX(0.870);">29700.0</span>
<div class="" style="left:2510.0px;top:682.4px;width:15.0px;height:17.3px;background:#f0f0f0;border-left:1px solid #c8c8c8"></div>
<svg class="a" style="left:2510.0px;top:681.4px" width="16" height="19.3"><path d="M5 7.1h6l-3-3.5zM5 12.1h6l-3 3.5z" fill="#222"/><path d="M1 9.6H15" stroke="#c8c8c8"/></svg>
<div class="" style="left:2451.4px;top:707.0px;width:74.6px;height:19.3px;background:#fff;border:1px solid #7a7a7a"></div>
<span class="t" style="left:2454.1px;top:709.1px;font-size:12px;line-height:14.4px;color:#000;transform:scaleX(0.870);">28000.0</span>
<div class="" style="left:2510.0px;top:708.0px;width:15.0px;height:17.3px;background:#f0f0f0;border-left:1px solid #c8c8c8"></div>
<svg class="a" style="left:2510.0px;top:707.0px" width="16" height="19.3"><path d="M5 7.1h6l-3-3.5zM5 12.1h6l-3 3.5z" fill="#222"/><path d="M1 9.6H15" stroke="#c8c8c8"/></svg>
<span class="t" style="left:2410.4px;top:683.7px;font-size:12px;line-height:14.4px;color:#fff;font-weight:bold;transform:scaleX(0.940);">10m</span>
<span class="t" style="left:2534.5px;top:684.0px;font-size:12px;line-height:14.4px;color:#fff;font-weight:bold;transform:scaleX(0.989);">Upper</span>
<span class="t" style="left:2534.5px;top:709.6px;font-size:12px;line-height:14.4px;color:#fff;font-weight:bold;transform:scaleX(0.971);">Lower</span>
<span class="t" style="left:2216.7px;top:832.7px;font-size:12px;line-height:14.4px;color:#fff;font-weight:bold;transform:scaleX(0.967);">Band Edge Colors</span>
<div class="b" style="left:2327.4px;top:828.6px;width:55.4px;height:21.8px;font-size:11.6px;"><span style="display:inline-block;transform:scaleX(0.88);white-space:nowrap">Select</span></div>
<span class="t" style="left:2408.6px;top:832.7px;font-size:12px;line-height:14.4px;color:#fff;font-weight:bold;transform:scaleX(0.994);">Band Edge Width</span>
<div class="" style="left:2516.1px;top:831.2px;width:37.6px;height:18.8px;background:#fff;border:1px solid #7a7a7a"></div>
<span class="t" style="left:2518.8px;top:833.1px;font-size:12px;line-height:14.4px;color:#000;transform:scaleX(0.870);">2</span>
<div class="" style="left:2537.7px;top:832.2px;width:15.0px;height:16.8px;background:#f0f0f0;border-left:1px solid #c8c8c8"></div>
<svg class="a" style="left:2537.7px;top:831.2px" width="16" height="18.8"><path d="M5 6.9h6l-3-3.5zM5 11.9h6l-3 3.5z" fill="#222"/><path d="M1 9.4H15" stroke="#c8c8c8"/></svg>
<div class="g" style="left:2199.4px;top:885.2px;width:393.6px;height:72.0px;"></div>
<span class="t" style="left:2223.5px;top:893.7px;font-size:14.5px;line-height:17.4px;color:#fcd616;font-weight:bold;transform:scaleX(0.966);">Cluster Spots</span>
<div class="ck" style="left:2262.1px;top:922.1px;width:11.6px;height:11.6px;"><svg viewBox="0 0 12 12" width="100%" height="100%"><path d="M2.2 6.2 L4.8 8.8 L10 2.8" fill="none" stroke="#000" stroke-width="1.5"/></svg></div>
<span class="t" style="left:2280.1px;top:920.7px;font-size:12px;line-height:14.4px;color:#fff;font-weight:bold;transform:scaleX(0.971);">Spot Only</span>
<div class="ck" style="left:2417.2px;top:922.1px;width:11.6px;height:11.6px;"></div>
<span class="t" style="left:2436.1px;top:920.7px;font-size:12px;line-height:14.4px;color:#fff;font-weight:bold;">Spot DE Spotter</span>
<div class="g" style="left:1934.4px;top:964.4px;width:658.6px;height:57.1px;"></div>
<div class="b" style="left:1956.0px;top:978.5px;width:75.3px;height:23.0px;font-size:11.6px;"><span style="display:inline-block;transform:scaleX(0.88);white-space:nowrap">OK</span></div>
<div class="win s2"  style="left:2612.3px;top:525.8px;width:529.6999999999998px;height:514.2px;background:#f0f0f0"></div>
<div class="tb" style="left:2612.3px;top:525.8px;width:529.7px;height:43.5px;"></div>
<div class="" style="left:2615.2px;top:530.4px;width:15.8px;height:15.4px;background:#5a0a00;border-radius:1px"></div>
<div class="" style="left:2616.5px;top:531.5px;width:13.3px;height:13.3px;border-radius:50%;background:radial-gradient(circle at 45% 45%,#ff9a30 0%,#f86a10 45%,#d83000 80%,#8a1400 100%)"></div>
<span class="t" style="left:2636.7px;top:531.1px;font-size:12px;line-height:14.4px;color:#999;">Current Conditions</span>
<div class="" style="left:3023.0px;top:537.3px;width:10.0px;height:1.0px;background:#8a8a8a"></div>
<div class="" style="left:3068.3px;top:532.5px;width:10.0px;height:10.0px;border:1px solid #e0e0e0"></div>
<svg class="a" style="left:3113px;top:531.5px" width="12" height="12"><path d="M1 1L11 11M11 1L1 11" stroke="#888" stroke-width="1" fill="none"/></svg>
<span class="t" style="left:2619.2px;top:553.8px;font-size:12px;line-height:14.4px;color:#6d6d6d;transform:scaleX(0.941);">File</span>
<span class="t" style="left:2651.0px;top:553.8px;font-size:12px;line-height:14.4px;color:#6d6d6d;transform:scaleX(0.962);">Edit</span>
<span class="t" style="left:2684.9px;top:553.8px;font-size:12px;line-height:14.4px;color:#6d6d6d;transform:scaleX(1.009);">Windows</span>
<span class="t" style="left:2747.9px;top:553.8px;font-size:12px;line-height:14.4px;color:#6d6d6d;transform:scaleX(1.025);">Help</span>
<span class="t" style="left:2947.1px;top:573.7px;font-size:12px;line-height:14.4px;color:#000;transform:scaleX(0.875);">UTC: 2056</span>
<span class="t" style="left:2632.2px;top:593.8px;font-size:12px;line-height:14.4px;color:#000;transform:scaleX(0.938);">Solar Flux:</span>
<span class="t" style="left:2761.9px;top:593.8px;font-size:12px;line-height:14.4px;color:#000;transform:scaleX(0.975);">73</span>
<span class="t" style="left:2819.0px;top:593.8px;font-size:12px;line-height:14.4px;color:#000;transform:scaleX(0.975);">SSN:</span>
<span class="t" style="left:2880.8px;top:593.8px;font-size:12px;line-height:14.4px;color:#000;transform:scaleX(0.975);">0</span>
<div class="" style="left:2947.1px;top:594.5px;width:12.9px;height:13.0px;background:#fff;border:1px solid #333"></div>
<span class="t" style="left:2963.4px;top:593.8px;font-size:12px;line-height:14.4px;color:#000;transform:scaleX(0.970);">Play Alert Sound</span>
<span class="t" style="left:2632.2px;top:613.9px;font-size:12px;line-height:14.4px;color:#000;transform:scaleX(0.975);">A-Index:</span>
<span class="t" style="left:2761.9px;top:613.9px;font-size:12px;line-height:14.4px;color:#000;transform:scaleX(0.975);">11</span>
<span class="t" style="left:2632.2px;top:633.9px;font-size:12px;line-height:14.4px;color:#000;transform:scaleX(0.975);">K-Index:</span>
<span class="t" style="left:2761.9px;top:633.9px;font-size:12px;line-height:14.4px;color:#000;transform:scaleX(0.975);">2</span>
<span class="t" style="left:2793.2px;top:633.9px;font-size:12px;line-height:14.4px;color:#000;transform:scaleX(0.975);">at</span>
<span class="t" style="left:2819.0px;top:633.9px;font-size:12px;line-height:14.4px;color:#000;transform:scaleX(0.975);">1800</span>
<span class="t" style="left:2881.2px;top:633.9px;font-size:12px;line-height:14.4px;color:#000;transform:scaleX(0.975);">UTC</span>
<span class="t" style="left:2812.2px;top:673.8px;font-size:12px;line-height:14.4px;color:#000;transform:scaleX(0.941);">Past 24 Hours:</span>
<span class="t" style="left:2962.3px;top:673.8px;font-size:12px;line-height:14.4px;color:#000;transform:scaleX(0.968);">Next 24 Hours:</span>
<span class="t" style="left:2632.2px;top:694.0px;font-size:12px;line-height:14.4px;color:#000;transform:scaleX(0.975);">Space weather :</span>
<span class="t" style="left:2812.5px;top:694.0px;font-size:12px;line-height:14.4px;color:#000;transform:scaleX(0.975);">None</span>
<span class="t" style="left:2962.0px;top:694.0px;font-size:12px;line-height:14.4px;color:#000;transform:scaleX(0.975);">None</span>
<span class="t" style="left:2632.2px;top:714.1px;font-size:12px;line-height:14.4px;color:#000;transform:scaleX(0.975);">Geomagnetic storms:</span>
<span class="t" style="left:2812.5px;top:714.1px;font-size:12px;line-height:14.4px;color:#000;transform:scaleX(0.975);">None</span>
<span class="t" style="left:2962.0px;top:714.1px;font-size:12px;line-height:14.4px;color:#000;transform:scaleX(0.975);">None</span>
<span class="t" style="left:2632.2px;top:733.8px;font-size:12px;line-height:14.4px;color:#000;transform:scaleX(0.975);">Solar radiation storms:</span>
<span class="t" style="left:2812.5px;top:733.8px;font-size:12px;line-height:14.4px;color:#000;transform:scaleX(0.975);">None</span>
<span class="t" style="left:2962.0px;top:733.8px;font-size:12px;line-height:14.4px;color:#000;transform:scaleX(0.975);">None</span>
<span class="t" style="left:2632.2px;top:753.9px;font-size:12px;line-height:14.4px;color:#000;transform:scaleX(0.975);">Radio blackouts:</span>
<span class="t" style="left:2812.5px;top:753.9px;font-size:12px;line-height:14.4px;color:#000;transform:scaleX(0.975);">None</span>
<span class="t" style="left:2962.0px;top:753.9px;font-size:12px;line-height:14.4px;color:#000;transform:scaleX(0.975);">None</span>
<span class="t" style="left:2712.3px;top:813.8px;font-size:12px;line-height:14.4px;color:#000;transform:scaleX(0.920);">GOES Primary</span>
<span class="t" style="left:2912.2px;top:813.8px;font-size:12px;line-height:14.4px;color:#000;transform:scaleX(0.910);">GOES Secondary</span>
<span class="t" style="left:2632.2px;top:834.0px;font-size:12px;line-height:14.4px;color:#000;transform:scaleX(0.975);">Current:</span>
<span class="t" style="left:2712.3px;top:834.0px;font-size:12px;line-height:14.4px;color:#000;transform:scaleX(0.884);">0000</span>
<span class="t" style="left:2814.4px;top:834.0px;font-size:12px;line-height:14.4px;color:#000;transform:scaleX(0.940);">A0</span>
<span class="t" style="left:2912.2px;top:834.0px;font-size:12px;line-height:14.4px;color:#000;transform:scaleX(0.884);">0000</span>
<span class="t" style="left:3011.8px;top:834.0px;font-size:12px;line-height:14.4px;color:#000;transform:scaleX(0.940);">A0</span>
<span class="t" style="left:2632.2px;top:873.7px;font-size:12px;line-height:14.4px;color:#000;transform:scaleX(0.975);">Max:</span>
<span class="t" style="left:2632.2px;top:920.8px;font-size:12px;line-height:14.4px;color:#000;transform:scaleX(0.963);">Solar wind: 473.8 km/s  Density: 1.4 p/cc  Temperature: 70700 K</span>
<span class="t" style="left:2632.2px;top:944.1px;font-size:12px;line-height:14.4px;color:#000;transform:scaleX(0.946);">Magnetic Field  Bx: -2.8  By: -1.4  Bz: -2.1  Bt: 3.8 nT  Lat: 33.6  Long: 206 deg</span>
<div class="wb" style="left:2633.0px;top:972.0px;width:78.0px;height:20.0px;"><span style="transform:scaleX(.93)">Solar Wind</span></div>
<div class="wb" style="left:2723.0px;top:972.0px;width:78.8px;height:20.0px;"><span style="transform:scaleX(.93)">Mag Field</span></div>
<div class="wb" style="left:2813.2px;top:972.0px;width:78.2px;height:20.0px;"><span style="transform:scaleX(.93)">Proton Flux</span></div>
<div class="wb" style="left:2905.9px;top:972.0px;width:87.0px;height:20.0px;"><span style="transform:scaleX(.93)">Electron Flux</span></div>
<div class="wb" style="left:3003.6px;top:972.0px;width:87.0px;height:20.0px;"><span style="transform:scaleX(.93)">Planetary Kp</span></div>
<svg class="a" style="left:1836px;top:947px" width="44" height="48" viewBox="0 0 44 48"><defs><linearGradient id="rb" x1="0" y1="0" x2="1" y2="0"><stop offset="0" stop-color="#b8d4ec"/><stop offset="0.55" stop-color="#e4eef8"/><stop offset="1" stop-color="#9fc0e0"/></linearGradient></defs><path d="M3 8 L19 3 L41 9 L36 41 L22 45 L8 39 Z" fill="url(#rb)" opacity=".66"/><path d="M3 8 L19 3 L41 9 L24 15 Z" fill="#7fa8d4" opacity=".9" stroke="#e8f2fb" stroke-width="1"/><path d="M3 8 L24 15 L22 45 L8 39 Z" fill="#c4d8ee" opacity=".55"/><path d="M8.5 36 L22 41 L36 37 L36 41 L22 45 L8 39Z" fill="#e8c8b0" opacity=".8"/><circle cx="14" cy="26" r="6.5" fill="none" stroke="#1a78d8" stroke-width="3.2" stroke-dasharray="9 4.6"/></svg>
<span class="t" style="left:1828.3px;top:998.5px;font-size:12px;line-height:14.4px;color:#fff;transform:scaleX(0.939);text-shadow:0 1px 2px rgba(0,0,0,.8),0 0 3px rgba(0,0,0,.6);">Recycle Bin</span></div></body></html>
